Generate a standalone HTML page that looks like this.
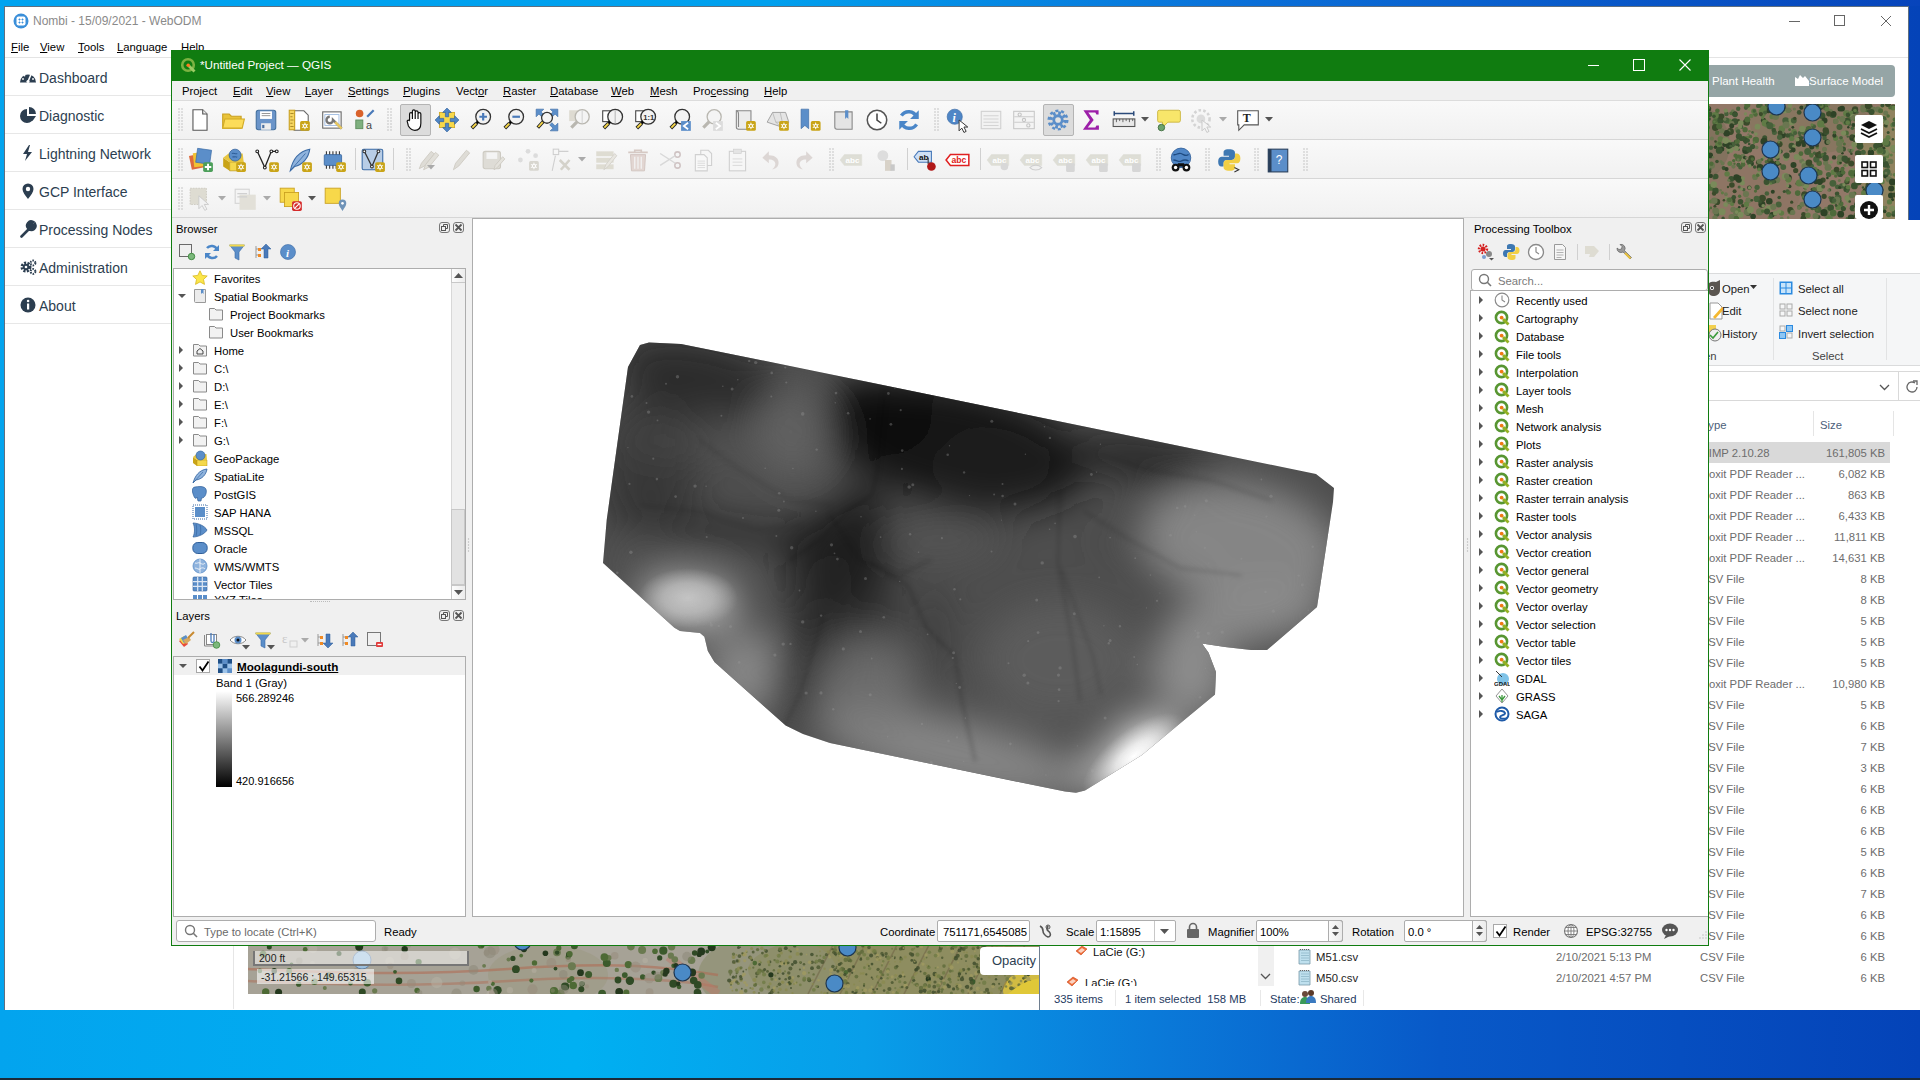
<!DOCTYPE html><html><head><meta charset="utf-8"><title>QGIS</title><style>
*{box-sizing:border-box;margin:0;padding:0}
body{width:1920px;height:1080px;overflow:hidden;position:relative;font-family:"Liberation Sans",sans-serif;font-size:11.3px;color:#000;
background:linear-gradient(90deg,#03a4ee 0%,#00b0f2 30%,#089ee9 45%,#0a7ad9 60%,#0859c8 75%,#0443b8 100%)}
.a{position:absolute}
.t{position:absolute;white-space:nowrap;line-height:14px}
.ico{position:absolute}
</style></head><body>
<div class="a" style="left:0;top:1078px;width:1920px;height:2px;background:#1b2a38"></div>
<div class="a" style="left:0;top:0;width:1920px;height:6px;background:linear-gradient(90deg,#00a3f0 0%,#00a0ee 40%,#0a6fd8 65%,#0744bb 100%)"></div>
<div class="a" style="left:4px;top:6px;width:1905px;height:1004px;background:#fff;border:1px solid #5f6f80;border-bottom:none"></div>
<svg class="a" style="left:13px;top:13px" width="16" height="16"><circle cx="8" cy="8" r="7.5" fill="#3b8fd9"/><rect x="3.5" y="3.5" width="9" height="9" rx="2" fill="#fff"/><path d="M5.5 6.5h2M6.5 5.5v2M8.5 6.5h2M9.5 5.5v2M5.5 9.5h2M6.5 8.5v2M8.5 9.5h2M9.5 8.5v2" stroke="#3b8fd9" stroke-width=".9"/></svg>
<div class="t" style="left:33px;top:14px;font-size:12px;color:#8a8a8a">Nombi - 15/09/2021 - WebODM</div>
<div class="a" style="left:5px;top:57px;width:1903px;height:1px;background:#e4e4e4"></div>
<div class="t" style="left:11px;top:40px"><u>F</u>ile</div>
<div class="t" style="left:40px;top:40px"><u>V</u>iew</div>
<div class="t" style="left:78px;top:40px"><u>T</u>ools</div>
<div class="t" style="left:117px;top:40px"><u>L</u>anguage</div>
<div class="t" style="left:181px;top:40px"><u>H</u>elp</div>
<div class="a" style="left:1789px;top:21px;width:11px;height:1px;background:#666"></div>
<div class="a" style="left:1834px;top:15px;width:11px;height:11px;border:1px solid #666"></div>
<svg class="a" style="left:1880px;top:15px" width="12" height="12"><path d="M1 1L11 11M11 1L1 11" stroke="#666" stroke-width="1"/></svg>
<div class="a" style="left:5px;top:95px;width:170px;height:1px;background:#e7e7e7"></div>
<div class="t" style="left:39px;top:70px;font-size:14px;line-height:16px;color:#2c3e50">Dashboard</div>
<svg class="a" style="left:19px;top:68px" width="18" height="18" viewBox="0 0 18 18"><path d="M1 14.5a8 8 0 0 1 16 0z" fill="#2c3e50"/><path d="M9 13.5l3-7" stroke="#fff" stroke-width="1.6"/><circle cx="9" cy="13.5" r="1.6" fill="#fff"/><circle cx="4" cy="11" r=".9" fill="#fff"/><circle cx="5.5" cy="7.5" r=".9" fill="#fff"/><circle cx="14" cy="11" r=".9" fill="#fff"/></svg>
<div class="a" style="left:5px;top:133px;width:170px;height:1px;background:#e7e7e7"></div>
<div class="t" style="left:39px;top:108px;font-size:14px;line-height:16px;color:#2c3e50">Diagnostic</div>
<svg class="a" style="left:19px;top:106px" width="18" height="18" viewBox="0 0 18 18"><path d="M8 3a7 7 0 1 0 7 7H8z" fill="#2c3e50"/><path d="M10 1v7h7a7 7 0 0 0-7-7z" fill="#2c3e50"/><path d="M10 10h7l-3.5 5z" fill="#2c3e50"/></svg>
<div class="a" style="left:5px;top:171px;width:170px;height:1px;background:#e7e7e7"></div>
<div class="t" style="left:39px;top:146px;font-size:14px;line-height:16px;color:#2c3e50">Lightning Network</div>
<svg class="a" style="left:19px;top:144px" width="18" height="18" viewBox="0 0 18 18"><path d="M10 1L4 10h4l-2 7 7-9H9l2-7z" fill="#2c3e50"/></svg>
<div class="a" style="left:5px;top:209px;width:170px;height:1px;background:#e7e7e7"></div>
<div class="t" style="left:39px;top:184px;font-size:14px;line-height:16px;color:#2c3e50">GCP Interface</div>
<svg class="a" style="left:19px;top:182px" width="18" height="18" viewBox="0 0 18 18"><path d="M9 17c-3-4-5.5-7-5.5-10a5.5 5.5 0 0 1 11 0c0 3-2.5 6-5.5 10z" fill="#2c3e50"/><circle cx="9" cy="7" r="2.2" fill="#fff"/></svg>
<div class="a" style="left:5px;top:247px;width:170px;height:1px;background:#e7e7e7"></div>
<div class="t" style="left:39px;top:222px;font-size:14px;line-height:16px;color:#2c3e50">Processing Nodes</div>
<svg class="a" style="left:19px;top:220px" width="18" height="18" viewBox="0 0 18 18"><path d="M2.5 16.5l7.5-7.5M10 9a4 4 0 0 0 6-5l-2.5 2.5-2-2L14 2a4 4 0 0 0-5 6" stroke="#2c3e50" stroke-width="2.6" fill="#2c3e50" stroke-linecap="round"/></svg>
<div class="a" style="left:5px;top:285px;width:170px;height:1px;background:#e7e7e7"></div>
<div class="t" style="left:39px;top:260px;font-size:14px;line-height:16px;color:#2c3e50">Administration</div>
<svg class="a" style="left:19px;top:258px" width="18" height="18" viewBox="0 0 18 18"><circle cx="7" cy="9" r="4" fill="none" stroke="#2c3e50" stroke-width="3" stroke-dasharray="2 1.3"/><circle cx="7" cy="9" r="3.2" fill="#2c3e50"/><circle cx="7" cy="9" r="1.3" fill="#fff"/><circle cx="14" cy="5" r="2.4" fill="none" stroke="#2c3e50" stroke-width="2" stroke-dasharray="1.4 1"/><circle cx="14" cy="13.5" r="2.4" fill="none" stroke="#2c3e50" stroke-width="2" stroke-dasharray="1.4 1"/></svg>
<div class="a" style="left:5px;top:323px;width:170px;height:1px;background:#e7e7e7"></div>
<div class="t" style="left:39px;top:298px;font-size:14px;line-height:16px;color:#2c3e50">About</div>
<svg class="a" style="left:19px;top:296px" width="18" height="18" viewBox="0 0 18 18"><circle cx="9" cy="9" r="7.5" fill="#2c3e50"/><rect x="8" y="7.5" width="2.2" height="6" fill="#fff"/><circle cx="9.1" cy="5" r="1.3" fill="#fff"/></svg>
<div class="a" style="left:233px;top:945px;width:1px;height:64px;background:#e6e6e6"></div>
<div class="a" style="left:1650px;top:65px;width:245px;height:32px;border-radius:4px;background:#95a5a6"></div>
<div class="t" style="left:1712px;top:73px;font-size:11.5px;line-height:16px;color:#fff">Plant Health</div>
<svg class="a" style="left:1795px;top:74px" width="14" height="12"><path d="M0 12V3l3 2 2-4 3 3 2-2 4 5v5z" fill="#fff"/></svg>
<div class="t" style="left:1809px;top:73px;font-size:11.5px;line-height:16px;color:#fff">Surface Model</div>
<svg class="a" style="left:1650px;top:104px" width="245" height="115"><rect width="245" height="115" fill="#927868"/><ellipse cx="160" cy="20" rx="60" ry="30" fill="#7d7458" opacity="0.5"/><ellipse cx="235" cy="60" rx="25" ry="60" fill="#8f8a5a" opacity="0.6"/><ellipse cx="100" cy="90" rx="50" ry="30" fill="#8a7260" opacity="0.5"/><ellipse cx="40" cy="40" rx="40" ry="40" fill="#6f6a50" opacity="0.4"/><circle cx="79.3" cy="17.3" r="2.8" fill="#5f7a45"/><circle cx="201.2" cy="10.8" r="2.6" fill="#7a8a5a"/><circle cx="9.2" cy="49.9" r="1.4" fill="#5f7a45"/><circle cx="135.0" cy="6.8" r="2.6" fill="#7a8a5a"/><circle cx="154.5" cy="67.0" r="1.3" fill="#2e4226"/><circle cx="12.1" cy="25.4" r="2.5" fill="#3a5230"/><circle cx="71.0" cy="16.6" r="1.5" fill="#46603a"/><circle cx="137.3" cy="78.4" r="1.4" fill="#7a8a5a"/><circle cx="91.2" cy="63.0" r="1.4" fill="#4e6a3a"/><circle cx="151.7" cy="57.1" r="2.5" fill="#6a7650"/><circle cx="114.1" cy="106.2" r="2.1" fill="#7a8a5a"/><circle cx="194.6" cy="80.4" r="1.8" fill="#46603a"/><circle cx="128.7" cy="100.6" r="3.0" fill="#46603a"/><circle cx="149.2" cy="8.4" r="2.4" fill="#3a5230"/><circle cx="185.5" cy="17.5" r="2.4" fill="#4e6a3a"/><circle cx="235.7" cy="8.9" r="2.5" fill="#6a7650"/><circle cx="83.3" cy="40.3" r="2.4" fill="#3a4a2a"/><circle cx="16.8" cy="10.8" r="1.8" fill="#5f7a45"/><circle cx="14.9" cy="80.7" r="2.8" fill="#3a4a2a"/><circle cx="69.7" cy="44.4" r="2.8" fill="#4e6a3a"/><circle cx="230.5" cy="40.9" r="2.7" fill="#3a4a2a"/><circle cx="14.4" cy="88.3" r="1.5" fill="#7a8a5a"/><circle cx="97.5" cy="105.4" r="2.4" fill="#3a5230"/><circle cx="110.1" cy="63.2" r="3.3" fill="#2e4226"/><circle cx="211.7" cy="32.0" r="2.2" fill="#6a7650"/><circle cx="167.3" cy="43.8" r="1.8" fill="#5f7a45"/><circle cx="43.2" cy="26.7" r="1.8" fill="#3a4a2a"/><circle cx="203.6" cy="21.0" r="1.9" fill="#3a5230"/><circle cx="102.6" cy="42.5" r="2.6" fill="#3a5230"/><circle cx="169.2" cy="59.3" r="2.7" fill="#4e6a3a"/><circle cx="111.9" cy="100.2" r="3.5" fill="#2e4226"/><circle cx="97.5" cy="45.3" r="2.4" fill="#2e4226"/><circle cx="15.3" cy="7.7" r="1.7" fill="#3a5230"/><circle cx="26.9" cy="69.1" r="1.4" fill="#3a5230"/><circle cx="131.5" cy="109.1" r="2.7" fill="#5f7a45"/><circle cx="214.2" cy="70.6" r="1.6" fill="#46603a"/><circle cx="234.1" cy="69.3" r="2.3" fill="#5f7a45"/><circle cx="208.0" cy="114.2" r="2.3" fill="#3a4a2a"/><circle cx="76.4" cy="16.6" r="3.0" fill="#46603a"/><circle cx="117.3" cy="79.6" r="2.4" fill="#7a8a5a"/><circle cx="233.0" cy="60.7" r="1.6" fill="#4e6a3a"/><circle cx="185.7" cy="34.3" r="2.7" fill="#5f7a45"/><circle cx="170.6" cy="30.0" r="2.1" fill="#3a5230"/><circle cx="87.1" cy="25.6" r="2.5" fill="#6a7650"/><circle cx="155.9" cy="70.5" r="3.1" fill="#7a8a5a"/><circle cx="197.5" cy="94.1" r="3.0" fill="#7a8a5a"/><circle cx="49.0" cy="56.7" r="3.0" fill="#4e6a3a"/><circle cx="193.6" cy="54.3" r="1.7" fill="#6a7650"/><circle cx="109.6" cy="107.8" r="3.6" fill="#6a7650"/><circle cx="19.7" cy="11.7" r="2.3" fill="#6a7650"/><circle cx="50.1" cy="71.8" r="3.4" fill="#4e6a3a"/><circle cx="117.5" cy="75.1" r="3.1" fill="#5f7a45"/><circle cx="204.5" cy="13.8" r="2.1" fill="#7a8a5a"/><circle cx="117.1" cy="20.5" r="3.1" fill="#6a7650"/><circle cx="21.3" cy="108.8" r="2.9" fill="#3a4a2a"/><circle cx="98.3" cy="108.9" r="2.9" fill="#3a5230"/><circle cx="243.3" cy="3.2" r="2.6" fill="#3a4a2a"/><circle cx="197.6" cy="16.8" r="3.2" fill="#3a4a2a"/><circle cx="161.0" cy="40.3" r="2.5" fill="#3a5230"/><circle cx="5.2" cy="91.9" r="2.9" fill="#5f7a45"/><circle cx="129.0" cy="107.4" r="2.2" fill="#7a8a5a"/><circle cx="202.4" cy="24.3" r="1.8" fill="#46603a"/><circle cx="122.8" cy="87.8" r="2.0" fill="#2e4226"/><circle cx="204.4" cy="7.0" r="3.0" fill="#3a4a2a"/><circle cx="162.3" cy="93.7" r="2.4" fill="#3a5230"/><circle cx="130.3" cy="60.2" r="1.2" fill="#3a4a2a"/><circle cx="190.2" cy="70.0" r="3.1" fill="#3a5230"/><circle cx="42.2" cy="54.5" r="2.9" fill="#4e6a3a"/><circle cx="79.9" cy="59.6" r="2.5" fill="#5f7a45"/><circle cx="216.4" cy="6.5" r="1.7" fill="#4e6a3a"/><circle cx="189.2" cy="58.4" r="2.5" fill="#5f7a45"/><circle cx="108.6" cy="70.4" r="2.4" fill="#7a8a5a"/><circle cx="169.7" cy="52.0" r="2.5" fill="#3a4a2a"/><circle cx="124.4" cy="28.5" r="2.5" fill="#46603a"/><circle cx="226.1" cy="102.7" r="1.7" fill="#3a4a2a"/><circle cx="33.6" cy="14.0" r="2.3" fill="#5f7a45"/><circle cx="164.4" cy="49.3" r="1.7" fill="#46603a"/><circle cx="192.1" cy="103.2" r="1.6" fill="#6a7650"/><circle cx="35.0" cy="101.5" r="3.5" fill="#7a8a5a"/><circle cx="182.9" cy="10.8" r="3.3" fill="#3a5230"/><circle cx="242.5" cy="95.7" r="1.6" fill="#2e4226"/><circle cx="243.5" cy="46.4" r="2.2" fill="#6a7650"/><circle cx="78.0" cy="83.0" r="1.2" fill="#3a4a2a"/><circle cx="107.9" cy="2.1" r="2.0" fill="#46603a"/><circle cx="125.5" cy="7.4" r="3.6" fill="#7a8a5a"/><circle cx="238.1" cy="12.0" r="1.8" fill="#4e6a3a"/><circle cx="221.9" cy="20.9" r="3.0" fill="#2e4226"/><circle cx="208.1" cy="77.7" r="3.5" fill="#2e4226"/><circle cx="36.6" cy="105.7" r="2.6" fill="#6a7650"/><circle cx="21.9" cy="6.6" r="2.9" fill="#2e4226"/><circle cx="219.3" cy="30.9" r="1.2" fill="#5f7a45"/><circle cx="196.4" cy="9.6" r="3.3" fill="#5f7a45"/><circle cx="64.8" cy="14.0" r="1.2" fill="#2e4226"/><circle cx="227.0" cy="30.8" r="1.5" fill="#7a8a5a"/><circle cx="229.8" cy="111.5" r="1.8" fill="#3a5230"/><circle cx="49.4" cy="35.9" r="1.9" fill="#7a8a5a"/><circle cx="71.0" cy="57.5" r="1.6" fill="#6a7650"/><circle cx="196.9" cy="114.4" r="1.3" fill="#4e6a3a"/><circle cx="179.6" cy="63.4" r="1.7" fill="#3a4a2a"/><circle cx="60.2" cy="51.4" r="2.8" fill="#2e4226"/><circle cx="160.8" cy="62.8" r="3.3" fill="#46603a"/><circle cx="168.5" cy="113.0" r="2.0" fill="#3a5230"/><circle cx="99.2" cy="40.0" r="1.3" fill="#3a5230"/><circle cx="3.5" cy="71.9" r="3.3" fill="#2e4226"/><circle cx="40.0" cy="9.7" r="3.2" fill="#46603a"/><circle cx="146.7" cy="79.7" r="1.3" fill="#3a5230"/><circle cx="38.6" cy="51.3" r="1.8" fill="#6a7650"/><circle cx="238.3" cy="62.9" r="1.8" fill="#46603a"/><circle cx="53.4" cy="21.0" r="2.0" fill="#5f7a45"/><circle cx="116.3" cy="57.8" r="1.7" fill="#4e6a3a"/><circle cx="22.3" cy="94.0" r="1.5" fill="#4e6a3a"/><circle cx="96.5" cy="34.5" r="2.7" fill="#5f7a45"/><circle cx="143.5" cy="60.9" r="3.0" fill="#2e4226"/><circle cx="187.3" cy="82.9" r="2.4" fill="#46603a"/><circle cx="177.4" cy="74.0" r="1.3" fill="#2e4226"/><circle cx="179.8" cy="93.4" r="1.5" fill="#4e6a3a"/><circle cx="202.5" cy="67.2" r="3.3" fill="#7a8a5a"/><circle cx="20.8" cy="4.8" r="2.7" fill="#5f7a45"/><circle cx="92.3" cy="51.9" r="1.3" fill="#4e6a3a"/><circle cx="153.4" cy="78.3" r="2.4" fill="#4e6a3a"/><circle cx="112.0" cy="8.1" r="3.4" fill="#5f7a45"/><circle cx="161.5" cy="7.6" r="3.0" fill="#46603a"/><circle cx="198.3" cy="97.3" r="1.8" fill="#7a8a5a"/><circle cx="56.5" cy="74.7" r="2.3" fill="#2e4226"/><circle cx="18.8" cy="104.7" r="1.9" fill="#4e6a3a"/><circle cx="151.2" cy="73.9" r="1.4" fill="#3a5230"/><circle cx="81.3" cy="74.9" r="2.9" fill="#3a5230"/><circle cx="3.1" cy="7.0" r="1.8" fill="#5f7a45"/><circle cx="169.6" cy="77.7" r="1.9" fill="#46603a"/><circle cx="113.8" cy="53.6" r="1.5" fill="#7a8a5a"/><circle cx="76.4" cy="9.9" r="2.3" fill="#46603a"/><circle cx="112.4" cy="94.3" r="3.5" fill="#3a4a2a"/><circle cx="243.5" cy="44.5" r="3.4" fill="#7a8a5a"/><circle cx="18.3" cy="10.4" r="3.0" fill="#46603a"/><circle cx="233.4" cy="15.2" r="3.2" fill="#46603a"/><circle cx="217.3" cy="80.9" r="1.8" fill="#3a4a2a"/><circle cx="96.5" cy="18.3" r="3.5" fill="#3a4a2a"/><circle cx="99.3" cy="83.6" r="2.2" fill="#2e4226"/><circle cx="77.4" cy="96.6" r="1.2" fill="#6a7650"/><circle cx="205.6" cy="13.8" r="3.4" fill="#4e6a3a"/><circle cx="220.9" cy="33.3" r="2.1" fill="#2e4226"/><circle cx="95.6" cy="100.0" r="1.4" fill="#2e4226"/><circle cx="185.1" cy="98.2" r="1.9" fill="#4e6a3a"/><circle cx="204.5" cy="32.8" r="3.4" fill="#7a8a5a"/><circle cx="237.9" cy="50.2" r="2.0" fill="#6a7650"/><circle cx="192.4" cy="49.2" r="1.3" fill="#2e4226"/><circle cx="223.8" cy="108.2" r="2.5" fill="#5f7a45"/><circle cx="12.1" cy="84.2" r="2.3" fill="#3a5230"/><circle cx="157.9" cy="32.9" r="1.3" fill="#3a5230"/><circle cx="41.8" cy="47.7" r="1.9" fill="#46603a"/><circle cx="181.1" cy="112.3" r="1.8" fill="#7a8a5a"/><circle cx="73.7" cy="64.1" r="2.1" fill="#3a5230"/><circle cx="157.6" cy="8.6" r="2.4" fill="#3a4a2a"/><circle cx="134.8" cy="52.1" r="2.0" fill="#3a4a2a"/><circle cx="104.7" cy="63.0" r="1.8" fill="#3a5230"/><circle cx="83.8" cy="10.5" r="1.8" fill="#46603a"/><circle cx="198.3" cy="23.2" r="1.2" fill="#2e4226"/><circle cx="93.8" cy="85.8" r="1.7" fill="#46603a"/><circle cx="82.9" cy="7.1" r="1.9" fill="#6a7650"/><circle cx="30.8" cy="57.9" r="2.7" fill="#7a8a5a"/><circle cx="22.7" cy="103.1" r="2.1" fill="#3a4a2a"/><circle cx="105.8" cy="35.9" r="3.2" fill="#4e6a3a"/><circle cx="31.2" cy="48.9" r="3.0" fill="#3a4a2a"/><circle cx="237.2" cy="56.3" r="1.4" fill="#3a4a2a"/><circle cx="238.2" cy="28.6" r="1.5" fill="#3a5230"/><circle cx="37.3" cy="111.8" r="1.5" fill="#3a4a2a"/><circle cx="20.8" cy="89.3" r="1.2" fill="#3a5230"/><circle cx="57.0" cy="105.8" r="2.7" fill="#46603a"/><circle cx="235.8" cy="72.0" r="2.5" fill="#2e4226"/><circle cx="171.2" cy="12.9" r="1.4" fill="#7a8a5a"/><circle cx="95.1" cy="25.7" r="2.6" fill="#4e6a3a"/><circle cx="131.7" cy="114.6" r="1.9" fill="#6a7650"/><circle cx="157.9" cy="101.6" r="2.3" fill="#7a8a5a"/><circle cx="134.0" cy="3.4" r="2.2" fill="#46603a"/><circle cx="13.6" cy="22.3" r="3.3" fill="#2e4226"/><circle cx="19.9" cy="26.2" r="2.2" fill="#6a7650"/><circle cx="55.6" cy="3.9" r="2.0" fill="#2e4226"/><circle cx="88.8" cy="45.6" r="1.2" fill="#46603a"/><circle cx="181.1" cy="58.1" r="1.7" fill="#7a8a5a"/><circle cx="76.4" cy="94.3" r="1.8" fill="#7a8a5a"/><circle cx="64.9" cy="102.3" r="1.5" fill="#3a4a2a"/><circle cx="149.5" cy="103.1" r="2.4" fill="#4e6a3a"/><circle cx="232.4" cy="16.8" r="2.1" fill="#7a8a5a"/><circle cx="5.8" cy="68.6" r="2.2" fill="#4e6a3a"/><circle cx="45.1" cy="51.7" r="2.9" fill="#6a7650"/><circle cx="179.5" cy="114.7" r="3.4" fill="#6a7650"/><circle cx="46.7" cy="75.0" r="2.5" fill="#3a4a2a"/><circle cx="7.8" cy="76.4" r="2.1" fill="#6a7650"/><circle cx="241.3" cy="50.9" r="1.5" fill="#5f7a45"/><circle cx="68.6" cy="40.4" r="3.5" fill="#5f7a45"/><circle cx="137.5" cy="87.3" r="2.1" fill="#46603a"/><circle cx="201.4" cy="49.7" r="1.3" fill="#3a4a2a"/><circle cx="48.0" cy="62.3" r="2.3" fill="#6a7650"/><circle cx="89.2" cy="103.2" r="1.3" fill="#2e4226"/><circle cx="60.8" cy="71.9" r="2.2" fill="#2e4226"/><circle cx="8.5" cy="7.2" r="3.4" fill="#46603a"/><circle cx="47.8" cy="7.2" r="2.7" fill="#6a7650"/><circle cx="66.7" cy="110.1" r="2.7" fill="#46603a"/><circle cx="182.9" cy="79.3" r="3.4" fill="#46603a"/><circle cx="0.9" cy="86.9" r="3.4" fill="#5f7a45"/><circle cx="5.9" cy="26.9" r="2.3" fill="#3a4a2a"/><circle cx="233.7" cy="44.4" r="1.8" fill="#2e4226"/><circle cx="199.6" cy="15.3" r="2.4" fill="#4e6a3a"/><circle cx="196.6" cy="84.9" r="3.2" fill="#3a5230"/><circle cx="148.8" cy="37.7" r="2.0" fill="#6a7650"/><circle cx="192.0" cy="68.5" r="2.4" fill="#2e4226"/><circle cx="184.5" cy="28.4" r="1.4" fill="#4e6a3a"/><circle cx="118.0" cy="62.6" r="1.6" fill="#2e4226"/><circle cx="216.5" cy="113.6" r="1.8" fill="#5f7a45"/><circle cx="51.0" cy="48.4" r="3.6" fill="#3a4a2a"/><circle cx="42.4" cy="15.3" r="2.3" fill="#7a8a5a"/><circle cx="183.3" cy="97.4" r="2.8" fill="#5f7a45"/><circle cx="191.0" cy="33.8" r="1.9" fill="#46603a"/><circle cx="91.4" cy="84.9" r="1.7" fill="#7a8a5a"/><circle cx="45.5" cy="27.1" r="1.9" fill="#7a8a5a"/><circle cx="80.0" cy="45.5" r="3.6" fill="#7a8a5a"/><circle cx="159.2" cy="11.6" r="2.3" fill="#4e6a3a"/><circle cx="25.1" cy="54.6" r="3.2" fill="#3a4a2a"/><circle cx="224.0" cy="4.6" r="1.9" fill="#5f7a45"/><circle cx="12.3" cy="69.1" r="3.2" fill="#7a8a5a"/><circle cx="227.9" cy="42.8" r="3.3" fill="#3a4a2a"/><circle cx="147.7" cy="89.1" r="2.8" fill="#4e6a3a"/><circle cx="25.9" cy="68.6" r="2.7" fill="#7a8a5a"/><circle cx="9.2" cy="39.1" r="1.3" fill="#46603a"/><circle cx="9.4" cy="84.2" r="3.4" fill="#4e6a3a"/><circle cx="200.6" cy="47.0" r="2.1" fill="#46603a"/><circle cx="19.1" cy="3.6" r="2.4" fill="#3a4a2a"/><circle cx="15.5" cy="11.7" r="2.1" fill="#3a5230"/><circle cx="156.6" cy="10.5" r="1.6" fill="#46603a"/><circle cx="100.4" cy="32.6" r="1.9" fill="#4e6a3a"/><circle cx="76.5" cy="65.1" r="2.1" fill="#2e4226"/><circle cx="4.5" cy="88.2" r="3.1" fill="#7a8a5a"/><circle cx="95.7" cy="46.6" r="3.5" fill="#2e4226"/><circle cx="220.9" cy="48.7" r="3.2" fill="#2e4226"/><circle cx="141.6" cy="41.9" r="3.1" fill="#3a5230"/><circle cx="3.6" cy="63.4" r="2.7" fill="#2e4226"/><circle cx="21.8" cy="71.6" r="2.1" fill="#3a5230"/><circle cx="35.7" cy="32.6" r="2.5" fill="#5f7a45"/><circle cx="26.7" cy="56.4" r="3.1" fill="#7a8a5a"/><circle cx="73.9" cy="96.3" r="1.3" fill="#3a4a2a"/><circle cx="77.1" cy="69.9" r="2.7" fill="#5f7a45"/><circle cx="221.5" cy="71.3" r="3.2" fill="#3a5230"/><circle cx="156.9" cy="98.5" r="2.7" fill="#7a8a5a"/><circle cx="203.2" cy="21.0" r="1.7" fill="#2e4226"/><circle cx="229.9" cy="18.0" r="2.1" fill="#3a5230"/><circle cx="60.5" cy="83.4" r="3.4" fill="#4e6a3a"/><circle cx="216.5" cy="96.9" r="2.8" fill="#6a7650"/><circle cx="28.8" cy="68.9" r="2.5" fill="#46603a"/><circle cx="159.0" cy="35.4" r="1.8" fill="#2e4226"/><circle cx="161.4" cy="51.4" r="2.3" fill="#4e6a3a"/><circle cx="0.9" cy="113.4" r="2.3" fill="#3a4a2a"/><circle cx="187.1" cy="89.7" r="2.3" fill="#3a5230"/><circle cx="198.6" cy="46.0" r="1.4" fill="#6a7650"/><circle cx="105.5" cy="10.5" r="2.3" fill="#4e6a3a"/><circle cx="10.0" cy="15.0" r="3.4" fill="#6a7650"/><circle cx="190.5" cy="58.8" r="1.3" fill="#2e4226"/><circle cx="159.9" cy="90.2" r="1.3" fill="#5f7a45"/><circle cx="244.1" cy="84.2" r="3.2" fill="#7a8a5a"/><circle cx="32.2" cy="101.9" r="1.9" fill="#3a5230"/><circle cx="168.1" cy="82.9" r="1.7" fill="#6a7650"/><circle cx="149.6" cy="29.0" r="2.0" fill="#46603a"/><circle cx="221.7" cy="52.5" r="1.8" fill="#3a4a2a"/><circle cx="51.0" cy="30.2" r="2.4" fill="#6a7650"/><circle cx="91.2" cy="22.9" r="2.2" fill="#46603a"/><circle cx="166.5" cy="103.0" r="1.6" fill="#46603a"/><circle cx="28.2" cy="61.0" r="2.7" fill="#6a7650"/><circle cx="236.7" cy="52.1" r="2.5" fill="#5f7a45"/><circle cx="61.7" cy="61.6" r="3.3" fill="#6a7650"/><circle cx="64.9" cy="113.9" r="2.6" fill="#6a7650"/><circle cx="81.1" cy="9.4" r="1.8" fill="#4e6a3a"/><circle cx="72.6" cy="59.4" r="1.9" fill="#6a7650"/><circle cx="179.6" cy="85.9" r="1.7" fill="#46603a"/><circle cx="150.9" cy="49.7" r="2.4" fill="#4e6a3a"/><circle cx="32.3" cy="26.1" r="2.8" fill="#4e6a3a"/><circle cx="13.3" cy="65.2" r="1.9" fill="#6a7650"/><circle cx="130.9" cy="47.5" r="1.9" fill="#3a5230"/><circle cx="50.0" cy="71.8" r="2.3" fill="#3a5230"/><circle cx="3.5" cy="92.2" r="2.9" fill="#3a4a2a"/><circle cx="23.5" cy="73.4" r="3.3" fill="#46603a"/><circle cx="98.5" cy="30.4" r="1.2" fill="#6a7650"/><circle cx="145.7" cy="66.5" r="2.6" fill="#3a4a2a"/><circle cx="60.9" cy="103.9" r="1.3" fill="#4e6a3a"/><circle cx="99.5" cy="27.3" r="1.3" fill="#5f7a45"/><circle cx="3.0" cy="63.4" r="3.5" fill="#3a5230"/><circle cx="101.2" cy="59.6" r="2.7" fill="#2e4226"/><circle cx="199.3" cy="20.1" r="1.9" fill="#46603a"/><circle cx="153.4" cy="114.3" r="2.9" fill="#3a4a2a"/><circle cx="175.3" cy="0.7" r="3.2" fill="#3a4a2a"/><circle cx="19.7" cy="75.4" r="1.6" fill="#5f7a45"/><circle cx="64.0" cy="74.1" r="1.5" fill="#46603a"/><circle cx="174.4" cy="30.6" r="2.5" fill="#2e4226"/><circle cx="168.0" cy="105.5" r="3.5" fill="#46603a"/><circle cx="157.3" cy="111.0" r="1.7" fill="#4e6a3a"/><circle cx="41.6" cy="104.0" r="3.2" fill="#7a8a5a"/><circle cx="231.5" cy="85.8" r="2.0" fill="#2e4226"/><circle cx="80.5" cy="27.5" r="3.4" fill="#3a4a2a"/><circle cx="115.7" cy="61.0" r="1.2" fill="#4e6a3a"/><circle cx="107.1" cy="83.3" r="2.6" fill="#46603a"/><circle cx="193.4" cy="45.0" r="2.6" fill="#3a5230"/><circle cx="35.4" cy="3.1" r="1.5" fill="#3a5230"/><circle cx="84.5" cy="16.3" r="1.3" fill="#4e6a3a"/><circle cx="33.9" cy="74.0" r="1.3" fill="#5f7a45"/><circle cx="180.5" cy="7.6" r="2.6" fill="#6a7650"/><circle cx="48.8" cy="109.8" r="2.5" fill="#5f7a45"/><circle cx="215.5" cy="86.9" r="2.9" fill="#2e4226"/><circle cx="26.2" cy="23.7" r="1.5" fill="#4e6a3a"/><circle cx="232.6" cy="104.8" r="3.0" fill="#5f7a45"/><circle cx="202.1" cy="72.6" r="1.9" fill="#5f7a45"/><circle cx="32.5" cy="91.1" r="2.8" fill="#46603a"/><circle cx="78.2" cy="48.7" r="1.3" fill="#46603a"/><circle cx="227.9" cy="5.6" r="3.0" fill="#6a7650"/><circle cx="188.5" cy="69.2" r="2.3" fill="#46603a"/><circle cx="151.5" cy="3.6" r="2.2" fill="#2e4226"/><circle cx="127.1" cy="11.3" r="2.3" fill="#4e6a3a"/><circle cx="131.8" cy="24.9" r="3.3" fill="#5f7a45"/><circle cx="140.8" cy="33.0" r="2.2" fill="#7a8a5a"/><circle cx="70.6" cy="86.3" r="1.3" fill="#6a7650"/><circle cx="120.3" cy="56.5" r="3.1" fill="#3a5230"/><circle cx="237.0" cy="68.1" r="3.5" fill="#46603a"/><circle cx="141.6" cy="18.3" r="3.2" fill="#7a8a5a"/><circle cx="122.1" cy="12.6" r="2.7" fill="#5f7a45"/><circle cx="120.1" cy="114.0" r="2.5" fill="#5f7a45"/><circle cx="153.8" cy="40.9" r="2.2" fill="#2e4226"/><circle cx="218.5" cy="85.7" r="2.2" fill="#4e6a3a"/><circle cx="91.1" cy="34.9" r="2.2" fill="#3a5230"/><circle cx="92.9" cy="101.7" r="1.8" fill="#3a4a2a"/><circle cx="31.1" cy="68.3" r="2.9" fill="#4e6a3a"/><circle cx="85.4" cy="37.6" r="1.6" fill="#3a4a2a"/><circle cx="162.2" cy="85.3" r="1.6" fill="#3a4a2a"/><circle cx="168.8" cy="29.6" r="1.8" fill="#6a7650"/><circle cx="113.2" cy="101.8" r="1.8" fill="#7a8a5a"/><circle cx="65.5" cy="86.8" r="3.2" fill="#3a5230"/><circle cx="177.2" cy="112.1" r="2.9" fill="#6a7650"/><circle cx="39.4" cy="37.7" r="1.7" fill="#5f7a45"/><circle cx="40.3" cy="75.7" r="1.7" fill="#3a5230"/><circle cx="241.0" cy="91.4" r="3.0" fill="#2e4226"/><circle cx="67.1" cy="12.6" r="3.4" fill="#46603a"/><circle cx="50.6" cy="44.7" r="1.3" fill="#2e4226"/><circle cx="209.3" cy="50.2" r="1.7" fill="#46603a"/><circle cx="113.5" cy="16.3" r="2.6" fill="#2e4226"/><circle cx="1.4" cy="27.9" r="3.2" fill="#2e4226"/><circle cx="207.3" cy="76.8" r="2.8" fill="#7a8a5a"/><circle cx="166.5" cy="73.8" r="2.3" fill="#6a7650"/><circle cx="63.7" cy="80.6" r="3.3" fill="#7a8a5a"/><circle cx="191.7" cy="82.0" r="2.7" fill="#46603a"/><circle cx="208.1" cy="55.5" r="1.2" fill="#2e4226"/><circle cx="127.0" cy="76.0" r="3.3" fill="#6a7650"/><circle cx="190.7" cy="44.7" r="2.4" fill="#5f7a45"/><circle cx="9.3" cy="62.5" r="1.6" fill="#7a8a5a"/><circle cx="127.2" cy="11.6" r="2.6" fill="#7a8a5a"/><circle cx="175.7" cy="58.9" r="2.7" fill="#6a7650"/><circle cx="127.8" cy="47.2" r="3.5" fill="#7a8a5a"/><circle cx="242.6" cy="21.1" r="2.4" fill="#5f7a45"/><circle cx="178.6" cy="70.6" r="2.7" fill="#46603a"/><circle cx="67.2" cy="46.0" r="1.2" fill="#2e4226"/><circle cx="224.3" cy="72.3" r="2.8" fill="#46603a"/><circle cx="26.8" cy="34.9" r="2.2" fill="#7a8a5a"/><circle cx="243.6" cy="110.5" r="2.3" fill="#3a5230"/><circle cx="31.7" cy="89.3" r="3.1" fill="#7a8a5a"/><circle cx="114.9" cy="64.6" r="1.7" fill="#3a5230"/><circle cx="86.5" cy="73.5" r="3.2" fill="#2e4226"/><circle cx="114.7" cy="33.8" r="2.5" fill="#3a5230"/><circle cx="191.1" cy="54.0" r="3.1" fill="#7a8a5a"/><circle cx="65.5" cy="43.3" r="1.8" fill="#2e4226"/><circle cx="166.3" cy="55.4" r="3.1" fill="#46603a"/><circle cx="87.7" cy="75.3" r="2.0" fill="#3a4a2a"/><circle cx="105.0" cy="73.3" r="2.8" fill="#6a7650"/><circle cx="37.4" cy="34.9" r="2.1" fill="#5f7a45"/><circle cx="202.8" cy="104.2" r="3.1" fill="#3a5230"/><circle cx="130.0" cy="39.7" r="2.6" fill="#4e6a3a"/><circle cx="51.4" cy="8.3" r="1.9" fill="#5f7a45"/><circle cx="141.7" cy="98.2" r="1.6" fill="#3a4a2a"/><circle cx="84.9" cy="17.6" r="3.4" fill="#3a5230"/><circle cx="149.3" cy="79.1" r="3.5" fill="#5f7a45"/><circle cx="163.8" cy="102.8" r="3.1" fill="#46603a"/><circle cx="48.4" cy="79.7" r="2.5" fill="#3a4a2a"/><circle cx="164.5" cy="13.5" r="1.5" fill="#2e4226"/><circle cx="57.4" cy="16.0" r="2.4" fill="#4e6a3a"/><circle cx="118.7" cy="104.1" r="2.9" fill="#7a8a5a"/><circle cx="122.1" cy="62.0" r="3.3" fill="#4e6a3a"/><circle cx="39.3" cy="36.9" r="2.9" fill="#3a4a2a"/><circle cx="163.0" cy="96.7" r="2.1" fill="#2e4226"/><circle cx="245.0" cy="77.7" r="1.6" fill="#6a7650"/><circle cx="155.9" cy="3.3" r="2.7" fill="#6a7650"/><circle cx="198.1" cy="10.8" r="2.4" fill="#3a5230"/><circle cx="8.3" cy="82.6" r="2.7" fill="#6a7650"/><circle cx="23.1" cy="75.8" r="2.0" fill="#7a8a5a"/><circle cx="69.6" cy="39.3" r="1.8" fill="#4e6a3a"/><circle cx="202.5" cy="33.7" r="3.2" fill="#2e4226"/><circle cx="81.8" cy="113.2" r="3.3" fill="#6a7650"/><circle cx="238.9" cy="75.3" r="3.1" fill="#6a7650"/><circle cx="47.1" cy="82.0" r="1.5" fill="#5f7a45"/><circle cx="192.1" cy="4.6" r="2.9" fill="#2e4226"/><circle cx="133.6" cy="5.7" r="1.9" fill="#4e6a3a"/><circle cx="11.4" cy="94.5" r="2.3" fill="#4e6a3a"/><circle cx="193.3" cy="104.6" r="2.7" fill="#3a5230"/><circle cx="153.6" cy="80.1" r="2.6" fill="#5f7a45"/><circle cx="52.1" cy="76.7" r="2.3" fill="#3a5230"/><circle cx="24.8" cy="20.8" r="1.3" fill="#5f7a45"/><circle cx="224.0" cy="75.4" r="2.1" fill="#3a5230"/><circle cx="192.7" cy="64.6" r="1.8" fill="#46603a"/><circle cx="45.3" cy="3.9" r="1.2" fill="#4e6a3a"/><circle cx="122.0" cy="60.0" r="3.2" fill="#2e4226"/><circle cx="141.0" cy="105.6" r="2.3" fill="#4e6a3a"/><circle cx="166.6" cy="68.3" r="3.6" fill="#3a5230"/><circle cx="116.5" cy="47.4" r="1.4" fill="#3a4a2a"/><circle cx="52.0" cy="17.5" r="1.2" fill="#4e6a3a"/><circle cx="2.3" cy="77.0" r="3.6" fill="#5f7a45"/><circle cx="53.5" cy="14.0" r="2.3" fill="#46603a"/><circle cx="176.2" cy="27.9" r="3.0" fill="#3a5230"/><circle cx="226.1" cy="42.1" r="3.0" fill="#3a5230"/><circle cx="178.8" cy="9.7" r="2.7" fill="#3a4a2a"/><circle cx="112.8" cy="107.2" r="1.8" fill="#4e6a3a"/><circle cx="175.7" cy="1.3" r="1.2" fill="#5f7a45"/><circle cx="95.3" cy="35.9" r="2.6" fill="#3a4a2a"/><circle cx="149.2" cy="36.4" r="3.5" fill="#3a4a2a"/><circle cx="115.1" cy="19.1" r="3.5" fill="#5f7a45"/><circle cx="89.0" cy="74.2" r="2.7" fill="#2e4226"/><circle cx="116.9" cy="89.5" r="2.3" fill="#46603a"/><circle cx="192.2" cy="65.2" r="1.9" fill="#4e6a3a"/><circle cx="152.4" cy="74.9" r="3.1" fill="#6a7650"/><circle cx="213.0" cy="83.5" r="1.2" fill="#3a5230"/><circle cx="147.3" cy="35.5" r="2.2" fill="#7a8a5a"/><circle cx="92.3" cy="78.8" r="2.6" fill="#7a8a5a"/><circle cx="197.8" cy="32.6" r="1.2" fill="#46603a"/><circle cx="65.7" cy="18.1" r="3.4" fill="#4e6a3a"/><circle cx="70.7" cy="16.2" r="3.3" fill="#3a5230"/><circle cx="67.1" cy="97.9" r="3.1" fill="#3a4a2a"/><circle cx="85.0" cy="9.8" r="2.5" fill="#2e4226"/><circle cx="49.1" cy="86.3" r="3.4" fill="#7a8a5a"/><circle cx="75.8" cy="6.6" r="2.1" fill="#7a8a5a"/><circle cx="226.9" cy="67.4" r="1.2" fill="#2e4226"/><circle cx="112.6" cy="10.1" r="3.1" fill="#5f7a45"/><circle cx="57.1" cy="66.7" r="3.4" fill="#6a7650"/><circle cx="116.8" cy="67.8" r="1.7" fill="#7a8a5a"/><circle cx="22.6" cy="92.7" r="1.9" fill="#6a7650"/><circle cx="98.6" cy="59.5" r="1.6" fill="#4e6a3a"/><circle cx="226.0" cy="56.7" r="3.3" fill="#6a7650"/><circle cx="155.0" cy="90.5" r="1.6" fill="#4e6a3a"/><circle cx="84.5" cy="59.7" r="1.2" fill="#4e6a3a"/><circle cx="50.1" cy="100.1" r="2.6" fill="#7a8a5a"/><circle cx="64.1" cy="89.6" r="2.2" fill="#3a4a2a"/><circle cx="188.0" cy="94.2" r="3.5" fill="#46603a"/><circle cx="206.7" cy="39.0" r="3.6" fill="#2e4226"/><circle cx="20.5" cy="5.9" r="2.5" fill="#3a4a2a"/><circle cx="119.3" cy="97.2" r="3.3" fill="#2e4226"/><circle cx="225.9" cy="81.2" r="1.4" fill="#6a7650"/><circle cx="138.3" cy="73.7" r="3.5" fill="#2e4226"/><circle cx="44.8" cy="97.7" r="2.1" fill="#7a8a5a"/><circle cx="243.0" cy="25.5" r="1.3" fill="#46603a"/><circle cx="230.6" cy="6.8" r="2.5" fill="#4e6a3a"/><circle cx="205.1" cy="5.4" r="3.1" fill="#3a4a2a"/><circle cx="13.7" cy="16.7" r="3.0" fill="#7a8a5a"/><circle cx="165.8" cy="34.4" r="2.6" fill="#5f7a45"/><circle cx="115.3" cy="42.7" r="2.1" fill="#6a7650"/><circle cx="117.9" cy="19.4" r="1.8" fill="#3a5230"/><circle cx="224.0" cy="102.6" r="2.3" fill="#7a8a5a"/><circle cx="195.7" cy="18.0" r="3.2" fill="#5f7a45"/><circle cx="228.8" cy="99.7" r="3.3" fill="#3a5230"/><circle cx="190.7" cy="110.2" r="3.4" fill="#2e4226"/><circle cx="206.4" cy="72.3" r="2.3" fill="#6a7650"/><circle cx="79.0" cy="26.9" r="1.5" fill="#6a7650"/><circle cx="35.0" cy="25.5" r="1.3" fill="#3a4a2a"/><circle cx="135.6" cy="16.6" r="3.3" fill="#46603a"/><circle cx="102.5" cy="28.4" r="1.3" fill="#46603a"/><circle cx="82.0" cy="19.3" r="2.4" fill="#6a7650"/><circle cx="111.8" cy="55.5" r="1.6" fill="#4e6a3a"/><circle cx="154.6" cy="90.6" r="3.4" fill="#3a4a2a"/><circle cx="204.6" cy="13.7" r="3.0" fill="#6a7650"/><circle cx="105.9" cy="30.1" r="1.8" fill="#7a8a5a"/><circle cx="23.9" cy="33.3" r="3.4" fill="#4e6a3a"/><circle cx="203.9" cy="112.5" r="1.5" fill="#4e6a3a"/><circle cx="108.3" cy="58.4" r="2.4" fill="#3a4a2a"/><circle cx="0.5" cy="95.7" r="2.5" fill="#3a5230"/><circle cx="88.2" cy="4.7" r="2.2" fill="#46603a"/><circle cx="140.0" cy="15.9" r="1.6" fill="#7a8a5a"/><circle cx="174.3" cy="22.6" r="1.4" fill="#5f7a45"/><circle cx="217.9" cy="84.0" r="3.0" fill="#3a5230"/><circle cx="50.5" cy="70.4" r="2.9" fill="#7a8a5a"/><circle cx="142.8" cy="23.3" r="1.4" fill="#2e4226"/><circle cx="206.1" cy="105.4" r="2.4" fill="#6a7650"/><circle cx="82.1" cy="96.8" r="3.3" fill="#3a4a2a"/><circle cx="22.1" cy="47.1" r="3.0" fill="#3a5230"/><circle cx="213.6" cy="30.6" r="1.6" fill="#6a7650"/><circle cx="9.0" cy="80.8" r="2.6" fill="#4e6a3a"/><circle cx="87.3" cy="107.2" r="3.5" fill="#5f7a45"/><circle cx="29.6" cy="82.2" r="3.2" fill="#6a7650"/><circle cx="190.9" cy="99.8" r="2.6" fill="#4e6a3a"/><circle cx="71.4" cy="12.4" r="3.0" fill="#3a4a2a"/><circle cx="125.8" cy="61.0" r="2.5" fill="#4e6a3a"/><circle cx="59.7" cy="10.2" r="2.7" fill="#3a5230"/><circle cx="25.2" cy="28.8" r="3.2" fill="#4e6a3a"/><circle cx="4.8" cy="106.5" r="3.0" fill="#46603a"/><circle cx="4.3" cy="68.9" r="2.6" fill="#7a8a5a"/><circle cx="172.1" cy="11.8" r="3.3" fill="#3a5230"/><circle cx="11.1" cy="14.2" r="2.4" fill="#46603a"/><circle cx="27.0" cy="14.0" r="3.3" fill="#7a8a5a"/><circle cx="211.0" cy="16.9" r="2.6" fill="#2e4226"/><circle cx="40.3" cy="95.0" r="3.5" fill="#2e4226"/><circle cx="170.0" cy="68.7" r="2.6" fill="#4e6a3a"/><circle cx="96.9" cy="108.2" r="3.1" fill="#6a7650"/><circle cx="98.2" cy="96.4" r="2.9" fill="#6a7650"/><circle cx="199.7" cy="97.5" r="1.3" fill="#3a5230"/><circle cx="234.7" cy="107.4" r="1.8" fill="#2e4226"/><circle cx="162.5" cy="1.3" r="1.5" fill="#3a5230"/><circle cx="17.0" cy="49.8" r="2.4" fill="#4e6a3a"/><circle cx="55.2" cy="48.4" r="2.2" fill="#3a4a2a"/><circle cx="155.1" cy="93.1" r="3.3" fill="#4e6a3a"/><circle cx="8.4" cy="73.8" r="1.8" fill="#46603a"/><circle cx="153.9" cy="92.7" r="1.3" fill="#5f7a45"/><circle cx="61.4" cy="59.8" r="2.2" fill="#4e6a3a"/><circle cx="70.4" cy="35.1" r="2.8" fill="#5f7a45"/><circle cx="14.8" cy="110.3" r="3.4" fill="#46603a"/><circle cx="20.7" cy="67.9" r="3.4" fill="#3a4a2a"/><circle cx="30.4" cy="15.1" r="1.9" fill="#2e4226"/><circle cx="141.4" cy="31.5" r="3.0" fill="#46603a"/><circle cx="205.7" cy="70.1" r="2.6" fill="#2e4226"/><circle cx="49.3" cy="81.7" r="2.3" fill="#46603a"/><circle cx="150.1" cy="53.9" r="1.9" fill="#7a8a5a"/><circle cx="81.7" cy="21.7" r="2.5" fill="#2e4226"/><circle cx="2.9" cy="40.6" r="3.3" fill="#7a8a5a"/><circle cx="79.4" cy="37.4" r="1.8" fill="#7a8a5a"/><circle cx="72.4" cy="88.8" r="1.6" fill="#5f7a45"/><circle cx="148.5" cy="40.0" r="2.8" fill="#2e4226"/><circle cx="204.4" cy="40.7" r="3.0" fill="#7a8a5a"/><circle cx="242.4" cy="77.9" r="3.4" fill="#2e4226"/><circle cx="82.6" cy="40.5" r="2.8" fill="#46603a"/><circle cx="201.2" cy="59.5" r="3.0" fill="#3a4a2a"/><circle cx="65.8" cy="72.5" r="2.7" fill="#3a5230"/><circle cx="101.2" cy="11.9" r="2.2" fill="#5f7a45"/><circle cx="122.0" cy="110.7" r="2.6" fill="#2e4226"/><circle cx="208.2" cy="32.1" r="2.7" fill="#5f7a45"/><circle cx="93.0" cy="52.0" r="2.3" fill="#6a7650"/><circle cx="71.8" cy="44.9" r="2.5" fill="#2e4226"/><circle cx="158.8" cy="0.8" r="3.0" fill="#3a4a2a"/><circle cx="93.3" cy="34.5" r="2.5" fill="#3a5230"/><circle cx="106.7" cy="43.4" r="1.8" fill="#6a7650"/><circle cx="79.3" cy="97.0" r="3.2" fill="#6a7650"/><circle cx="50.1" cy="49.0" r="3.4" fill="#4e6a3a"/><circle cx="6.3" cy="29.5" r="3.4" fill="#46603a"/><circle cx="225.5" cy="89.0" r="2.5" fill="#2e4226"/><circle cx="126.8" cy="59.5" r="2.8" fill="#2e4226"/><circle cx="113.7" cy="4.7" r="2.8" fill="#3a4a2a"/><circle cx="232.2" cy="77.8" r="2.5" fill="#5f7a45"/><circle cx="100.3" cy="57.6" r="2.8" fill="#3a5230"/><circle cx="215.6" cy="110.9" r="2.4" fill="#3a4a2a"/><circle cx="188.0" cy="103.4" r="2.6" fill="#5f7a45"/><circle cx="41.8" cy="36.6" r="3.5" fill="#46603a"/><circle cx="125.6" cy="12.7" r="3.3" fill="#6a7650"/><circle cx="201.0" cy="113.9" r="3.3" fill="#2e4226"/><circle cx="154.6" cy="60.3" r="3.2" fill="#7a8a5a"/><circle cx="123.7" cy="21.6" r="1.6" fill="#5f7a45"/><circle cx="86.5" cy="114.3" r="2.7" fill="#4e6a3a"/><circle cx="169.5" cy="1.2" r="1.2" fill="#4e6a3a"/><circle cx="224.7" cy="45.7" r="1.4" fill="#4e6a3a"/><circle cx="163.7" cy="22.6" r="2.4" fill="#46603a"/><circle cx="213.4" cy="103.0" r="2.4" fill="#3a5230"/><circle cx="140.7" cy="47.3" r="1.5" fill="#3a5230"/><circle cx="127.0" cy="58.6" r="1.3" fill="#5f7a45"/><circle cx="41.8" cy="60.1" r="3.2" fill="#2e4226"/><circle cx="197.6" cy="7.1" r="1.2" fill="#6a7650"/><circle cx="35.3" cy="27.4" r="1.9" fill="#4e6a3a"/><circle cx="65.3" cy="11.4" r="3.4" fill="#5f7a45"/><circle cx="85.5" cy="51.7" r="2.1" fill="#4e6a3a"/><circle cx="53.9" cy="45.5" r="3.0" fill="#4e6a3a"/><circle cx="107.7" cy="71.3" r="1.8" fill="#4e6a3a"/><circle cx="39.1" cy="67.5" r="1.6" fill="#4e6a3a"/><circle cx="220.2" cy="93.8" r="1.9" fill="#46603a"/><circle cx="235.2" cy="57.0" r="3.5" fill="#7a8a5a"/><circle cx="165.9" cy="77.6" r="2.6" fill="#2e4226"/><circle cx="75.7" cy="100.7" r="2.4" fill="#7a8a5a"/><circle cx="21.4" cy="19.5" r="2.1" fill="#4e6a3a"/><circle cx="238.0" cy="33.4" r="2.5" fill="#5f7a45"/><circle cx="82.1" cy="100.2" r="2.0" fill="#5f7a45"/><circle cx="235.5" cy="48.6" r="3.4" fill="#7a8a5a"/><circle cx="94.9" cy="53.7" r="2.0" fill="#2e4226"/><circle cx="8.6" cy="76.4" r="2.0" fill="#3a5230"/><circle cx="59.2" cy="14.9" r="1.7" fill="#3a5230"/><circle cx="136.0" cy="53.7" r="3.1" fill="#7a8a5a"/><circle cx="39.0" cy="40.6" r="2.9" fill="#2e4226"/><circle cx="154.2" cy="66.8" r="1.9" fill="#3a4a2a"/><circle cx="123.7" cy="26.1" r="2.3" fill="#3a5230"/><circle cx="230.8" cy="114.8" r="2.6" fill="#3a4a2a"/><circle cx="144.0" cy="42.3" r="1.8" fill="#7a8a5a"/><circle cx="30.8" cy="86.3" r="2.8" fill="#5f7a45"/><circle cx="132.9" cy="31.1" r="3.1" fill="#2e4226"/><circle cx="7.0" cy="82.6" r="1.5" fill="#4e6a3a"/><circle cx="95.5" cy="9.9" r="1.6" fill="#7a8a5a"/><circle cx="78.7" cy="76.2" r="1.5" fill="#6a7650"/><circle cx="197.3" cy="87.2" r="1.7" fill="#46603a"/><circle cx="21.5" cy="33.2" r="3.2" fill="#2e4226"/><circle cx="69.2" cy="46.4" r="3.4" fill="#3a5230"/><circle cx="229.5" cy="20.3" r="2.1" fill="#6a7650"/><circle cx="219.8" cy="2.9" r="2.9" fill="#3a4a2a"/><circle cx="60.9" cy="97.4" r="2.0" fill="#5f7a45"/><circle cx="44.5" cy="13.3" r="3.4" fill="#7a8a5a"/><circle cx="174.6" cy="4.7" r="1.3" fill="#3a5230"/><circle cx="105.5" cy="87.1" r="1.6" fill="#4e6a3a"/><circle cx="135.3" cy="72.4" r="3.5" fill="#7a8a5a"/><circle cx="139.7" cy="82.4" r="1.8" fill="#2e4226"/><circle cx="164.2" cy="66.2" r="3.4" fill="#5f7a45"/><circle cx="204.4" cy="89.3" r="1.9" fill="#4e6a3a"/><circle cx="214.4" cy="67.3" r="2.9" fill="#7a8a5a"/><circle cx="166.9" cy="4.3" r="2.0" fill="#6a7650"/><circle cx="183.6" cy="9.9" r="2.9" fill="#2e4226"/><circle cx="244.5" cy="70.8" r="1.7" fill="#5f7a45"/><circle cx="85.5" cy="109.2" r="2.3" fill="#6a7650"/><circle cx="169.4" cy="84.9" r="3.2" fill="#3a4a2a"/><circle cx="124.6" cy="77.8" r="1.7" fill="#3a5230"/><circle cx="119.9" cy="21.8" r="3.5" fill="#46603a"/><circle cx="42.8" cy="18.8" r="3.1" fill="#7a8a5a"/><circle cx="133.3" cy="28.7" r="1.3" fill="#6a7650"/><circle cx="85.1" cy="10.6" r="2.7" fill="#3a5230"/><circle cx="33.5" cy="81.3" r="2.8" fill="#7a8a5a"/><circle cx="172.9" cy="0.7" r="2.9" fill="#3a5230"/><circle cx="229.3" cy="40.4" r="1.9" fill="#3a5230"/><circle cx="144.0" cy="27.7" r="2.7" fill="#5f7a45"/><circle cx="134.3" cy="87.5" r="1.6" fill="#3a5230"/><circle cx="146.7" cy="53.0" r="3.0" fill="#7a8a5a"/><circle cx="28.0" cy="33.3" r="2.1" fill="#7a8a5a"/><circle cx="10.6" cy="103.0" r="1.9" fill="#5f7a45"/><circle cx="171.9" cy="51.5" r="1.5" fill="#6a7650"/><circle cx="109.0" cy="65.5" r="1.9" fill="#5f7a45"/><circle cx="11.2" cy="53.9" r="3.6" fill="#3a4a2a"/><circle cx="20.6" cy="82.5" r="3.6" fill="#46603a"/><circle cx="26.7" cy="56.2" r="2.2" fill="#7a8a5a"/><circle cx="192.0" cy="37.0" r="2.1" fill="#5f7a45"/><circle cx="157.9" cy="72.2" r="3.4" fill="#46603a"/><circle cx="160.0" cy="9.0" r="3.0" fill="#4e6a3a"/><circle cx="189.7" cy="96.6" r="1.9" fill="#3a5230"/><circle cx="235.7" cy="60.4" r="3.3" fill="#3a5230"/><circle cx="25.0" cy="82.7" r="1.9" fill="#6a7650"/><circle cx="92.9" cy="74.4" r="2.1" fill="#7a8a5a"/><circle cx="90.3" cy="63.4" r="2.1" fill="#46603a"/><circle cx="58.6" cy="4.7" r="2.6" fill="#2e4226"/><circle cx="221.8" cy="108.7" r="2.4" fill="#3a4a2a"/><circle cx="179.0" cy="114.5" r="2.6" fill="#5f7a45"/><circle cx="34.8" cy="26.2" r="1.5" fill="#2e4226"/><circle cx="22.0" cy="4.6" r="2.3" fill="#7a8a5a"/><circle cx="53.5" cy="42.8" r="1.3" fill="#2e4226"/><circle cx="35.1" cy="8.3" r="1.3" fill="#2e4226"/><circle cx="218.2" cy="7.2" r="1.2" fill="#3a5230"/><circle cx="221.5" cy="18.9" r="1.9" fill="#3a4a2a"/><circle cx="197.0" cy="77.7" r="2.6" fill="#3a4a2a"/><circle cx="20.8" cy="37.2" r="2.3" fill="#3a5230"/><circle cx="238.7" cy="110.6" r="2.7" fill="#4e6a3a"/><circle cx="177.1" cy="38.1" r="2.8" fill="#2e4226"/><circle cx="233.4" cy="55.3" r="2.8" fill="#46603a"/><circle cx="212.0" cy="61.0" r="2.7" fill="#7a8a5a"/><circle cx="54.5" cy="85.1" r="2.9" fill="#3a5230"/><circle cx="161.8" cy="42.8" r="2.6" fill="#2e4226"/><circle cx="88.2" cy="27.6" r="2.3" fill="#46603a"/><circle cx="28.0" cy="20.8" r="3.3" fill="#5f7a45"/><circle cx="54.2" cy="96.3" r="2.8" fill="#7a8a5a"/><circle cx="130.0" cy="28.9" r="2.4" fill="#3a4a2a"/><circle cx="55.5" cy="65.9" r="1.5" fill="#5f7a45"/><circle cx="208.6" cy="78.1" r="3.1" fill="#3a5230"/><circle cx="211.6" cy="63.3" r="2.9" fill="#5f7a45"/><circle cx="153.5" cy="110.4" r="2.4" fill="#3a4a2a"/><circle cx="203.4" cy="45.1" r="1.6" fill="#7a8a5a"/><circle cx="137.9" cy="89.1" r="1.5" fill="#4e6a3a"/><circle cx="99.1" cy="5.4" r="1.3" fill="#7a8a5a"/><circle cx="112.6" cy="13.9" r="1.5" fill="#5f7a45"/><circle cx="152.2" cy="100.3" r="2.6" fill="#6a7650"/><circle cx="41.2" cy="85.7" r="2.0" fill="#4e6a3a"/><circle cx="202.3" cy="14.1" r="2.1" fill="#6a7650"/><circle cx="176.8" cy="5.0" r="2.6" fill="#5f7a45"/><circle cx="87.2" cy="37.6" r="2.6" fill="#4e6a3a"/><circle cx="226.7" cy="77.7" r="1.8" fill="#7a8a5a"/><circle cx="170.0" cy="2.4" r="3.6" fill="#3a4a2a"/><circle cx="27.8" cy="2.4" r="1.5" fill="#46603a"/><circle cx="45.4" cy="63.7" r="1.9" fill="#2e4226"/><circle cx="204.9" cy="67.7" r="1.8" fill="#46603a"/><circle cx="232.4" cy="1.6" r="2.0" fill="#3a5230"/><circle cx="119.4" cy="55.7" r="1.3" fill="#4e6a3a"/><circle cx="18.3" cy="71.3" r="2.7" fill="#2e4226"/><circle cx="206.5" cy="111.3" r="2.9" fill="#3a4a2a"/><circle cx="96.4" cy="100.4" r="2.7" fill="#5f7a45"/><circle cx="88.4" cy="60.7" r="1.9" fill="#3a5230"/><circle cx="144.4" cy="5.0" r="1.6" fill="#6a7650"/><circle cx="178.2" cy="38.1" r="2.3" fill="#6a7650"/><circle cx="77.0" cy="38.6" r="2.4" fill="#7a8a5a"/><circle cx="5.0" cy="52.8" r="3.6" fill="#4e6a3a"/><circle cx="154.6" cy="83.6" r="1.5" fill="#2e4226"/><circle cx="67.0" cy="57.5" r="1.8" fill="#3a5230"/><circle cx="243.1" cy="3.9" r="2.5" fill="#5f7a45"/><circle cx="213.7" cy="89.0" r="2.7" fill="#5f7a45"/><circle cx="88.9" cy="32.4" r="3.1" fill="#3a5230"/><circle cx="166.9" cy="35.0" r="3.0" fill="#6a7650"/><circle cx="124.7" cy="73.0" r="2.0" fill="#2e4226"/><circle cx="81.9" cy="81.0" r="2.8" fill="#3a4a2a"/><circle cx="123.4" cy="102.8" r="3.1" fill="#6a7650"/><circle cx="36.9" cy="23.6" r="3.3" fill="#3a4a2a"/><circle cx="99.2" cy="45.5" r="3.1" fill="#3a5230"/><circle cx="143.8" cy="16.5" r="2.9" fill="#46603a"/><circle cx="178.0" cy="63.4" r="3.4" fill="#6a7650"/><circle cx="18.0" cy="21.9" r="3.4" fill="#3a5230"/><circle cx="74.5" cy="40.7" r="2.3" fill="#2e4226"/><circle cx="176.7" cy="106.0" r="3.2" fill="#6a7650"/><circle cx="220.3" cy="31.7" r="1.8" fill="#4e6a3a"/><circle cx="185.8" cy="72.0" r="1.8" fill="#4e6a3a"/><circle cx="53.5" cy="46.0" r="1.7" fill="#46603a"/><circle cx="211.7" cy="74.5" r="1.7" fill="#4e6a3a"/><circle cx="236.0" cy="69.1" r="1.4" fill="#6a7650"/><circle cx="176.2" cy="0.6" r="1.8" fill="#4e6a3a"/><circle cx="156.8" cy="106.1" r="1.7" fill="#6a7650"/><circle cx="212.6" cy="3.1" r="2.4" fill="#6a7650"/><circle cx="42.8" cy="99.3" r="3.1" fill="#5f7a45"/><circle cx="153.4" cy="38.5" r="2.4" fill="#2e4226"/><circle cx="63.0" cy="53.3" r="1.2" fill="#6a7650"/><circle cx="138.2" cy="113.6" r="1.3" fill="#6a7650"/><circle cx="38.4" cy="2.1" r="1.7" fill="#5f7a45"/><circle cx="87.7" cy="41.6" r="2.0" fill="#3a5230"/><circle cx="161.1" cy="69.2" r="2.0" fill="#46603a"/><circle cx="199.3" cy="54.9" r="1.3" fill="#46603a"/><circle cx="159.7" cy="63.2" r="2.9" fill="#46603a"/><circle cx="88.5" cy="60.9" r="1.9" fill="#46603a"/><circle cx="2.2" cy="54.7" r="2.8" fill="#6a7650"/><circle cx="36.9" cy="72.3" r="2.2" fill="#5f7a45"/><circle cx="229.6" cy="71.8" r="1.5" fill="#7a8a5a"/><circle cx="136.0" cy="20.9" r="3.5" fill="#6a7650"/><circle cx="180.7" cy="103.8" r="3.3" fill="#3a5230"/><circle cx="129.5" cy="40.3" r="2.9" fill="#3a4a2a"/><circle cx="240.7" cy="57.4" r="2.7" fill="#6a7650"/><circle cx="220.8" cy="44.7" r="1.7" fill="#4e6a3a"/><circle cx="26.4" cy="84.3" r="1.4" fill="#2e4226"/><circle cx="165.2" cy="40.3" r="1.7" fill="#2e4226"/><circle cx="100.4" cy="105.7" r="3.5" fill="#7a8a5a"/><circle cx="7.5" cy="2.4" r="2.9" fill="#7a8a5a"/><circle cx="56.7" cy="23.4" r="3.0" fill="#46603a"/><circle cx="73.1" cy="114.3" r="1.7" fill="#3a5230"/><circle cx="117.0" cy="107.4" r="3.0" fill="#3a5230"/><circle cx="201.6" cy="32.5" r="2.0" fill="#3a4a2a"/><circle cx="213.7" cy="28.7" r="2.0" fill="#3a4a2a"/><circle cx="52.0" cy="6.0" r="3.1" fill="#6a7650"/><circle cx="11.3" cy="89.0" r="2.3" fill="#2e4226"/><circle cx="211.7" cy="114.4" r="1.9" fill="#4e6a3a"/><circle cx="197.2" cy="17.5" r="3.4" fill="#3a5230"/><circle cx="223.3" cy="17.3" r="3.0" fill="#5f7a45"/><circle cx="184.1" cy="53.4" r="2.2" fill="#2e4226"/><circle cx="83.2" cy="105.6" r="2.9" fill="#6a7650"/><circle cx="240.0" cy="3.8" r="1.8" fill="#4e6a3a"/><circle cx="9.3" cy="58.0" r="1.8" fill="#2e4226"/><circle cx="171.1" cy="83.8" r="1.3" fill="#6a7650"/><circle cx="15.8" cy="12.7" r="3.5" fill="#3a5230"/><circle cx="128.7" cy="0.3" r="1.7" fill="#3a5230"/><circle cx="155.1" cy="62.7" r="3.6" fill="#6a7650"/><circle cx="205.7" cy="110.1" r="1.4" fill="#7a8a5a"/><circle cx="209.0" cy="111.8" r="1.7" fill="#5f7a45"/><circle cx="66.9" cy="20.4" r="1.8" fill="#5f7a45"/><circle cx="236.7" cy="22.6" r="1.3" fill="#6a7650"/><circle cx="65.5" cy="37.5" r="1.3" fill="#3a4a2a"/><circle cx="133.3" cy="63.1" r="2.9" fill="#46603a"/><circle cx="97.8" cy="36.6" r="2.2" fill="#3a5230"/><circle cx="94.8" cy="44.3" r="2.2" fill="#3a5230"/><circle cx="220.0" cy="73.0" r="1.8" fill="#46603a"/><circle cx="169.9" cy="83.9" r="3.6" fill="#7a8a5a"/><circle cx="162.5" cy="10.0" r="2.7" fill="#4e6a3a"/><circle cx="222.6" cy="5.7" r="2.9" fill="#6a7650"/><circle cx="167.8" cy="50.9" r="2.8" fill="#3a4a2a"/><circle cx="238.0" cy="0.1" r="3.0" fill="#3a4a2a"/><circle cx="125.0" cy="68.1" r="3.6" fill="#7a8a5a"/><circle cx="202.1" cy="91.0" r="3.3" fill="#6a7650"/><circle cx="174.5" cy="45.3" r="2.5" fill="#6a7650"/><circle cx="17.6" cy="91.7" r="2.8" fill="#46603a"/><circle cx="64.3" cy="96.7" r="3.3" fill="#6a7650"/><circle cx="127.9" cy="54.8" r="1.7" fill="#3a5230"/><circle cx="16.1" cy="87.1" r="2.1" fill="#7a8a5a"/><circle cx="129.2" cy="93.5" r="1.8" fill="#3a5230"/><circle cx="37.4" cy="76.1" r="1.6" fill="#4e6a3a"/><circle cx="78.9" cy="41.6" r="3.3" fill="#2e4226"/><circle cx="30.1" cy="17.7" r="1.8" fill="#5f7a45"/><circle cx="89.4" cy="76.2" r="2.5" fill="#46603a"/><circle cx="110.9" cy="10.1" r="2.1" fill="#3a4a2a"/><circle cx="170.3" cy="51.7" r="2.3" fill="#3a5230"/><circle cx="185.9" cy="17.2" r="2.8" fill="#6a7650"/><circle cx="119.8" cy="75.9" r="2.7" fill="#6a7650"/><circle cx="196.4" cy="29.1" r="2.5" fill="#4e6a3a"/><circle cx="139.8" cy="6.6" r="1.6" fill="#46603a"/><circle cx="224.6" cy="29.4" r="1.8" fill="#3a4a2a"/><circle cx="22.4" cy="73.2" r="3.3" fill="#7a8a5a"/><circle cx="31.4" cy="110.2" r="1.9" fill="#6a7650"/><circle cx="225.5" cy="82.5" r="2.1" fill="#4e6a3a"/><circle cx="174.6" cy="34.0" r="2.2" fill="#46603a"/><circle cx="86.3" cy="44.3" r="2.6" fill="#7a8a5a"/><circle cx="239.5" cy="97.9" r="2.6" fill="#5f7a45"/><circle cx="163.1" cy="37.9" r="1.4" fill="#3a4a2a"/><circle cx="93.0" cy="60.5" r="2.4" fill="#4e6a3a"/><circle cx="26.4" cy="64.8" r="3.4" fill="#2e4226"/><circle cx="101.6" cy="54.5" r="3.3" fill="#3a4a2a"/><circle cx="97.4" cy="15.6" r="3.0" fill="#4e6a3a"/><circle cx="164.2" cy="85.2" r="2.2" fill="#4e6a3a"/><circle cx="226.8" cy="33.8" r="2.0" fill="#2e4226"/><circle cx="188.6" cy="13.6" r="1.7" fill="#5f7a45"/><circle cx="139.9" cy="1.8" r="2.4" fill="#7a8a5a"/><circle cx="138.3" cy="6.3" r="2.8" fill="#6a7650"/><circle cx="118.3" cy="6.3" r="2.9" fill="#2e4226"/><circle cx="206.7" cy="16.1" r="2.2" fill="#4e6a3a"/><circle cx="213.6" cy="16.7" r="2.0" fill="#4e6a3a"/><circle cx="45.6" cy="62.0" r="2.4" fill="#5f7a45"/><circle cx="76.7" cy="29.3" r="3.3" fill="#2e4226"/><circle cx="125.2" cy="48.3" r="1.3" fill="#46603a"/><circle cx="60.9" cy="43.7" r="2.2" fill="#46603a"/><circle cx="74.7" cy="15.2" r="1.7" fill="#6a7650"/><circle cx="228.5" cy="75.5" r="2.9" fill="#3a5230"/><circle cx="89.6" cy="92.2" r="1.7" fill="#4e6a3a"/><circle cx="178.7" cy="1.0" r="1.4" fill="#6a7650"/><circle cx="8.7" cy="25.3" r="2.3" fill="#7a8a5a"/><circle cx="174.1" cy="92.3" r="2.6" fill="#3a4a2a"/><circle cx="99.5" cy="83.7" r="1.7" fill="#7a8a5a"/><circle cx="14.1" cy="49.9" r="2.7" fill="#4e6a3a"/><circle cx="33.6" cy="101.2" r="3.2" fill="#3a4a2a"/><circle cx="44.1" cy="106.1" r="2.5" fill="#3a5230"/><circle cx="122.1" cy="77.5" r="2.8" fill="#46603a"/><circle cx="196.5" cy="61.5" r="1.6" fill="#7a8a5a"/><circle cx="126.5" cy="53.6" r="1.7" fill="#5f7a45"/><circle cx="233.0" cy="47.7" r="2.8" fill="#46603a"/><circle cx="173.0" cy="50.9" r="2.2" fill="#4e6a3a"/><circle cx="226.3" cy="15.3" r="1.6" fill="#3a4a2a"/><circle cx="71.9" cy="26.8" r="2.6" fill="#6a7650"/><circle cx="173.2" cy="82.7" r="1.9" fill="#46603a"/><circle cx="79.5" cy="96.8" r="1.6" fill="#7a8a5a"/><circle cx="95.9" cy="3.8" r="2.1" fill="#46603a"/><circle cx="54.7" cy="62.8" r="1.4" fill="#3a4a2a"/><circle cx="36.5" cy="21.2" r="2.0" fill="#2e4226"/><circle cx="28.0" cy="95.3" r="1.5" fill="#7a8a5a"/><circle cx="244.1" cy="108.0" r="2.5" fill="#46603a"/><circle cx="120.0" cy="2.0" r="3.1" fill="#5f7a45"/><circle cx="49.1" cy="32.2" r="1.9" fill="#5f7a45"/><circle cx="49.3" cy="54.1" r="3.0" fill="#7a8a5a"/><circle cx="141.8" cy="34.5" r="2.6" fill="#5f7a45"/><circle cx="237.0" cy="39.6" r="3.5" fill="#46603a"/><circle cx="12.3" cy="38.3" r="2.3" fill="#7a8a5a"/><circle cx="80.7" cy="41.9" r="1.5" fill="#46603a"/><circle cx="198.2" cy="83.2" r="2.3" fill="#5f7a45"/><circle cx="193.1" cy="68.5" r="2.3" fill="#4e6a3a"/><circle cx="9.7" cy="66.6" r="2.2" fill="#3a5230"/><circle cx="101.8" cy="96.3" r="1.4" fill="#3a5230"/><circle cx="88.1" cy="76.2" r="1.4" fill="#4e6a3a"/><circle cx="206.4" cy="100.4" r="2.4" fill="#3a5230"/><circle cx="64.0" cy="12.3" r="1.8" fill="#3a5230"/><circle cx="121.6" cy="61.6" r="1.5" fill="#3a4a2a"/><circle cx="60.3" cy="65.4" r="1.3" fill="#46603a"/><circle cx="89.9" cy="22.7" r="2.2" fill="#7a8a5a"/><circle cx="242.1" cy="104.5" r="2.9" fill="#7a8a5a"/><circle cx="218.2" cy="1.7" r="3.5" fill="#3a4a2a"/><circle cx="194.0" cy="80.7" r="1.7" fill="#7a8a5a"/><circle cx="21.3" cy="19.7" r="3.2" fill="#4e6a3a"/><circle cx="103.9" cy="71.8" r="1.5" fill="#5f7a45"/><circle cx="20.7" cy="66.5" r="1.8" fill="#4e6a3a"/><circle cx="201.2" cy="8.4" r="2.0" fill="#5f7a45"/><circle cx="10.1" cy="71.1" r="2.9" fill="#46603a"/><circle cx="83.8" cy="93.2" r="2.3" fill="#3a5230"/><circle cx="2.6" cy="108.1" r="2.2" fill="#2e4226"/><circle cx="7.9" cy="90.7" r="1.6" fill="#3a5230"/><circle cx="37.1" cy="39.6" r="1.5" fill="#7a8a5a"/><circle cx="226.6" cy="78.9" r="2.9" fill="#5f7a45"/><circle cx="244.3" cy="91.0" r="2.4" fill="#3a4a2a"/><circle cx="128.8" cy="38.0" r="1.4" fill="#5f7a45"/><circle cx="48.8" cy="71.9" r="3.2" fill="#2e4226"/><circle cx="22.6" cy="82.5" r="2.0" fill="#3a5230"/><circle cx="196.8" cy="56.6" r="3.1" fill="#3a4a2a"/><circle cx="33.1" cy="95.3" r="3.4" fill="#4e6a3a"/><circle cx="182.5" cy="95.7" r="3.1" fill="#3a5230"/><circle cx="106.7" cy="94.9" r="3.1" fill="#46603a"/><circle cx="183.3" cy="68.3" r="2.8" fill="#5f7a45"/><circle cx="16.7" cy="90.1" r="3.1" fill="#7a8a5a"/><circle cx="58.8" cy="67.6" r="2.5" fill="#3a4a2a"/><circle cx="140.9" cy="107.3" r="3.3" fill="#4e6a3a"/><circle cx="96.0" cy="90.1" r="3.1" fill="#6a7650"/><circle cx="202.3" cy="46.7" r="1.4" fill="#6a7650"/><circle cx="162.5" cy="104.0" r="2.2" fill="#46603a"/><circle cx="1.1" cy="56.2" r="1.2" fill="#5f7a45"/><circle cx="215.2" cy="54.7" r="2.2" fill="#46603a"/><circle cx="112.1" cy="38.6" r="1.7" fill="#6a7650"/><circle cx="96.5" cy="53.6" r="1.3" fill="#6a7650"/><circle cx="21.6" cy="31.2" r="2.9" fill="#3a4a2a"/><circle cx="99.8" cy="61.9" r="1.8" fill="#7a8a5a"/><circle cx="167.3" cy="4.8" r="3.2" fill="#3a5230"/><circle cx="95.5" cy="38.3" r="1.6" fill="#3a5230"/><circle cx="54.9" cy="102.3" r="2.7" fill="#2e4226"/><circle cx="75.6" cy="36.6" r="3.3" fill="#7a8a5a"/><circle cx="209.9" cy="111.3" r="2.1" fill="#4e6a3a"/><circle cx="0.1" cy="20.2" r="3.5" fill="#3a4a2a"/><circle cx="138.5" cy="75.6" r="3.0" fill="#5f7a45"/><circle cx="241.2" cy="84.5" r="3.0" fill="#2e4226"/><circle cx="33.1" cy="86.6" r="1.8" fill="#2e4226"/><circle cx="18.6" cy="71.8" r="2.3" fill="#46603a"/><circle cx="88.6" cy="76.0" r="2.7" fill="#2e4226"/><circle cx="229.8" cy="93.0" r="1.3" fill="#3a4a2a"/><circle cx="120.9" cy="79.5" r="1.2" fill="#5f7a45"/><circle cx="136.6" cy="51.5" r="3.0" fill="#3a5230"/><circle cx="178.6" cy="86.2" r="1.3" fill="#6a7650"/><circle cx="118.2" cy="0.8" r="3.4" fill="#46603a"/><circle cx="35.4" cy="67.6" r="2.6" fill="#4e6a3a"/><circle cx="244.4" cy="20.0" r="2.6" fill="#46603a"/><circle cx="153.7" cy="27.8" r="3.1" fill="#4e6a3a"/><circle cx="103.1" cy="112.5" r="2.8" fill="#2e4226"/><circle cx="120.8" cy="112.1" r="2.1" fill="#46603a"/><circle cx="79.4" cy="95.9" r="2.4" fill="#4e6a3a"/><circle cx="194.4" cy="39.9" r="1.5" fill="#4e6a3a"/><circle cx="39.7" cy="84.9" r="1.6" fill="#46603a"/><circle cx="222.4" cy="67.5" r="3.5" fill="#6a7650"/><circle cx="235.7" cy="21.5" r="1.9" fill="#3a4a2a"/><circle cx="48.4" cy="36.9" r="2.3" fill="#5f7a45"/><circle cx="167.0" cy="41.6" r="2.0" fill="#3a4a2a"/><circle cx="65.4" cy="23.5" r="3.4" fill="#3a4a2a"/><circle cx="122.8" cy="46.9" r="1.6" fill="#6a7650"/><circle cx="10.8" cy="32.1" r="2.5" fill="#2e4226"/><circle cx="184.4" cy="31.7" r="2.1" fill="#2e4226"/><circle cx="129.7" cy="33.2" r="2.7" fill="#46603a"/><circle cx="110.2" cy="1.4" r="2.5" fill="#46603a"/><circle cx="86.6" cy="108.1" r="1.8" fill="#7a8a5a"/><circle cx="217.0" cy="100.7" r="1.4" fill="#2e4226"/><circle cx="204.4" cy="81.9" r="3.4" fill="#3a5230"/><circle cx="158.0" cy="111.2" r="2.7" fill="#5f7a45"/><circle cx="189.8" cy="45.4" r="3.5" fill="#6a7650"/><circle cx="98.0" cy="57.5" r="2.0" fill="#3a5230"/><circle cx="174.5" cy="16.5" r="3.0" fill="#2e4226"/><circle cx="164.0" cy="103.7" r="1.5" fill="#6a7650"/><circle cx="167.1" cy="106.3" r="1.4" fill="#4e6a3a"/><circle cx="208.7" cy="76.8" r="2.6" fill="#2e4226"/><circle cx="52.4" cy="83.8" r="3.1" fill="#3a5230"/><circle cx="37.0" cy="77.2" r="3.0" fill="#5f7a45"/><circle cx="220.1" cy="103.4" r="3.0" fill="#2e4226"/><circle cx="215.3" cy="15.1" r="2.9" fill="#2e4226"/><circle cx="150.0" cy="31.6" r="1.4" fill="#46603a"/><circle cx="148.9" cy="103.9" r="1.9" fill="#6a7650"/><circle cx="165.6" cy="112.1" r="3.1" fill="#6a7650"/><circle cx="5.7" cy="59.5" r="1.5" fill="#6a7650"/><circle cx="53.5" cy="52.6" r="3.0" fill="#3a4a2a"/><circle cx="67.4" cy="6.8" r="2.3" fill="#4e6a3a"/><circle cx="9.7" cy="95.2" r="1.5" fill="#7a8a5a"/><circle cx="72.1" cy="107.7" r="3.5" fill="#7a8a5a"/><circle cx="53.4" cy="91.2" r="1.7" fill="#4e6a3a"/><circle cx="54.6" cy="19.9" r="3.1" fill="#46603a"/><circle cx="103.9" cy="7.3" r="2.7" fill="#5f7a45"/><circle cx="143.3" cy="46.0" r="2.4" fill="#2e4226"/><circle cx="55.4" cy="99.8" r="3.6" fill="#6a7650"/><circle cx="235.5" cy="37.9" r="3.6" fill="#5f7a45"/><circle cx="157.2" cy="66.2" r="2.2" fill="#3a4a2a"/><circle cx="46.7" cy="70.8" r="1.5" fill="#3a5230"/><circle cx="69.2" cy="22.3" r="3.0" fill="#4e6a3a"/><circle cx="107.5" cy="22.7" r="2.9" fill="#7a8a5a"/><circle cx="189.5" cy="23.1" r="3.0" fill="#46603a"/><circle cx="183.2" cy="109.1" r="3.4" fill="#4e6a3a"/><circle cx="15.4" cy="23.6" r="1.2" fill="#46603a"/><circle cx="136.6" cy="72.2" r="2.6" fill="#6a7650"/><circle cx="242.9" cy="35.2" r="1.3" fill="#3a5230"/><circle cx="169.4" cy="48.4" r="1.3" fill="#3a4a2a"/><circle cx="189.3" cy="39.4" r="3.3" fill="#6a7650"/><circle cx="190.5" cy="54.2" r="3.6" fill="#6a7650"/><circle cx="194.7" cy="54.8" r="3.2" fill="#3a5230"/><circle cx="208.2" cy="60.8" r="1.8" fill="#2e4226"/><circle cx="51.3" cy="29.0" r="1.3" fill="#7a8a5a"/><circle cx="174.0" cy="108.7" r="3.6" fill="#2e4226"/><circle cx="189.7" cy="83.5" r="1.6" fill="#2e4226"/><circle cx="32.8" cy="1.5" r="1.7" fill="#2e4226"/><circle cx="6.8" cy="93.5" r="3.5" fill="#5f7a45"/><circle cx="113.6" cy="5.0" r="3.3" fill="#5f7a45"/><circle cx="210.3" cy="38.9" r="2.5" fill="#3a4a2a"/><circle cx="118.7" cy="73.5" r="1.7" fill="#7a8a5a"/><circle cx="50.1" cy="40.8" r="3.3" fill="#5f7a45"/><circle cx="144.8" cy="14.5" r="1.7" fill="#3a4a2a"/><circle cx="140.2" cy="105.9" r="2.8" fill="#3a4a2a"/><circle cx="186.6" cy="65.6" r="2.9" fill="#3a4a2a"/><circle cx="41.4" cy="75.0" r="3.3" fill="#7a8a5a"/><circle cx="175.6" cy="54.0" r="3.3" fill="#3a5230"/><circle cx="29.0" cy="57.3" r="2.1" fill="#7a8a5a"/><circle cx="196.0" cy="102.3" r="1.2" fill="#7a8a5a"/><circle cx="155.3" cy="85.3" r="1.3" fill="#5f7a45"/><circle cx="222.5" cy="23.0" r="1.2" fill="#3a4a2a"/><circle cx="11.9" cy="27.7" r="3.4" fill="#7a8a5a"/><circle cx="190.0" cy="5.1" r="2.5" fill="#2e4226"/><circle cx="64.4" cy="17.6" r="1.2" fill="#5f7a45"/><circle cx="186.1" cy="101.5" r="1.4" fill="#3a5230"/><circle cx="197.7" cy="18.7" r="2.4" fill="#5f7a45"/><circle cx="124.9" cy="110.0" r="2.1" fill="#4e6a3a"/><circle cx="17.7" cy="3.4" r="2.8" fill="#5f7a45"/><circle cx="123.1" cy="71.3" r="2.6" fill="#5f7a45"/><circle cx="173.0" cy="76.1" r="2.7" fill="#3a4a2a"/><circle cx="97.3" cy="0.9" r="3.0" fill="#4e6a3a"/><circle cx="45.9" cy="58.3" r="3.2" fill="#7a8a5a"/><circle cx="29.9" cy="74.8" r="1.7" fill="#2e4226"/><circle cx="240.9" cy="70.5" r="1.4" fill="#6a7650"/><circle cx="166.0" cy="10.1" r="1.8" fill="#5f7a45"/><circle cx="22.0" cy="31.5" r="1.9" fill="#46603a"/><circle cx="36.2" cy="69.7" r="3.5" fill="#7a8a5a"/><circle cx="1.7" cy="8.6" r="1.5" fill="#7a8a5a"/><circle cx="127.4" cy="52.4" r="2.2" fill="#7a8a5a"/><circle cx="224.5" cy="84.3" r="3.1" fill="#4e6a3a"/><circle cx="205.1" cy="82.4" r="1.3" fill="#3a5230"/><circle cx="208.2" cy="49.5" r="3.3" fill="#3a5230"/><circle cx="151.6" cy="33.7" r="1.8" fill="#3a5230"/><circle cx="61.9" cy="34.6" r="2.0" fill="#6a7650"/><circle cx="93.7" cy="18.6" r="1.6" fill="#3a4a2a"/><circle cx="186.8" cy="96.2" r="3.6" fill="#6a7650"/><circle cx="67.2" cy="28.7" r="2.2" fill="#4e6a3a"/><circle cx="83.5" cy="62.6" r="2.1" fill="#6a7650"/><circle cx="0.4" cy="88.7" r="1.8" fill="#6a7650"/><circle cx="194.7" cy="61.2" r="1.5" fill="#6a7650"/><circle cx="104.1" cy="38.7" r="1.4" fill="#5f7a45"/><circle cx="236.6" cy="18.5" r="2.5" fill="#7a8a5a"/><circle cx="229.8" cy="46.9" r="3.4" fill="#5f7a45"/><circle cx="158.7" cy="25.1" r="3.0" fill="#4e6a3a"/><circle cx="175.0" cy="49.6" r="1.5" fill="#3a5230"/><circle cx="149.6" cy="70.6" r="1.6" fill="#46603a"/><circle cx="184.5" cy="28.6" r="1.8" fill="#4e6a3a"/><circle cx="22.5" cy="99.6" r="2.7" fill="#3a5230"/><circle cx="160.7" cy="68.8" r="2.9" fill="#46603a"/><circle cx="19.1" cy="83.9" r="2.5" fill="#5f7a45"/><circle cx="88.6" cy="16.4" r="1.5" fill="#3a4a2a"/><circle cx="158.9" cy="58.7" r="3.3" fill="#3a4a2a"/><circle cx="43.6" cy="11.5" r="1.9" fill="#2e4226"/><circle cx="170.7" cy="19.9" r="3.6" fill="#5f7a45"/><circle cx="211.0" cy="53.0" r="2.0" fill="#7a8a5a"/><circle cx="7.5" cy="95.3" r="1.7" fill="#7a8a5a"/><circle cx="196.7" cy="77.1" r="1.9" fill="#4e6a3a"/><circle cx="207.2" cy="8.4" r="1.4" fill="#46603a"/><circle cx="162.0" cy="20.8" r="1.5" fill="#5f7a45"/><circle cx="205.0" cy="6.6" r="1.8" fill="#5f7a45"/><circle cx="139.6" cy="25.7" r="1.4" fill="#4e6a3a"/><circle cx="65.7" cy="107.0" r="3.4" fill="#6a7650"/><circle cx="89.1" cy="83.1" r="1.5" fill="#46603a"/><circle cx="90.8" cy="19.1" r="2.8" fill="#7a8a5a"/><circle cx="222.8" cy="19.1" r="3.0" fill="#4e6a3a"/><circle cx="54.9" cy="22.3" r="1.7" fill="#2e4226"/><circle cx="209.0" cy="27.7" r="3.3" fill="#46603a"/><circle cx="213.1" cy="5.8" r="2.8" fill="#6a7650"/><circle cx="57.5" cy="3.4" r="2.3" fill="#5f7a45"/><circle cx="26.9" cy="63.9" r="2.4" fill="#2e4226"/><circle cx="28.9" cy="55.1" r="1.6" fill="#7a8a5a"/><circle cx="104.3" cy="7.0" r="1.7" fill="#46603a"/><circle cx="88.5" cy="54.0" r="3.4" fill="#4e6a3a"/><circle cx="17.5" cy="25.6" r="3.0" fill="#2e4226"/><circle cx="27.0" cy="108.5" r="2.5" fill="#7a8a5a"/><circle cx="127.8" cy="58.7" r="2.0" fill="#5f7a45"/><circle cx="20.4" cy="30.5" r="3.4" fill="#3a4a2a"/><circle cx="192.3" cy="15.1" r="3.1" fill="#6a7650"/><circle cx="24.0" cy="32.3" r="3.1" fill="#5f7a45"/><circle cx="29.3" cy="113.2" r="2.4" fill="#3a5230"/><circle cx="124.8" cy="72.2" r="3.1" fill="#4e6a3a"/><circle cx="157.7" cy="79.0" r="1.3" fill="#7a8a5a"/><circle cx="189.3" cy="76.4" r="1.5" fill="#6a7650"/><circle cx="35.5" cy="92.4" r="3.5" fill="#4e6a3a"/><circle cx="210.0" cy="42.3" r="3.4" fill="#3a5230"/><circle cx="171.4" cy="1.8" r="2.3" fill="#5f7a45"/><circle cx="110.1" cy="97.8" r="1.9" fill="#3a5230"/><circle cx="205.6" cy="35.0" r="2.0" fill="#7a8a5a"/><circle cx="230.2" cy="46.2" r="2.8" fill="#4e6a3a"/><circle cx="88.2" cy="55.7" r="1.4" fill="#6a7650"/><circle cx="125.4" cy="109.1" r="2.4" fill="#7a8a5a"/><circle cx="152.2" cy="24.9" r="3.2" fill="#7a8a5a"/><circle cx="75.9" cy="90.2" r="1.9" fill="#6a7650"/><circle cx="7.8" cy="20.4" r="2.2" fill="#4e6a3a"/><circle cx="139.3" cy="88.6" r="1.8" fill="#4e6a3a"/><circle cx="37.9" cy="93.3" r="2.7" fill="#3a4a2a"/><circle cx="137.7" cy="81.8" r="1.5" fill="#7a8a5a"/><circle cx="137.7" cy="31.5" r="2.2" fill="#3a5230"/><circle cx="244.6" cy="15.6" r="2.0" fill="#4e6a3a"/><circle cx="41.1" cy="48.6" r="1.4" fill="#3a4a2a"/><circle cx="193.6" cy="29.1" r="2.6" fill="#7a8a5a"/><circle cx="210.8" cy="110.0" r="1.8" fill="#2e4226"/><circle cx="23.2" cy="50.1" r="3.2" fill="#4e6a3a"/><circle cx="221.5" cy="8.1" r="3.0" fill="#3a5230"/><circle cx="213.3" cy="48.3" r="2.5" fill="#46603a"/><circle cx="197.7" cy="75.1" r="2.4" fill="#5f7a45"/><circle cx="109.3" cy="57.5" r="2.5" fill="#6a7650"/><circle cx="220.2" cy="110.7" r="1.7" fill="#5f7a45"/><circle cx="145.1" cy="29.1" r="2.1" fill="#46603a"/><circle cx="157.7" cy="47.4" r="3.5" fill="#46603a"/><circle cx="166.0" cy="8.4" r="3.0" fill="#3a4a2a"/><circle cx="52.0" cy="37.7" r="3.4" fill="#3a4a2a"/><circle cx="116.5" cy="78.0" r="2.9" fill="#3a5230"/><circle cx="114.0" cy="37.3" r="3.5" fill="#2e4226"/><circle cx="21.8" cy="111.7" r="2.5" fill="#2e4226"/><circle cx="235.6" cy="103.5" r="1.8" fill="#6a7650"/><circle cx="93.1" cy="56.8" r="2.1" fill="#7a8a5a"/><circle cx="156.8" cy="101.1" r="1.5" fill="#3a5230"/><circle cx="216.7" cy="70.8" r="2.8" fill="#3a4a2a"/><circle cx="142.7" cy="108.4" r="2.6" fill="#6a7650"/><circle cx="84.6" cy="87.2" r="2.0" fill="#3a4a2a"/><circle cx="169.8" cy="77.8" r="3.1" fill="#2e4226"/><circle cx="90.6" cy="110.7" r="3.0" fill="#7a8a5a"/><circle cx="155.5" cy="81.1" r="3.5" fill="#7a8a5a"/><circle cx="90.5" cy="97.8" r="2.8" fill="#3a5230"/><circle cx="201.3" cy="69.1" r="3.2" fill="#4e6a3a"/><circle cx="48.6" cy="1.7" r="2.5" fill="#46603a"/><circle cx="7.1" cy="91.8" r="3.2" fill="#5f7a45"/><circle cx="170.5" cy="0.5" r="1.8" fill="#46603a"/><circle cx="220.7" cy="90.3" r="1.8" fill="#4e6a3a"/><circle cx="28.0" cy="107.5" r="3.5" fill="#3a5230"/><circle cx="115.1" cy="8.4" r="2.0" fill="#46603a"/><circle cx="102.3" cy="55.1" r="1.8" fill="#4e6a3a"/><circle cx="227.2" cy="30.4" r="1.8" fill="#5f7a45"/><circle cx="152.9" cy="80.1" r="1.8" fill="#6a7650"/><circle cx="83.7" cy="56.6" r="1.7" fill="#4e6a3a"/><circle cx="184.1" cy="96.5" r="2.2" fill="#46603a"/><circle cx="175.7" cy="26.4" r="3.1" fill="#3a4a2a"/><circle cx="23.1" cy="67.4" r="1.7" fill="#3a4a2a"/></svg><div class="a" style="left:1650px;top:104px;width:245px;height:115px;overflow:hidden"><svg class="a" style="left:116.5px;top:-7.5px" width="19.0" height="19.0"><circle cx="9.5" cy="9.5" r="8.5" fill="#4a8ac6" stroke="#1c3550" stroke-width="1.2"/></svg><svg class="a" style="left:152.5px;top:-1.5px" width="19.0" height="19.0"><circle cx="9.5" cy="9.5" r="8.5" fill="#4a8ac6" stroke="#1c3550" stroke-width="1.2"/></svg><svg class="a" style="left:152.5px;top:23.5px" width="19.0" height="19.0"><circle cx="9.5" cy="9.5" r="8.5" fill="#4a8ac6" stroke="#1c3550" stroke-width="1.2"/></svg><svg class="a" style="left:110.5px;top:35.5px" width="19.0" height="19.0"><circle cx="9.5" cy="9.5" r="8.5" fill="#4a8ac6" stroke="#1c3550" stroke-width="1.2"/></svg><svg class="a" style="left:110.5px;top:57.5px" width="19.0" height="19.0"><circle cx="9.5" cy="9.5" r="8.5" fill="#4a8ac6" stroke="#1c3550" stroke-width="1.2"/></svg><svg class="a" style="left:148.5px;top:61.5px" width="19.0" height="19.0"><circle cx="9.5" cy="9.5" r="8.5" fill="#4a8ac6" stroke="#1c3550" stroke-width="1.2"/></svg><svg class="a" style="left:152.5px;top:85.5px" width="19.0" height="19.0"><circle cx="9.5" cy="9.5" r="8.5" fill="#4a8ac6" stroke="#1c3550" stroke-width="1.2"/></svg><svg class="a" style="left:214.5px;top:76.5px" width="19.0" height="19.0"><circle cx="9.5" cy="9.5" r="8.5" fill="#4a8ac6" stroke="#1c3550" stroke-width="1.2"/></svg></div><div class="a" style="left:1855px;top:115px;width:28px;height:28px;background:#fff;border-radius:2px"></div><div class="a" style="left:1855px;top:155px;width:28px;height:28px;background:#fff;border-radius:2px"></div><div class="a" style="left:1855px;top:195px;width:28px;height:24px;background:#fff;border-radius:2px"></div><svg class="a" style="left:1859px;top:119px" width="20" height="20"><path d="M10 2l8 4-8 4-8-4z" fill="#111"/><path d="M2 10l8 4 8-4M2 14l8 4 8-4" stroke="#111" stroke-width="1.8" fill="none"/></svg><svg class="a" style="left:1861px;top:161px" width="16" height="16"><rect x="1" y="1" width="5.5" height="5.5" fill="none" stroke="#111" stroke-width="1.6"/><rect x="9.5" y="1" width="5.5" height="5.5" fill="none" stroke="#111" stroke-width="1.6"/><rect x="1" y="9.5" width="5.5" height="5.5" fill="none" stroke="#111" stroke-width="1.6"/><rect x="9.5" y="9.5" width="5.5" height="5.5" fill="none" stroke="#111" stroke-width="1.6"/></svg><svg class="a" style="left:1859px;top:200px" width="20" height="20"><circle cx="10" cy="10" r="9" fill="#111"/><path d="M10 5v10M5 10h10" stroke="#fff" stroke-width="2.4"/></svg><svg class="a" style="left:248px;top:945px" width="792" height="49"><rect width="792" height="49" fill="#a6a296"/><ellipse cx="680" cy="25" rx="180" ry="45" fill="#8e8d60" opacity="1"/><ellipse cx="520" cy="30" rx="70" ry="40" fill="#8f9070" opacity="0.7"/><ellipse cx="780" cy="45" rx="25" ry="18" fill="#d8c040" opacity="0.9"/><ellipse cx="300" cy="30" rx="60" ry="30" fill="#9c9a84" opacity="0.6"/><path d="M0 24C60 26 150 32 260 24S420 22 470 30" stroke="#b06850" stroke-width="2.5" fill="none" opacity=".55"/><path d="M0 36C80 40 170 42 260 36S430 34 470 42" stroke="#b06850" stroke-width="2.5" fill="none" opacity=".45"/><path d="M420 12L470 49" stroke="#c07868" stroke-width="8" opacity=".45"/><path d="M560 49L585 0" stroke="#6a5a40" stroke-width="1.6" opacity=".45"/><path d="M592 49L617 0" stroke="#6a5a40" stroke-width="1.6" opacity=".45"/><path d="M624 49L649 0" stroke="#6a5a40" stroke-width="1.6" opacity=".45"/><path d="M656 49L681 0" stroke="#6a5a40" stroke-width="1.6" opacity=".45"/><path d="M688 49L713 0" stroke="#6a5a40" stroke-width="1.6" opacity=".45"/><path d="M720 49L745 0" stroke="#6a5a40" stroke-width="1.6" opacity=".45"/><path d="M752 49L777 0" stroke="#6a5a40" stroke-width="1.6" opacity=".45"/><path d="M784 49L809 0" stroke="#6a5a40" stroke-width="1.6" opacity=".45"/><path d="M816 49L841 0" stroke="#6a5a40" stroke-width="1.6" opacity=".45"/><path d="M848 49L873 0" stroke="#6a5a40" stroke-width="1.6" opacity=".45"/><path d="M880 49L905 0" stroke="#6a5a40" stroke-width="1.6" opacity=".45"/><path d="M912 49L937 0" stroke="#6a5a40" stroke-width="1.6" opacity=".45"/><circle cx="368.8" cy="24.9" r="2.2" fill="#6a7a50"/><circle cx="376.8" cy="30.1" r="2.9" fill="#3b5a2c"/><circle cx="11.9" cy="25.9" r="2.3" fill="#3b5a2c"/><circle cx="233.0" cy="0.2" r="3.4" fill="#4d6a35"/><circle cx="317.1" cy="41.5" r="4.1" fill="#2f4a25"/><circle cx="169.1" cy="45.4" r="2.7" fill="#4d6a35"/><circle cx="332.5" cy="27.7" r="3.4" fill="#24381d"/><circle cx="151.0" cy="35.9" r="3.3" fill="#2f4a25"/><circle cx="312.7" cy="48.5" r="3.9" fill="#6a7a50"/><circle cx="240.9" cy="43.4" r="2.7" fill="#6a7a50"/><circle cx="260.5" cy="14.5" r="2.0" fill="#6a7a50"/><circle cx="307.5" cy="23.6" r="1.9" fill="#2f4a25"/><circle cx="30.6" cy="47.2" r="3.5" fill="#24381d"/><circle cx="333.3" cy="44.3" r="3.0" fill="#2f4a25"/><circle cx="724.6" cy="36.7" r="2.8" fill="#3b5a2c"/><circle cx="453.2" cy="6.4" r="3.9" fill="#24381d"/><circle cx="111.2" cy="1.7" r="4.0" fill="#24381d"/><circle cx="381.9" cy="35.8" r="4.2" fill="#2f4a25"/><circle cx="358.8" cy="18.0" r="4.0" fill="#3b5a2c"/><circle cx="453.7" cy="30.6" r="3.2" fill="#6a7a50"/><circle cx="57.2" cy="4.4" r="2.4" fill="#4d6a35"/><circle cx="66.4" cy="36.8" r="3.2" fill="#4d6a35"/><circle cx="17.7" cy="46.9" r="3.7" fill="#4d6a35"/><circle cx="777.8" cy="22.2" r="1.9" fill="#6a7a50"/><circle cx="244.8" cy="38.8" r="2.1" fill="#4d6a35"/><circle cx="506.8" cy="18.1" r="2.3" fill="#4d6a35"/><circle cx="423.6" cy="1.8" r="3.7" fill="#6a7a50"/><circle cx="425.3" cy="38.7" r="4.0" fill="#2f4a25"/><circle cx="276.0" cy="4.1" r="3.1" fill="#24381d"/><circle cx="50.7" cy="39.2" r="2.6" fill="#3b5a2c"/><circle cx="410.4" cy="33.2" r="3.9" fill="#6a7a50"/><circle cx="443.5" cy="15.3" r="3.8" fill="#6a7a50"/><circle cx="415.2" cy="28.1" r="3.1" fill="#6a7a50"/><circle cx="783.6" cy="6.0" r="2.2" fill="#6a7a50"/><circle cx="320.1" cy="12.1" r="2.6" fill="#4d6a35"/><circle cx="415.8" cy="5.3" r="1.9" fill="#24381d"/><circle cx="102.5" cy="38.2" r="2.3" fill="#3b5a2c"/><circle cx="422.9" cy="10.7" r="3.1" fill="#6a7a50"/><circle cx="249.5" cy="45.2" r="4.2" fill="#2f4a25"/><circle cx="333.9" cy="38.7" r="2.8" fill="#2f4a25"/><circle cx="91.0" cy="8.5" r="2.5" fill="#2f4a25"/><circle cx="459.2" cy="6.6" r="2.0" fill="#2f4a25"/><circle cx="340.6" cy="29.4" r="3.5" fill="#3b5a2c"/><circle cx="321.0" cy="9.6" r="3.0" fill="#2f4a25"/><circle cx="451.2" cy="9.4" r="2.6" fill="#24381d"/><circle cx="126.7" cy="45.8" r="2.6" fill="#6a7a50"/><circle cx="321.4" cy="35.4" r="2.6" fill="#4d6a35"/><circle cx="321.7" cy="8.9" r="3.0" fill="#4d6a35"/><circle cx="449.8" cy="48.8" r="3.7" fill="#2f4a25"/><circle cx="306.0" cy="46.0" r="4.1" fill="#4d6a35"/><circle cx="429.2" cy="29.2" r="3.0" fill="#24381d"/><circle cx="417.2" cy="29.3" r="2.5" fill="#24381d"/><circle cx="234.5" cy="0.7" r="1.9" fill="#3b5a2c"/><circle cx="323.8" cy="33.5" r="2.6" fill="#4d6a35"/><circle cx="378.3" cy="47.7" r="3.1" fill="#4d6a35"/><circle cx="114.3" cy="47.0" r="3.5" fill="#2f4a25"/><circle cx="41.2" cy="25.9" r="2.9" fill="#4d6a35"/><circle cx="360.8" cy="12.8" r="2.8" fill="#6a7a50"/><circle cx="21.3" cy="1.9" r="2.5" fill="#2f4a25"/><circle cx="267.9" cy="24.2" r="3.9" fill="#2f4a25"/><circle cx="309.0" cy="7.4" r="3.8" fill="#6a7a50"/><circle cx="76.8" cy="42.9" r="2.0" fill="#6a7a50"/><circle cx="449.8" cy="39.9" r="3.8" fill="#2f4a25"/><circle cx="283.4" cy="35.6" r="2.1" fill="#4d6a35"/><circle cx="286.5" cy="17.9" r="2.7" fill="#4d6a35"/><circle cx="309.1" cy="7.6" r="2.2" fill="#2f4a25"/><circle cx="449.4" cy="47.4" r="3.7" fill="#2f4a25"/><circle cx="264.9" cy="13.4" r="2.6" fill="#2f4a25"/><circle cx="325.2" cy="40.5" r="3.8" fill="#4d6a35"/><circle cx="297.4" cy="8.2" r="2.8" fill="#24381d"/><circle cx="356.4" cy="12.1" r="3.9" fill="#4d6a35"/><circle cx="119.3" cy="37.7" r="3.8" fill="#3b5a2c"/><circle cx="371.2" cy="46.8" r="3.9" fill="#24381d"/><circle cx="15.1" cy="9.2" r="3.4" fill="#4d6a35"/><circle cx="370.0" cy="35.0" r="3.4" fill="#2f4a25"/><circle cx="597.9" cy="27.2" r="2.3" fill="#4d6a35"/><circle cx="445.7" cy="35.5" r="3.8" fill="#2f4a25"/><circle cx="80.7" cy="30.5" r="3.3" fill="#3b5a2c"/><circle cx="326.4" cy="0.8" r="3.5" fill="#3b5a2c"/><circle cx="522.9" cy="29.8" r="2.6" fill="#24381d"/><circle cx="426.8" cy="14.6" r="3.3" fill="#6a7a50"/><circle cx="156.7" cy="4.1" r="3.2" fill="#24381d"/><circle cx="444.1" cy="27.5" r="4.0" fill="#24381d"/><circle cx="228.6" cy="44.0" r="3.2" fill="#3b5a2c"/><circle cx="147.0" cy="26.8" r="1.9" fill="#3b5a2c"/><circle cx="26.2" cy="25.9" r="2.8" fill="#24381d"/><circle cx="411.7" cy="12.9" r="2.6" fill="#2f4a25"/><circle cx="394.1" cy="5.0" r="4.0" fill="#6a7a50"/><circle cx="323.9" cy="21.3" r="4.0" fill="#6a7a50"/><circle cx="446.7" cy="8.0" r="2.8" fill="#2f4a25"/><circle cx="463.7" cy="2.2" r="4.0" fill="#24381d"/><circle cx="680.3" cy="33.9" r="2.6" fill="#24381d"/><circle cx="415.3" cy="5.7" r="4.1" fill="#3b5a2c"/><circle cx="418.4" cy="26.0" r="3.2" fill="#24381d"/><circle cx="425.5" cy="20.7" r="2.2" fill="#3b5a2c"/><circle cx="304.7" cy="45.5" r="2.2" fill="#6a7a50"/><circle cx="382.9" cy="1.6" r="3.8" fill="#6a7a50"/><circle cx="431.0" cy="41.8" r="2.4" fill="#3b5a2c"/><circle cx="430.2" cy="38.8" r="2.2" fill="#24381d"/><circle cx="394.7" cy="31.9" r="2.7" fill="#3b5a2c"/><circle cx="236.1" cy="20.8" r="1.9" fill="#6a7a50"/><circle cx="170.6" cy="17.0" r="3.1" fill="#3b5a2c"/><circle cx="380.3" cy="19.6" r="3.6" fill="#4d6a35"/><circle cx="354.1" cy="48.7" r="3.9" fill="#3b5a2c"/><circle cx="427.9" cy="20.5" r="2.5" fill="#24381d"/><circle cx="405.6" cy="27.8" r="2.3" fill="#2f4a25"/><circle cx="43.5" cy="19.3" r="1.9" fill="#3b5a2c"/><circle cx="407.0" cy="6.3" r="2.8" fill="#4d6a35"/><circle cx="273.2" cy="10.6" r="1.9" fill="#4d6a35"/><circle cx="310.8" cy="2.9" r="2.6" fill="#4d6a35"/></svg><svg class="a" style="left:248px;top:945px" width="792" height="49"><circle cx="531.5" cy="33.8" r="1.2" fill="#3c4a2a" opacity=".8"/><circle cx="743.1" cy="48.5" r="1.9" fill="#8a8a50" opacity=".8"/><circle cx="639.9" cy="24.7" r="1.9" fill="#6f7a45" opacity=".8"/><circle cx="484.4" cy="45.7" r="0.9" fill="#8a8a50" opacity=".8"/><circle cx="727.7" cy="11.4" r="1.8" fill="#6f7a45" opacity=".8"/><circle cx="616.3" cy="48.8" r="1.7" fill="#8a8a50" opacity=".8"/><circle cx="490.6" cy="16.1" r="1.8" fill="#8a8a50" opacity=".8"/><circle cx="682.4" cy="46.0" r="1.0" fill="#5e6a3a" opacity=".8"/><circle cx="735.1" cy="6.1" r="1.4" fill="#5e6a3a" opacity=".8"/><circle cx="652.2" cy="16.8" r="1.0" fill="#8a8a50" opacity=".8"/><circle cx="687.5" cy="23.0" r="0.9" fill="#6f7a45" opacity=".8"/><circle cx="541.6" cy="33.0" r="1.9" fill="#3c4a2a" opacity=".8"/><circle cx="718.0" cy="28.5" r="0.9" fill="#3c4a2a" opacity=".8"/><circle cx="654.8" cy="27.4" r="1.1" fill="#8a8a50" opacity=".8"/><circle cx="768.0" cy="43.5" r="1.2" fill="#8a8a50" opacity=".8"/><circle cx="777.8" cy="24.6" r="2.2" fill="#4a5530" opacity=".8"/><circle cx="600.6" cy="1.3" r="1.0" fill="#5e6a3a" opacity=".8"/><circle cx="703.4" cy="48.1" r="1.5" fill="#5e6a3a" opacity=".8"/><circle cx="651.7" cy="36.7" r="1.6" fill="#6f7a45" opacity=".8"/><circle cx="579.4" cy="48.0" r="1.1" fill="#5e6a3a" opacity=".8"/><circle cx="533.1" cy="17.1" r="1.3" fill="#4a5530" opacity=".8"/><circle cx="666.3" cy="15.0" r="1.0" fill="#5e6a3a" opacity=".8"/><circle cx="768.0" cy="8.5" r="1.3" fill="#8a8a50" opacity=".8"/><circle cx="693.2" cy="33.1" r="2.1" fill="#3c4a2a" opacity=".8"/><circle cx="607.0" cy="48.5" r="1.6" fill="#3c4a2a" opacity=".8"/><circle cx="755.5" cy="24.1" r="1.7" fill="#8a8a50" opacity=".8"/><circle cx="772.1" cy="12.0" r="0.9" fill="#a09a60" opacity=".8"/><circle cx="731.2" cy="37.9" r="0.9" fill="#8a8a50" opacity=".8"/><circle cx="569.9" cy="41.8" r="1.2" fill="#3c4a2a" opacity=".8"/><circle cx="610.9" cy="8.4" r="2.0" fill="#5e6a3a" opacity=".8"/><circle cx="681.4" cy="7.2" r="1.8" fill="#6f7a45" opacity=".8"/><circle cx="629.4" cy="12.4" r="1.5" fill="#3c4a2a" opacity=".8"/><circle cx="707.3" cy="1.4" r="2.1" fill="#6f7a45" opacity=".8"/><circle cx="594.1" cy="7.5" r="1.6" fill="#4a5530" opacity=".8"/><circle cx="612.9" cy="28.5" r="1.2" fill="#8a8a50" opacity=".8"/><circle cx="646.7" cy="13.5" r="0.8" fill="#3c4a2a" opacity=".8"/><circle cx="693.8" cy="46.7" r="1.2" fill="#5e6a3a" opacity=".8"/><circle cx="581.8" cy="12.2" r="1.4" fill="#a09a60" opacity=".8"/><circle cx="693.1" cy="36.8" r="1.0" fill="#6f7a45" opacity=".8"/><circle cx="509.6" cy="4.6" r="1.7" fill="#5e6a3a" opacity=".8"/><circle cx="725.3" cy="3.5" r="1.7" fill="#5e6a3a" opacity=".8"/><circle cx="519.5" cy="26.4" r="1.4" fill="#4a5530" opacity=".8"/><circle cx="757.0" cy="30.4" r="1.1" fill="#6f7a45" opacity=".8"/><circle cx="597.9" cy="34.8" r="1.9" fill="#a09a60" opacity=".8"/><circle cx="668.4" cy="24.7" r="1.9" fill="#3c4a2a" opacity=".8"/><circle cx="726.7" cy="0.4" r="2.0" fill="#8a8a50" opacity=".8"/><circle cx="604.2" cy="27.8" r="1.1" fill="#3c4a2a" opacity=".8"/><circle cx="780.8" cy="29.7" r="0.9" fill="#3c4a2a" opacity=".8"/><circle cx="601.3" cy="15.2" r="1.9" fill="#4a5530" opacity=".8"/><circle cx="730.6" cy="24.0" r="0.9" fill="#a09a60" opacity=".8"/><circle cx="667.6" cy="24.9" r="1.3" fill="#3c4a2a" opacity=".8"/><circle cx="641.3" cy="14.3" r="1.5" fill="#a09a60" opacity=".8"/><circle cx="654.9" cy="3.1" r="2.2" fill="#4a5530" opacity=".8"/><circle cx="590.8" cy="15.6" r="1.0" fill="#8a8a50" opacity=".8"/><circle cx="503.7" cy="3.6" r="1.5" fill="#8a8a50" opacity=".8"/><circle cx="775.5" cy="33.3" r="1.4" fill="#3c4a2a" opacity=".8"/><circle cx="641.4" cy="19.1" r="0.9" fill="#8a8a50" opacity=".8"/><circle cx="487.8" cy="32.4" r="1.1" fill="#5e6a3a" opacity=".8"/><circle cx="699.7" cy="40.0" r="1.4" fill="#3c4a2a" opacity=".8"/><circle cx="728.9" cy="19.5" r="1.5" fill="#4a5530" opacity=".8"/><circle cx="677.1" cy="47.2" r="0.9" fill="#5e6a3a" opacity=".8"/><circle cx="533.9" cy="18.3" r="2.0" fill="#a09a60" opacity=".8"/><circle cx="723.2" cy="30.7" r="1.7" fill="#a09a60" opacity=".8"/><circle cx="748.0" cy="34.3" r="1.2" fill="#3c4a2a" opacity=".8"/><circle cx="630.1" cy="24.4" r="1.7" fill="#4a5530" opacity=".8"/><circle cx="737.3" cy="47.2" r="1.0" fill="#5e6a3a" opacity=".8"/><circle cx="543.0" cy="42.9" r="1.0" fill="#3c4a2a" opacity=".8"/><circle cx="652.6" cy="3.9" r="1.7" fill="#4a5530" opacity=".8"/><circle cx="597.1" cy="36.4" r="2.2" fill="#5e6a3a" opacity=".8"/><circle cx="531.9" cy="21.2" r="1.3" fill="#3c4a2a" opacity=".8"/><circle cx="680.2" cy="33.4" r="0.9" fill="#4a5530" opacity=".8"/><circle cx="488.9" cy="25.2" r="2.1" fill="#6f7a45" opacity=".8"/><circle cx="638.2" cy="11.7" r="1.2" fill="#3c4a2a" opacity=".8"/><circle cx="598.2" cy="46.1" r="1.4" fill="#8a8a50" opacity=".8"/><circle cx="623.7" cy="32.6" r="1.0" fill="#3c4a2a" opacity=".8"/><circle cx="600.0" cy="13.3" r="2.2" fill="#6f7a45" opacity=".8"/><circle cx="547.1" cy="17.2" r="2.1" fill="#3c4a2a" opacity=".8"/><circle cx="699.8" cy="0.9" r="1.6" fill="#a09a60" opacity=".8"/><circle cx="604.2" cy="21.6" r="1.1" fill="#8a8a50" opacity=".8"/><circle cx="482.4" cy="26.7" r="2.2" fill="#5e6a3a" opacity=".8"/><circle cx="539.4" cy="18.2" r="1.3" fill="#5e6a3a" opacity=".8"/><circle cx="522.1" cy="38.8" r="1.5" fill="#8a8a50" opacity=".8"/><circle cx="495.3" cy="9.2" r="2.0" fill="#8a8a50" opacity=".8"/><circle cx="556.2" cy="28.2" r="2.1" fill="#a09a60" opacity=".8"/><circle cx="755.7" cy="0.9" r="0.9" fill="#a09a60" opacity=".8"/><circle cx="616.0" cy="40.8" r="1.1" fill="#3c4a2a" opacity=".8"/><circle cx="498.6" cy="39.9" r="1.5" fill="#a09a60" opacity=".8"/><circle cx="633.3" cy="33.3" r="1.3" fill="#3c4a2a" opacity=".8"/><circle cx="564.2" cy="17.3" r="1.7" fill="#4a5530" opacity=".8"/><circle cx="482.9" cy="39.5" r="0.9" fill="#3c4a2a" opacity=".8"/><circle cx="639.7" cy="33.2" r="1.3" fill="#6f7a45" opacity=".8"/><circle cx="589.9" cy="7.9" r="1.5" fill="#a09a60" opacity=".8"/><circle cx="692.4" cy="32.0" r="0.8" fill="#6f7a45" opacity=".8"/><circle cx="552.6" cy="17.6" r="1.4" fill="#4a5530" opacity=".8"/><circle cx="695.5" cy="35.7" r="1.4" fill="#a09a60" opacity=".8"/><circle cx="581.3" cy="10.7" r="0.9" fill="#a09a60" opacity=".8"/><circle cx="589.9" cy="26.1" r="1.7" fill="#3c4a2a" opacity=".8"/><circle cx="486.6" cy="18.1" r="1.0" fill="#8a8a50" opacity=".8"/><circle cx="745.5" cy="39.5" r="1.8" fill="#4a5530" opacity=".8"/><circle cx="547.8" cy="38.1" r="1.5" fill="#a09a60" opacity=".8"/><circle cx="763.4" cy="47.5" r="1.1" fill="#8a8a50" opacity=".8"/><circle cx="624.8" cy="34.1" r="0.8" fill="#4a5530" opacity=".8"/><circle cx="589.8" cy="30.1" r="0.8" fill="#a09a60" opacity=".8"/><circle cx="597.4" cy="36.7" r="2.1" fill="#6f7a45" opacity=".8"/><circle cx="647.3" cy="43.2" r="1.1" fill="#6f7a45" opacity=".8"/><circle cx="640.6" cy="14.0" r="1.8" fill="#8a8a50" opacity=".8"/><circle cx="755.4" cy="17.8" r="1.1" fill="#5e6a3a" opacity=".8"/><circle cx="667.0" cy="17.2" r="1.9" fill="#3c4a2a" opacity=".8"/><circle cx="593.0" cy="6.4" r="2.1" fill="#5e6a3a" opacity=".8"/><circle cx="777.8" cy="37.0" r="1.8" fill="#3c4a2a" opacity=".8"/><circle cx="711.4" cy="10.4" r="1.5" fill="#a09a60" opacity=".8"/><circle cx="759.3" cy="25.2" r="1.0" fill="#5e6a3a" opacity=".8"/><circle cx="686.6" cy="30.1" r="1.9" fill="#8a8a50" opacity=".8"/><circle cx="714.4" cy="31.9" r="1.1" fill="#4a5530" opacity=".8"/><circle cx="738.1" cy="10.9" r="1.2" fill="#8a8a50" opacity=".8"/><circle cx="647.8" cy="22.5" r="1.9" fill="#5e6a3a" opacity=".8"/><circle cx="584.9" cy="21.6" r="1.8" fill="#4a5530" opacity=".8"/><circle cx="708.0" cy="48.7" r="1.0" fill="#8a8a50" opacity=".8"/><circle cx="490.2" cy="38.1" r="1.2" fill="#a09a60" opacity=".8"/><circle cx="739.7" cy="22.4" r="1.1" fill="#8a8a50" opacity=".8"/><circle cx="709.1" cy="39.8" r="1.7" fill="#8a8a50" opacity=".8"/><circle cx="488.5" cy="44.9" r="1.5" fill="#6f7a45" opacity=".8"/><circle cx="624.0" cy="19.1" r="1.4" fill="#3c4a2a" opacity=".8"/><circle cx="704.2" cy="3.5" r="1.9" fill="#4a5530" opacity=".8"/><circle cx="597.0" cy="12.3" r="1.9" fill="#8a8a50" opacity=".8"/><circle cx="769.6" cy="9.7" r="2.0" fill="#4a5530" opacity=".8"/><circle cx="504.1" cy="15.1" r="1.0" fill="#3c4a2a" opacity=".8"/><circle cx="714.5" cy="45.8" r="1.8" fill="#5e6a3a" opacity=".8"/><circle cx="572.3" cy="10.7" r="1.0" fill="#6f7a45" opacity=".8"/><circle cx="720.6" cy="24.3" r="1.8" fill="#5e6a3a" opacity=".8"/><circle cx="584.6" cy="31.8" r="0.8" fill="#4a5530" opacity=".8"/><circle cx="742.9" cy="13.9" r="1.8" fill="#4a5530" opacity=".8"/><circle cx="609.1" cy="6.0" r="1.7" fill="#a09a60" opacity=".8"/><circle cx="486.6" cy="35.5" r="1.8" fill="#a09a60" opacity=".8"/><circle cx="632.2" cy="26.3" r="1.3" fill="#a09a60" opacity=".8"/><circle cx="678.5" cy="31.2" r="1.0" fill="#4a5530" opacity=".8"/><circle cx="605.4" cy="21.7" r="1.4" fill="#3c4a2a" opacity=".8"/><circle cx="640.3" cy="11.0" r="0.8" fill="#6f7a45" opacity=".8"/><circle cx="680.7" cy="22.3" r="1.9" fill="#6f7a45" opacity=".8"/><circle cx="761.5" cy="36.7" r="1.5" fill="#4a5530" opacity=".8"/><circle cx="531.5" cy="39.2" r="1.8" fill="#4a5530" opacity=".8"/><circle cx="573.4" cy="47.3" r="1.1" fill="#8a8a50" opacity=".8"/><circle cx="527.3" cy="30.6" r="1.1" fill="#6f7a45" opacity=".8"/><circle cx="514.9" cy="26.2" r="1.7" fill="#5e6a3a" opacity=".8"/><circle cx="518.2" cy="6.1" r="1.8" fill="#3c4a2a" opacity=".8"/><circle cx="648.1" cy="4.2" r="1.1" fill="#6f7a45" opacity=".8"/><circle cx="657.2" cy="12.0" r="1.6" fill="#8a8a50" opacity=".8"/><circle cx="735.2" cy="25.5" r="1.9" fill="#3c4a2a" opacity=".8"/><circle cx="604.7" cy="47.0" r="1.3" fill="#3c4a2a" opacity=".8"/><circle cx="724.9" cy="1.7" r="0.9" fill="#8a8a50" opacity=".8"/><circle cx="606.1" cy="39.5" r="1.1" fill="#8a8a50" opacity=".8"/><circle cx="769.0" cy="3.9" r="1.9" fill="#4a5530" opacity=".8"/><circle cx="704.5" cy="26.0" r="1.2" fill="#6f7a45" opacity=".8"/><circle cx="595.8" cy="24.1" r="1.3" fill="#4a5530" opacity=".8"/><circle cx="730.0" cy="2.6" r="1.6" fill="#4a5530" opacity=".8"/><circle cx="631.9" cy="40.2" r="1.9" fill="#6f7a45" opacity=".8"/><circle cx="526.6" cy="15.1" r="1.2" fill="#5e6a3a" opacity=".8"/><circle cx="691.3" cy="44.4" r="1.3" fill="#5e6a3a" opacity=".8"/><circle cx="749.9" cy="20.8" r="0.9" fill="#3c4a2a" opacity=".8"/><circle cx="783.3" cy="10.7" r="1.8" fill="#4a5530" opacity=".8"/><circle cx="494.6" cy="30.7" r="1.3" fill="#a09a60" opacity=".8"/><circle cx="538.2" cy="44.8" r="1.5" fill="#8a8a50" opacity=".8"/><circle cx="530.8" cy="10.7" r="2.0" fill="#6f7a45" opacity=".8"/><circle cx="585.1" cy="32.7" r="2.0" fill="#6f7a45" opacity=".8"/><circle cx="780.8" cy="12.2" r="1.5" fill="#4a5530" opacity=".8"/><circle cx="597.1" cy="13.7" r="2.1" fill="#a09a60" opacity=".8"/><circle cx="536.7" cy="18.1" r="1.3" fill="#6f7a45" opacity=".8"/><circle cx="758.1" cy="41.5" r="1.2" fill="#6f7a45" opacity=".8"/><circle cx="714.0" cy="34.1" r="2.2" fill="#3c4a2a" opacity=".8"/><circle cx="754.2" cy="12.1" r="1.3" fill="#4a5530" opacity=".8"/><circle cx="598.5" cy="47.8" r="1.8" fill="#6f7a45" opacity=".8"/><circle cx="488.7" cy="28.3" r="1.1" fill="#4a5530" opacity=".8"/><circle cx="787.1" cy="37.6" r="1.9" fill="#6f7a45" opacity=".8"/><circle cx="752.1" cy="43.8" r="2.2" fill="#8a8a50" opacity=".8"/><circle cx="635.8" cy="34.4" r="1.1" fill="#a09a60" opacity=".8"/><circle cx="532.0" cy="44.2" r="1.7" fill="#8a8a50" opacity=".8"/><circle cx="572.0" cy="6.3" r="0.9" fill="#8a8a50" opacity=".8"/><circle cx="702.5" cy="37.0" r="1.4" fill="#6f7a45" opacity=".8"/><circle cx="718.2" cy="2.4" r="1.3" fill="#3c4a2a" opacity=".8"/><circle cx="535.1" cy="28.6" r="1.4" fill="#3c4a2a" opacity=".8"/><circle cx="702.1" cy="20.3" r="2.1" fill="#8a8a50" opacity=".8"/><circle cx="652.9" cy="13.7" r="1.8" fill="#5e6a3a" opacity=".8"/><circle cx="740.5" cy="48.0" r="1.4" fill="#4a5530" opacity=".8"/><circle cx="763.1" cy="43.2" r="2.0" fill="#4a5530" opacity=".8"/><circle cx="522.1" cy="16.9" r="1.3" fill="#3c4a2a" opacity=".8"/><circle cx="677.2" cy="40.1" r="1.9" fill="#4a5530" opacity=".8"/><circle cx="530.4" cy="47.4" r="1.0" fill="#5e6a3a" opacity=".8"/><circle cx="587.9" cy="10.4" r="0.9" fill="#5e6a3a" opacity=".8"/><circle cx="489.1" cy="15.9" r="1.6" fill="#3c4a2a" opacity=".8"/><circle cx="745.0" cy="41.5" r="1.8" fill="#a09a60" opacity=".8"/><circle cx="669.5" cy="9.7" r="2.1" fill="#6f7a45" opacity=".8"/><circle cx="576.2" cy="12.4" r="1.8" fill="#6f7a45" opacity=".8"/><circle cx="599.8" cy="38.9" r="1.8" fill="#4a5530" opacity=".8"/><circle cx="707.5" cy="12.0" r="1.1" fill="#4a5530" opacity=".8"/><circle cx="736.2" cy="37.7" r="2.2" fill="#6f7a45" opacity=".8"/><circle cx="506.1" cy="47.3" r="1.4" fill="#8a8a50" opacity=".8"/><circle cx="696.2" cy="38.4" r="1.8" fill="#6f7a45" opacity=".8"/><circle cx="616.7" cy="2.5" r="2.1" fill="#8a8a50" opacity=".8"/><circle cx="506.4" cy="35.0" r="2.1" fill="#8a8a50" opacity=".8"/><circle cx="771.0" cy="40.0" r="1.7" fill="#5e6a3a" opacity=".8"/><circle cx="482.8" cy="37.6" r="1.5" fill="#4a5530" opacity=".8"/><circle cx="705.2" cy="0.1" r="2.0" fill="#5e6a3a" opacity=".8"/><circle cx="787.7" cy="47.0" r="1.6" fill="#5e6a3a" opacity=".8"/><circle cx="593.4" cy="29.7" r="1.9" fill="#8a8a50" opacity=".8"/><circle cx="632.4" cy="13.0" r="1.2" fill="#a09a60" opacity=".8"/><circle cx="718.3" cy="11.0" r="2.1" fill="#5e6a3a" opacity=".8"/><circle cx="524.4" cy="45.0" r="1.2" fill="#3c4a2a" opacity=".8"/><circle cx="561.6" cy="17.3" r="1.8" fill="#a09a60" opacity=".8"/><circle cx="594.9" cy="25.0" r="1.7" fill="#5e6a3a" opacity=".8"/><circle cx="757.2" cy="22.5" r="1.2" fill="#8a8a50" opacity=".8"/><circle cx="741.1" cy="32.2" r="1.2" fill="#8a8a50" opacity=".8"/><circle cx="540.8" cy="28.0" r="1.7" fill="#4a5530" opacity=".8"/><circle cx="712.6" cy="26.2" r="1.7" fill="#6f7a45" opacity=".8"/><circle cx="769.5" cy="12.9" r="1.1" fill="#3c4a2a" opacity=".8"/><circle cx="648.7" cy="47.0" r="0.9" fill="#6f7a45" opacity=".8"/><circle cx="705.7" cy="13.0" r="1.4" fill="#8a8a50" opacity=".8"/><circle cx="646.9" cy="12.2" r="0.9" fill="#4a5530" opacity=".8"/><circle cx="668.8" cy="39.7" r="2.0" fill="#5e6a3a" opacity=".8"/><circle cx="655.7" cy="3.1" r="1.0" fill="#a09a60" opacity=".8"/><circle cx="483.5" cy="37.7" r="2.2" fill="#a09a60" opacity=".8"/><circle cx="723.8" cy="11.6" r="1.8" fill="#8a8a50" opacity=".8"/><circle cx="790.9" cy="41.5" r="1.2" fill="#8a8a50" opacity=".8"/><circle cx="696.0" cy="21.1" r="1.8" fill="#5e6a3a" opacity=".8"/><circle cx="782.2" cy="20.5" r="1.7" fill="#3c4a2a" opacity=".8"/><circle cx="561.3" cy="35.3" r="2.0" fill="#3c4a2a" opacity=".8"/><circle cx="633.4" cy="28.7" r="0.9" fill="#6f7a45" opacity=".8"/><circle cx="593.0" cy="18.3" r="1.5" fill="#4a5530" opacity=".8"/><circle cx="640.2" cy="12.9" r="2.1" fill="#6f7a45" opacity=".8"/><circle cx="553.1" cy="9.1" r="1.7" fill="#4a5530" opacity=".8"/><circle cx="762.9" cy="8.4" r="1.0" fill="#a09a60" opacity=".8"/><circle cx="665.7" cy="35.3" r="1.6" fill="#3c4a2a" opacity=".8"/><circle cx="490.5" cy="2.5" r="1.5" fill="#3c4a2a" opacity=".8"/><circle cx="748.1" cy="29.4" r="2.1" fill="#6f7a45" opacity=".8"/><circle cx="597.6" cy="14.8" r="2.2" fill="#5e6a3a" opacity=".8"/><circle cx="525.6" cy="45.9" r="1.7" fill="#8a8a50" opacity=".8"/><circle cx="619.7" cy="19.8" r="1.3" fill="#8a8a50" opacity=".8"/><circle cx="689.7" cy="10.0" r="2.0" fill="#a09a60" opacity=".8"/><circle cx="511.0" cy="48.0" r="1.0" fill="#5e6a3a" opacity=".8"/><circle cx="598.9" cy="32.0" r="1.4" fill="#a09a60" opacity=".8"/><circle cx="707.9" cy="13.4" r="2.1" fill="#3c4a2a" opacity=".8"/><circle cx="496.8" cy="37.5" r="1.6" fill="#a09a60" opacity=".8"/><circle cx="525.9" cy="25.3" r="1.2" fill="#5e6a3a" opacity=".8"/><circle cx="511.6" cy="19.5" r="1.4" fill="#3c4a2a" opacity=".8"/><circle cx="629.5" cy="13.9" r="1.9" fill="#a09a60" opacity=".8"/><circle cx="608.4" cy="31.6" r="1.9" fill="#5e6a3a" opacity=".8"/><circle cx="711.1" cy="28.1" r="1.5" fill="#6f7a45" opacity=".8"/><circle cx="564.8" cy="39.0" r="1.1" fill="#8a8a50" opacity=".8"/><circle cx="773.0" cy="36.1" r="1.3" fill="#8a8a50" opacity=".8"/><circle cx="586.8" cy="46.3" r="1.2" fill="#6f7a45" opacity=".8"/><circle cx="742.4" cy="13.9" r="1.8" fill="#4a5530" opacity=".8"/><circle cx="488.2" cy="30.9" r="0.9" fill="#4a5530" opacity=".8"/><circle cx="516.6" cy="24.4" r="1.5" fill="#3c4a2a" opacity=".8"/><circle cx="726.6" cy="47.6" r="1.3" fill="#4a5530" opacity=".8"/><circle cx="644.1" cy="3.7" r="1.0" fill="#6f7a45" opacity=".8"/><circle cx="714.0" cy="3.8" r="1.7" fill="#4a5530" opacity=".8"/><circle cx="645.3" cy="47.3" r="1.4" fill="#a09a60" opacity=".8"/><circle cx="513.2" cy="25.3" r="0.9" fill="#6f7a45" opacity=".8"/><circle cx="672.8" cy="46.4" r="2.1" fill="#3c4a2a" opacity=".8"/><circle cx="633.9" cy="20.4" r="1.1" fill="#6f7a45" opacity=".8"/><circle cx="735.1" cy="0.9" r="1.8" fill="#3c4a2a" opacity=".8"/><circle cx="496.0" cy="29.3" r="1.8" fill="#a09a60" opacity=".8"/><circle cx="541.7" cy="5.4" r="1.2" fill="#8a8a50" opacity=".8"/><circle cx="509.1" cy="28.5" r="2.0" fill="#4a5530" opacity=".8"/><circle cx="717.9" cy="1.8" r="2.1" fill="#6f7a45" opacity=".8"/><circle cx="728.7" cy="20.7" r="1.3" fill="#5e6a3a" opacity=".8"/><circle cx="629.1" cy="32.0" r="0.8" fill="#5e6a3a" opacity=".8"/><circle cx="759.1" cy="1.6" r="1.6" fill="#8a8a50" opacity=".8"/><circle cx="663.8" cy="15.4" r="1.4" fill="#3c4a2a" opacity=".8"/><circle cx="715.8" cy="4.0" r="1.9" fill="#4a5530" opacity=".8"/><circle cx="694.2" cy="12.8" r="1.2" fill="#4a5530" opacity=".8"/><circle cx="704.4" cy="6.5" r="2.1" fill="#a09a60" opacity=".8"/><circle cx="657.6" cy="40.6" r="2.0" fill="#a09a60" opacity=".8"/><circle cx="601.3" cy="25.6" r="2.2" fill="#5e6a3a" opacity=".8"/><circle cx="560.8" cy="34.0" r="1.9" fill="#5e6a3a" opacity=".8"/><circle cx="588.2" cy="23.2" r="0.9" fill="#4a5530" opacity=".8"/><circle cx="782.4" cy="36.2" r="1.1" fill="#4a5530" opacity=".8"/><circle cx="687.6" cy="10.6" r="1.9" fill="#6f7a45" opacity=".8"/><circle cx="700.8" cy="31.1" r="2.1" fill="#8a8a50" opacity=".8"/><circle cx="531.3" cy="26.0" r="2.2" fill="#8a8a50" opacity=".8"/><circle cx="773.2" cy="3.5" r="1.2" fill="#6f7a45" opacity=".8"/><circle cx="492.6" cy="31.5" r="1.6" fill="#3c4a2a" opacity=".8"/><circle cx="629.2" cy="31.3" r="1.1" fill="#6f7a45" opacity=".8"/><circle cx="594.2" cy="23.7" r="2.0" fill="#5e6a3a" opacity=".8"/><circle cx="520.6" cy="17.0" r="1.7" fill="#8a8a50" opacity=".8"/><circle cx="567.3" cy="17.6" r="1.1" fill="#4a5530" opacity=".8"/><circle cx="735.7" cy="9.0" r="2.0" fill="#4a5530" opacity=".8"/><circle cx="490.3" cy="38.4" r="1.5" fill="#6f7a45" opacity=".8"/><circle cx="678.4" cy="28.3" r="1.1" fill="#8a8a50" opacity=".8"/><circle cx="666.7" cy="16.6" r="0.8" fill="#a09a60" opacity=".8"/><circle cx="669.0" cy="28.1" r="1.0" fill="#8a8a50" opacity=".8"/><circle cx="689.9" cy="22.2" r="1.0" fill="#a09a60" opacity=".8"/><circle cx="781.1" cy="21.4" r="1.7" fill="#3c4a2a" opacity=".8"/><circle cx="526.1" cy="42.8" r="1.6" fill="#a09a60" opacity=".8"/><circle cx="586.5" cy="5.8" r="2.2" fill="#a09a60" opacity=".8"/><circle cx="613.0" cy="13.0" r="1.2" fill="#5e6a3a" opacity=".8"/><circle cx="485.6" cy="12.1" r="2.0" fill="#8a8a50" opacity=".8"/><circle cx="538.1" cy="16.1" r="1.8" fill="#8a8a50" opacity=".8"/><circle cx="587.5" cy="8.6" r="2.0" fill="#3c4a2a" opacity=".8"/><circle cx="591.6" cy="40.2" r="1.9" fill="#6f7a45" opacity=".8"/><circle cx="639.8" cy="47.8" r="1.8" fill="#6f7a45" opacity=".8"/><circle cx="633.0" cy="29.9" r="1.0" fill="#8a8a50" opacity=".8"/><circle cx="590.3" cy="7.4" r="1.9" fill="#8a8a50" opacity=".8"/><circle cx="748.1" cy="27.0" r="1.3" fill="#8a8a50" opacity=".8"/><circle cx="578.4" cy="9.7" r="1.6" fill="#4a5530" opacity=".8"/><circle cx="735.3" cy="25.5" r="1.3" fill="#4a5530" opacity=".8"/><circle cx="691.2" cy="39.0" r="1.7" fill="#a09a60" opacity=".8"/><circle cx="534.1" cy="37.1" r="1.2" fill="#8a8a50" opacity=".8"/><circle cx="515.8" cy="37.4" r="1.8" fill="#6f7a45" opacity=".8"/><circle cx="705.8" cy="1.5" r="1.8" fill="#6f7a45" opacity=".8"/><circle cx="768.5" cy="3.5" r="1.8" fill="#a09a60" opacity=".8"/><circle cx="529.5" cy="10.0" r="0.8" fill="#8a8a50" opacity=".8"/><circle cx="504.6" cy="43.7" r="1.4" fill="#8a8a50" opacity=".8"/><circle cx="490.9" cy="23.7" r="2.1" fill="#8a8a50" opacity=".8"/><circle cx="541.7" cy="38.2" r="2.2" fill="#5e6a3a" opacity=".8"/><circle cx="656.5" cy="31.6" r="1.0" fill="#4a5530" opacity=".8"/><circle cx="541.5" cy="38.1" r="1.9" fill="#3c4a2a" opacity=".8"/><circle cx="749.4" cy="25.2" r="1.0" fill="#4a5530" opacity=".8"/><circle cx="591.4" cy="19.4" r="1.6" fill="#3c4a2a" opacity=".8"/><circle cx="719.2" cy="26.4" r="1.2" fill="#8a8a50" opacity=".8"/><circle cx="680.4" cy="21.3" r="1.0" fill="#5e6a3a" opacity=".8"/><circle cx="760.4" cy="31.2" r="2.0" fill="#8a8a50" opacity=".8"/><circle cx="570.6" cy="35.2" r="1.3" fill="#a09a60" opacity=".8"/><circle cx="702.3" cy="26.1" r="1.6" fill="#5e6a3a" opacity=".8"/><circle cx="491.4" cy="11.1" r="1.9" fill="#4a5530" opacity=".8"/><circle cx="753.3" cy="41.8" r="0.8" fill="#4a5530" opacity=".8"/><circle cx="788.8" cy="16.6" r="0.8" fill="#8a8a50" opacity=".8"/><circle cx="759.2" cy="34.0" r="1.9" fill="#6f7a45" opacity=".8"/><circle cx="588.5" cy="21.8" r="1.0" fill="#5e6a3a" opacity=".8"/><circle cx="498.7" cy="7.0" r="1.0" fill="#6f7a45" opacity=".8"/><circle cx="765.5" cy="29.4" r="1.5" fill="#8a8a50" opacity=".8"/><circle cx="560.9" cy="27.7" r="1.0" fill="#6f7a45" opacity=".8"/><circle cx="784.7" cy="17.7" r="0.9" fill="#8a8a50" opacity=".8"/><circle cx="726.4" cy="31.6" r="1.1" fill="#5e6a3a" opacity=".8"/><circle cx="551.9" cy="24.5" r="1.1" fill="#4a5530" opacity=".8"/><circle cx="568.6" cy="41.4" r="1.4" fill="#6f7a45" opacity=".8"/><circle cx="719.2" cy="21.1" r="0.8" fill="#8a8a50" opacity=".8"/><circle cx="751.1" cy="38.8" r="1.1" fill="#4a5530" opacity=".8"/><circle cx="672.6" cy="26.4" r="1.0" fill="#3c4a2a" opacity=".8"/><circle cx="676.3" cy="42.1" r="0.9" fill="#6f7a45" opacity=".8"/><circle cx="729.1" cy="22.1" r="1.4" fill="#3c4a2a" opacity=".8"/><circle cx="767.4" cy="46.8" r="1.7" fill="#4a5530" opacity=".8"/><circle cx="563.9" cy="9.5" r="1.8" fill="#3c4a2a" opacity=".8"/><circle cx="500.5" cy="0.2" r="1.3" fill="#a09a60" opacity=".8"/><circle cx="493.0" cy="22.8" r="1.6" fill="#5e6a3a" opacity=".8"/><circle cx="583.1" cy="25.1" r="2.1" fill="#a09a60" opacity=".8"/><circle cx="518.9" cy="10.5" r="1.9" fill="#a09a60" opacity=".8"/><circle cx="481.2" cy="35.5" r="2.1" fill="#3c4a2a" opacity=".8"/><circle cx="776.0" cy="45.0" r="1.4" fill="#6f7a45" opacity=".8"/><circle cx="789.9" cy="45.3" r="1.5" fill="#a09a60" opacity=".8"/><circle cx="626.1" cy="47.7" r="1.9" fill="#8a8a50" opacity=".8"/><circle cx="565.8" cy="44.8" r="1.9" fill="#6f7a45" opacity=".8"/><circle cx="523.6" cy="47.2" r="1.9" fill="#4a5530" opacity=".8"/><circle cx="537.5" cy="19.1" r="1.5" fill="#a09a60" opacity=".8"/><circle cx="489.2" cy="27.3" r="1.4" fill="#6f7a45" opacity=".8"/><circle cx="737.8" cy="21.9" r="1.0" fill="#4a5530" opacity=".8"/><circle cx="622.3" cy="45.4" r="2.1" fill="#a09a60" opacity=".8"/><circle cx="664.3" cy="37.6" r="1.0" fill="#6f7a45" opacity=".8"/><circle cx="492.3" cy="2.2" r="0.8" fill="#3c4a2a" opacity=".8"/><circle cx="750.8" cy="6.3" r="1.9" fill="#3c4a2a" opacity=".8"/><circle cx="537.7" cy="34.3" r="1.3" fill="#4a5530" opacity=".8"/><circle cx="649.1" cy="48.0" r="1.8" fill="#6f7a45" opacity=".8"/><circle cx="731.1" cy="26.5" r="1.7" fill="#4a5530" opacity=".8"/><circle cx="705.1" cy="0.0" r="1.6" fill="#5e6a3a" opacity=".8"/><circle cx="694.6" cy="43.3" r="1.5" fill="#8a8a50" opacity=".8"/><circle cx="511.5" cy="25.8" r="2.2" fill="#5e6a3a" opacity=".8"/><circle cx="581.0" cy="44.7" r="1.5" fill="#8a8a50" opacity=".8"/><circle cx="568.8" cy="10.8" r="1.1" fill="#5e6a3a" opacity=".8"/><circle cx="483.2" cy="39.7" r="0.8" fill="#5e6a3a" opacity=".8"/><circle cx="703.5" cy="22.3" r="2.1" fill="#a09a60" opacity=".8"/><circle cx="766.0" cy="19.6" r="1.4" fill="#8a8a50" opacity=".8"/><circle cx="614.6" cy="45.0" r="1.0" fill="#6f7a45" opacity=".8"/><circle cx="775.7" cy="5.2" r="1.5" fill="#6f7a45" opacity=".8"/><circle cx="664.4" cy="4.4" r="1.5" fill="#6f7a45" opacity=".8"/><circle cx="556.1" cy="35.0" r="1.8" fill="#5e6a3a" opacity=".8"/><circle cx="611.5" cy="36.3" r="0.8" fill="#8a8a50" opacity=".8"/><circle cx="747.3" cy="15.9" r="1.4" fill="#3c4a2a" opacity=".8"/><circle cx="726.8" cy="6.4" r="0.9" fill="#a09a60" opacity=".8"/><circle cx="615.5" cy="48.4" r="1.6" fill="#5e6a3a" opacity=".8"/><circle cx="787.4" cy="5.0" r="2.2" fill="#8a8a50" opacity=".8"/><circle cx="619.8" cy="4.0" r="0.9" fill="#8a8a50" opacity=".8"/><circle cx="619.7" cy="13.4" r="1.9" fill="#6f7a45" opacity=".8"/><circle cx="516.1" cy="29.5" r="2.1" fill="#6f7a45" opacity=".8"/><circle cx="709.3" cy="41.6" r="1.7" fill="#4a5530" opacity=".8"/><circle cx="644.4" cy="11.2" r="0.8" fill="#5e6a3a" opacity=".8"/><circle cx="730.2" cy="13.8" r="1.7" fill="#3c4a2a" opacity=".8"/><circle cx="623.1" cy="10.6" r="2.0" fill="#3c4a2a" opacity=".8"/><circle cx="779.8" cy="28.9" r="2.0" fill="#3c4a2a" opacity=".8"/><circle cx="564.0" cy="23.2" r="1.9" fill="#3c4a2a" opacity=".8"/><circle cx="652.5" cy="42.5" r="1.1" fill="#6f7a45" opacity=".8"/><circle cx="584.6" cy="4.2" r="1.2" fill="#4a5530" opacity=".8"/><circle cx="606.2" cy="25.5" r="1.0" fill="#a09a60" opacity=".8"/><circle cx="766.3" cy="45.2" r="1.7" fill="#6f7a45" opacity=".8"/><circle cx="634.3" cy="18.3" r="0.8" fill="#a09a60" opacity=".8"/><circle cx="506.9" cy="40.3" r="1.8" fill="#5e6a3a" opacity=".8"/><circle cx="601.8" cy="4.1" r="1.5" fill="#3c4a2a" opacity=".8"/><circle cx="669.1" cy="40.4" r="1.0" fill="#8a8a50" opacity=".8"/><circle cx="498.2" cy="6.1" r="1.2" fill="#a09a60" opacity=".8"/><circle cx="751.7" cy="43.2" r="1.3" fill="#6f7a45" opacity=".8"/><circle cx="587.0" cy="5.1" r="2.0" fill="#5e6a3a" opacity=".8"/><circle cx="496.8" cy="9.4" r="2.2" fill="#a09a60" opacity=".8"/><circle cx="502.0" cy="12.4" r="1.8" fill="#4a5530" opacity=".8"/><circle cx="748.0" cy="3.7" r="1.8" fill="#8a8a50" opacity=".8"/><circle cx="760.9" cy="8.1" r="1.2" fill="#5e6a3a" opacity=".8"/><circle cx="536.2" cy="18.4" r="1.0" fill="#3c4a2a" opacity=".8"/><circle cx="681.4" cy="37.3" r="2.1" fill="#8a8a50" opacity=".8"/><circle cx="522.8" cy="48.4" r="0.9" fill="#4a5530" opacity=".8"/><circle cx="497.7" cy="45.9" r="1.8" fill="#5e6a3a" opacity=".8"/><circle cx="786.0" cy="7.7" r="1.7" fill="#8a8a50" opacity=".8"/><circle cx="687.0" cy="37.0" r="1.6" fill="#4a5530" opacity=".8"/><circle cx="790.4" cy="40.1" r="0.8" fill="#4a5530" opacity=".8"/><circle cx="498.2" cy="24.6" r="0.9" fill="#5e6a3a" opacity=".8"/><circle cx="616.4" cy="22.7" r="1.4" fill="#6f7a45" opacity=".8"/><circle cx="718.8" cy="7.6" r="1.1" fill="#8a8a50" opacity=".8"/><circle cx="644.2" cy="37.5" r="1.5" fill="#4a5530" opacity=".8"/><circle cx="625.2" cy="44.4" r="1.0" fill="#3c4a2a" opacity=".8"/><circle cx="690.6" cy="46.6" r="1.6" fill="#3c4a2a" opacity=".8"/><circle cx="691.9" cy="5.4" r="2.0" fill="#5e6a3a" opacity=".8"/><circle cx="549.4" cy="4.4" r="1.3" fill="#a09a60" opacity=".8"/><circle cx="710.9" cy="31.5" r="1.2" fill="#3c4a2a" opacity=".8"/><circle cx="736.2" cy="47.1" r="1.0" fill="#5e6a3a" opacity=".8"/><circle cx="747.6" cy="16.9" r="2.2" fill="#6f7a45" opacity=".8"/><circle cx="779.0" cy="15.8" r="0.9" fill="#a09a60" opacity=".8"/><circle cx="529.9" cy="28.3" r="0.9" fill="#4a5530" opacity=".8"/><circle cx="669.4" cy="0.8" r="1.9" fill="#3c4a2a" opacity=".8"/><circle cx="596.9" cy="29.6" r="1.7" fill="#3c4a2a" opacity=".8"/><circle cx="774.3" cy="20.8" r="1.8" fill="#a09a60" opacity=".8"/><circle cx="558.6" cy="9.6" r="0.8" fill="#a09a60" opacity=".8"/><circle cx="709.8" cy="10.7" r="2.0" fill="#3c4a2a" opacity=".8"/><circle cx="514.4" cy="8.1" r="1.4" fill="#4a5530" opacity=".8"/><circle cx="725.9" cy="21.8" r="1.3" fill="#6f7a45" opacity=".8"/><circle cx="556.0" cy="19.3" r="1.3" fill="#4a5530" opacity=".8"/><circle cx="521.2" cy="19.9" r="1.3" fill="#6f7a45" opacity=".8"/><circle cx="777.6" cy="17.5" r="2.1" fill="#8a8a50" opacity=".8"/><circle cx="733.4" cy="47.4" r="1.4" fill="#a09a60" opacity=".8"/><circle cx="620.8" cy="6.4" r="1.8" fill="#a09a60" opacity=".8"/><circle cx="666.3" cy="3.5" r="0.9" fill="#6f7a45" opacity=".8"/><circle cx="621.6" cy="23.6" r="1.7" fill="#6f7a45" opacity=".8"/><circle cx="766.4" cy="9.8" r="1.8" fill="#8a8a50" opacity=".8"/><circle cx="711.5" cy="29.0" r="1.7" fill="#3c4a2a" opacity=".8"/><circle cx="488.4" cy="10.0" r="1.0" fill="#8a8a50" opacity=".8"/><circle cx="679.0" cy="20.7" r="1.1" fill="#8a8a50" opacity=".8"/><circle cx="587.2" cy="1.8" r="1.6" fill="#6f7a45" opacity=".8"/><circle cx="511.7" cy="16.4" r="1.2" fill="#8a8a50" opacity=".8"/><circle cx="664.2" cy="9.8" r="2.0" fill="#3c4a2a" opacity=".8"/><circle cx="716.1" cy="7.3" r="1.0" fill="#8a8a50" opacity=".8"/><circle cx="728.4" cy="28.2" r="2.1" fill="#a09a60" opacity=".8"/><circle cx="534.7" cy="37.3" r="1.8" fill="#8a8a50" opacity=".8"/><circle cx="677.3" cy="42.2" r="1.6" fill="#a09a60" opacity=".8"/><circle cx="652.6" cy="12.3" r="1.0" fill="#3c4a2a" opacity=".8"/><circle cx="623.8" cy="41.7" r="1.2" fill="#a09a60" opacity=".8"/><circle cx="765.4" cy="25.8" r="1.1" fill="#4a5530" opacity=".8"/><circle cx="696.6" cy="42.3" r="1.8" fill="#a09a60" opacity=".8"/><circle cx="777.2" cy="32.3" r="1.7" fill="#6f7a45" opacity=".8"/><circle cx="739.0" cy="44.9" r="2.1" fill="#4a5530" opacity=".8"/><circle cx="730.6" cy="23.2" r="1.6" fill="#5e6a3a" opacity=".8"/><circle cx="766.7" cy="4.2" r="1.9" fill="#3c4a2a" opacity=".8"/><circle cx="762.8" cy="38.1" r="1.9" fill="#8a8a50" opacity=".8"/><circle cx="649.1" cy="21.3" r="1.4" fill="#4a5530" opacity=".8"/><circle cx="496.7" cy="15.6" r="1.6" fill="#a09a60" opacity=".8"/><circle cx="521.6" cy="48.6" r="1.4" fill="#3c4a2a" opacity=".8"/><circle cx="741.2" cy="21.9" r="1.9" fill="#3c4a2a" opacity=".8"/><circle cx="759.7" cy="19.5" r="1.5" fill="#a09a60" opacity=".8"/><circle cx="494.4" cy="8.3" r="1.1" fill="#4a5530" opacity=".8"/><circle cx="540.3" cy="17.8" r="1.3" fill="#4a5530" opacity=".8"/><circle cx="726.3" cy="18.4" r="1.8" fill="#3c4a2a" opacity=".8"/><circle cx="523.9" cy="34.1" r="1.6" fill="#5e6a3a" opacity=".8"/><circle cx="677.8" cy="42.2" r="1.5" fill="#8a8a50" opacity=".8"/><circle cx="748.2" cy="7.4" r="1.6" fill="#4a5530" opacity=".8"/><circle cx="539.6" cy="30.6" r="1.3" fill="#8a8a50" opacity=".8"/><circle cx="692.8" cy="3.0" r="2.1" fill="#4a5530" opacity=".8"/><circle cx="576.6" cy="23.8" r="1.2" fill="#8a8a50" opacity=".8"/><circle cx="564.9" cy="35.1" r="1.0" fill="#8a8a50" opacity=".8"/><circle cx="537.0" cy="26.4" r="1.1" fill="#6f7a45" opacity=".8"/><circle cx="537.8" cy="3.2" r="1.9" fill="#3c4a2a" opacity=".8"/><circle cx="673.1" cy="42.9" r="2.2" fill="#5e6a3a" opacity=".8"/><circle cx="715.0" cy="46.9" r="1.5" fill="#6f7a45" opacity=".8"/><circle cx="548.6" cy="37.5" r="0.9" fill="#6f7a45" opacity=".8"/><circle cx="638.1" cy="8.8" r="1.7" fill="#4a5530" opacity=".8"/><circle cx="608.0" cy="6.2" r="1.8" fill="#6f7a45" opacity=".8"/><circle cx="517.3" cy="10.9" r="1.8" fill="#6f7a45" opacity=".8"/><circle cx="658.8" cy="42.5" r="1.5" fill="#4a5530" opacity=".8"/><circle cx="592.4" cy="24.7" r="1.8" fill="#6f7a45" opacity=".8"/><circle cx="717.5" cy="41.7" r="0.8" fill="#4a5530" opacity=".8"/><circle cx="602.6" cy="15.7" r="1.8" fill="#5e6a3a" opacity=".8"/><circle cx="580.4" cy="6.9" r="1.6" fill="#8a8a50" opacity=".8"/><circle cx="550.4" cy="31.3" r="1.3" fill="#4a5530" opacity=".8"/><circle cx="585.3" cy="7.3" r="1.0" fill="#8a8a50" opacity=".8"/><circle cx="787.6" cy="4.1" r="1.8" fill="#3c4a2a" opacity=".8"/><circle cx="711.5" cy="5.4" r="1.9" fill="#3c4a2a" opacity=".8"/><circle cx="719.2" cy="41.9" r="2.1" fill="#3c4a2a" opacity=".8"/><circle cx="511.3" cy="0.4" r="1.6" fill="#a09a60" opacity=".8"/><circle cx="503.5" cy="14.6" r="1.3" fill="#4a5530" opacity=".8"/><circle cx="718.0" cy="16.1" r="0.8" fill="#3c4a2a" opacity=".8"/><circle cx="493.8" cy="43.7" r="0.9" fill="#4a5530" opacity=".8"/><circle cx="629.4" cy="10.0" r="1.6" fill="#a09a60" opacity=".8"/><circle cx="495.3" cy="26.5" r="0.9" fill="#3c4a2a" opacity=".8"/><circle cx="738.4" cy="29.1" r="1.3" fill="#6f7a45" opacity=".8"/><circle cx="713.4" cy="14.0" r="1.1" fill="#5e6a3a" opacity=".8"/><circle cx="629.1" cy="44.0" r="1.0" fill="#3c4a2a" opacity=".8"/><circle cx="764.7" cy="43.7" r="1.9" fill="#5e6a3a" opacity=".8"/><circle cx="593.9" cy="41.0" r="1.8" fill="#3c4a2a" opacity=".8"/><circle cx="532.0" cy="5.2" r="2.1" fill="#3c4a2a" opacity=".8"/><circle cx="608.5" cy="47.2" r="1.1" fill="#3c4a2a" opacity=".8"/><circle cx="502.9" cy="13.0" r="1.7" fill="#8a8a50" opacity=".8"/><circle cx="615.3" cy="28.5" r="1.4" fill="#8a8a50" opacity=".8"/><circle cx="580.6" cy="34.7" r="1.9" fill="#8a8a50" opacity=".8"/><circle cx="614.0" cy="6.8" r="2.1" fill="#5e6a3a" opacity=".8"/><circle cx="513.4" cy="44.5" r="2.2" fill="#6f7a45" opacity=".8"/><circle cx="776.2" cy="23.7" r="1.0" fill="#5e6a3a" opacity=".8"/><circle cx="680.9" cy="47.4" r="2.0" fill="#6f7a45" opacity=".8"/><circle cx="529.4" cy="16.5" r="2.1" fill="#6f7a45" opacity=".8"/><circle cx="565.6" cy="29.4" r="1.2" fill="#5e6a3a" opacity=".8"/><circle cx="655.3" cy="29.8" r="1.4" fill="#a09a60" opacity=".8"/><circle cx="516.8" cy="4.9" r="1.2" fill="#6f7a45" opacity=".8"/><circle cx="748.7" cy="1.3" r="1.1" fill="#8a8a50" opacity=".8"/><circle cx="493.2" cy="35.3" r="1.6" fill="#8a8a50" opacity=".8"/><circle cx="676.8" cy="28.5" r="1.7" fill="#5e6a3a" opacity=".8"/><circle cx="529.1" cy="41.4" r="0.9" fill="#5e6a3a" opacity=".8"/><circle cx="676.5" cy="45.6" r="2.1" fill="#3c4a2a" opacity=".8"/><circle cx="618.3" cy="29.4" r="1.1" fill="#4a5530" opacity=".8"/><circle cx="625.4" cy="5.5" r="2.0" fill="#8a8a50" opacity=".8"/><circle cx="731.0" cy="43.8" r="1.2" fill="#6f7a45" opacity=".8"/><circle cx="734.6" cy="3.7" r="2.1" fill="#5e6a3a" opacity=".8"/><circle cx="632.7" cy="26.7" r="1.8" fill="#5e6a3a" opacity=".8"/><circle cx="610.3" cy="44.3" r="1.1" fill="#8a8a50" opacity=".8"/><circle cx="595.1" cy="42.4" r="1.9" fill="#5e6a3a" opacity=".8"/><circle cx="667.1" cy="29.1" r="1.6" fill="#8a8a50" opacity=".8"/><circle cx="739.9" cy="19.3" r="1.4" fill="#8a8a50" opacity=".8"/><circle cx="786.7" cy="8.4" r="1.6" fill="#a09a60" opacity=".8"/><circle cx="510.8" cy="27.6" r="2.2" fill="#6f7a45" opacity=".8"/><circle cx="711.7" cy="41.2" r="2.1" fill="#a09a60" opacity=".8"/><circle cx="502.4" cy="43.0" r="1.0" fill="#6f7a45" opacity=".8"/><circle cx="505.3" cy="22.7" r="1.1" fill="#5e6a3a" opacity=".8"/><circle cx="730.5" cy="26.9" r="1.6" fill="#4a5530" opacity=".8"/><circle cx="544.9" cy="32.6" r="1.5" fill="#a09a60" opacity=".8"/><circle cx="743.5" cy="12.1" r="2.2" fill="#3c4a2a" opacity=".8"/><circle cx="493.1" cy="33.7" r="1.8" fill="#4a5530" opacity=".8"/><circle cx="639.8" cy="26.2" r="1.7" fill="#a09a60" opacity=".8"/><circle cx="520.6" cy="41.9" r="1.6" fill="#5e6a3a" opacity=".8"/><circle cx="774.9" cy="17.7" r="2.0" fill="#5e6a3a" opacity=".8"/><circle cx="552.2" cy="17.1" r="0.9" fill="#6f7a45" opacity=".8"/><circle cx="552.3" cy="39.9" r="1.4" fill="#6f7a45" opacity=".8"/><circle cx="723.5" cy="37.5" r="1.9" fill="#4a5530" opacity=".8"/><circle cx="755.1" cy="19.1" r="1.4" fill="#8a8a50" opacity=".8"/><circle cx="676.8" cy="40.6" r="2.0" fill="#6f7a45" opacity=".8"/><circle cx="720.8" cy="24.1" r="1.1" fill="#4a5530" opacity=".8"/><circle cx="634.0" cy="8.4" r="1.7" fill="#4a5530" opacity=".8"/><circle cx="542.2" cy="12.0" r="1.8" fill="#8a8a50" opacity=".8"/><circle cx="617.2" cy="45.2" r="1.9" fill="#a09a60" opacity=".8"/><circle cx="710.4" cy="35.0" r="1.1" fill="#5e6a3a" opacity=".8"/><circle cx="685.3" cy="47.2" r="1.7" fill="#3c4a2a" opacity=".8"/><circle cx="701.0" cy="41.4" r="1.9" fill="#3c4a2a" opacity=".8"/><circle cx="493.4" cy="47.3" r="2.2" fill="#a09a60" opacity=".8"/><circle cx="630.5" cy="32.2" r="1.6" fill="#8a8a50" opacity=".8"/><circle cx="681.2" cy="41.0" r="1.9" fill="#5e6a3a" opacity=".8"/><circle cx="773.3" cy="13.6" r="0.8" fill="#4a5530" opacity=".8"/><circle cx="576.7" cy="48.3" r="1.6" fill="#8a8a50" opacity=".8"/><circle cx="570.4" cy="22.3" r="2.0" fill="#4a5530" opacity=".8"/><circle cx="591.7" cy="10.8" r="1.2" fill="#5e6a3a" opacity=".8"/><circle cx="722.9" cy="33.9" r="2.2" fill="#3c4a2a" opacity=".8"/><circle cx="762.7" cy="16.4" r="2.1" fill="#4a5530" opacity=".8"/><circle cx="512.9" cy="17.6" r="1.0" fill="#6f7a45" opacity=".8"/><circle cx="720.6" cy="46.1" r="1.3" fill="#a09a60" opacity=".8"/><circle cx="631.1" cy="15.0" r="1.0" fill="#8a8a50" opacity=".8"/><circle cx="627.1" cy="8.1" r="1.5" fill="#3c4a2a" opacity=".8"/><circle cx="686.7" cy="29.0" r="2.2" fill="#3c4a2a" opacity=".8"/><circle cx="582.6" cy="28.9" r="1.4" fill="#a09a60" opacity=".8"/><circle cx="715.5" cy="24.7" r="1.8" fill="#4a5530" opacity=".8"/><circle cx="507.6" cy="39.3" r="1.5" fill="#5e6a3a" opacity=".8"/><circle cx="766.6" cy="42.4" r="0.9" fill="#a09a60" opacity=".8"/><circle cx="733.2" cy="10.5" r="2.0" fill="#4a5530" opacity=".8"/><circle cx="648.2" cy="29.9" r="0.9" fill="#a09a60" opacity=".8"/><circle cx="766.0" cy="32.7" r="1.8" fill="#8a8a50" opacity=".8"/><circle cx="694.3" cy="44.6" r="1.4" fill="#5e6a3a" opacity=".8"/><circle cx="751.7" cy="3.2" r="1.3" fill="#a09a60" opacity=".8"/><circle cx="729.9" cy="43.6" r="2.1" fill="#a09a60" opacity=".8"/><circle cx="539.4" cy="39.2" r="1.3" fill="#a09a60" opacity=".8"/><circle cx="621.0" cy="2.4" r="1.8" fill="#4a5530" opacity=".8"/><circle cx="527.8" cy="34.8" r="1.3" fill="#a09a60" opacity=".8"/><circle cx="686.3" cy="41.7" r="1.9" fill="#4a5530" opacity=".8"/><circle cx="745.0" cy="13.3" r="0.8" fill="#6f7a45" opacity=".8"/><circle cx="518.8" cy="10.3" r="1.6" fill="#6f7a45" opacity=".8"/><circle cx="731.6" cy="38.0" r="1.0" fill="#6f7a45" opacity=".8"/><circle cx="705.6" cy="43.9" r="1.6" fill="#3c4a2a" opacity=".8"/><circle cx="626.5" cy="6.5" r="2.2" fill="#6f7a45" opacity=".8"/><circle cx="574.4" cy="16.9" r="2.1" fill="#4a5530" opacity=".8"/><circle cx="733.5" cy="34.0" r="1.2" fill="#4a5530" opacity=".8"/><circle cx="636.1" cy="45.6" r="1.3" fill="#4a5530" opacity=".8"/><circle cx="599.8" cy="2.9" r="1.9" fill="#a09a60" opacity=".8"/><circle cx="765.8" cy="48.2" r="1.9" fill="#4a5530" opacity=".8"/><circle cx="626.5" cy="47.1" r="1.3" fill="#5e6a3a" opacity=".8"/><circle cx="762.3" cy="39.4" r="1.0" fill="#a09a60" opacity=".8"/><circle cx="620.9" cy="20.9" r="1.0" fill="#4a5530" opacity=".8"/><circle cx="513.9" cy="3.3" r="1.7" fill="#8a8a50" opacity=".8"/><circle cx="772.2" cy="5.8" r="1.4" fill="#5e6a3a" opacity=".8"/><circle cx="766.6" cy="44.8" r="1.5" fill="#3c4a2a" opacity=".8"/><circle cx="689.1" cy="31.3" r="2.1" fill="#8a8a50" opacity=".8"/><circle cx="533.2" cy="7.9" r="1.7" fill="#8a8a50" opacity=".8"/><circle cx="647.0" cy="16.8" r="0.8" fill="#8a8a50" opacity=".8"/><circle cx="657.0" cy="37.5" r="1.6" fill="#5e6a3a" opacity=".8"/><circle cx="639.8" cy="29.8" r="1.3" fill="#6f7a45" opacity=".8"/><circle cx="678.6" cy="12.5" r="0.9" fill="#5e6a3a" opacity=".8"/><circle cx="635.2" cy="16.2" r="1.2" fill="#6f7a45" opacity=".8"/><circle cx="545.9" cy="39.1" r="1.1" fill="#8a8a50" opacity=".8"/><circle cx="609.7" cy="42.7" r="1.8" fill="#a09a60" opacity=".8"/><circle cx="600.1" cy="40.9" r="2.1" fill="#a09a60" opacity=".8"/><circle cx="666.3" cy="39.5" r="0.9" fill="#6f7a45" opacity=".8"/><circle cx="501.5" cy="23.2" r="1.6" fill="#8a8a50" opacity=".8"/><circle cx="777.0" cy="29.6" r="1.4" fill="#5e6a3a" opacity=".8"/><circle cx="592.7" cy="10.4" r="2.1" fill="#a09a60" opacity=".8"/><circle cx="644.1" cy="31.8" r="1.6" fill="#a09a60" opacity=".8"/><circle cx="701.4" cy="34.2" r="1.8" fill="#5e6a3a" opacity=".8"/><circle cx="546.7" cy="0.9" r="1.7" fill="#3c4a2a" opacity=".8"/><circle cx="482.3" cy="29.7" r="0.9" fill="#5e6a3a" opacity=".8"/><circle cx="710.2" cy="33.0" r="1.5" fill="#8a8a50" opacity=".8"/><circle cx="767.0" cy="20.3" r="1.0" fill="#5e6a3a" opacity=".8"/><circle cx="654.1" cy="14.3" r="1.1" fill="#6f7a45" opacity=".8"/><circle cx="508.5" cy="31.8" r="1.0" fill="#4a5530" opacity=".8"/><circle cx="680.5" cy="31.1" r="1.8" fill="#4a5530" opacity=".8"/><circle cx="614.8" cy="1.0" r="1.6" fill="#4a5530" opacity=".8"/><circle cx="591.4" cy="34.5" r="1.6" fill="#8a8a50" opacity=".8"/><circle cx="695.7" cy="27.9" r="1.8" fill="#6f7a45" opacity=".8"/><circle cx="650.2" cy="33.5" r="1.2" fill="#6f7a45" opacity=".8"/><circle cx="542.4" cy="23.5" r="2.0" fill="#4a5530" opacity=".8"/><circle cx="485.5" cy="9.1" r="1.7" fill="#5e6a3a" opacity=".8"/><circle cx="542.8" cy="6.5" r="1.1" fill="#3c4a2a" opacity=".8"/><circle cx="669.9" cy="22.9" r="1.9" fill="#3c4a2a" opacity=".8"/><circle cx="506.3" cy="38.6" r="0.8" fill="#8a8a50" opacity=".8"/><circle cx="678.0" cy="9.9" r="1.6" fill="#a09a60" opacity=".8"/><circle cx="788.6" cy="48.5" r="0.9" fill="#8a8a50" opacity=".8"/><circle cx="753.0" cy="45.7" r="0.9" fill="#5e6a3a" opacity=".8"/><circle cx="722.4" cy="47.4" r="1.4" fill="#a09a60" opacity=".8"/><circle cx="650.7" cy="45.4" r="1.9" fill="#8a8a50" opacity=".8"/><circle cx="601.6" cy="25.1" r="2.2" fill="#3c4a2a" opacity=".8"/><circle cx="690.1" cy="40.5" r="2.0" fill="#6f7a45" opacity=".8"/><circle cx="641.5" cy="32.4" r="1.2" fill="#8a8a50" opacity=".8"/><circle cx="676.2" cy="14.0" r="1.2" fill="#8a8a50" opacity=".8"/><circle cx="780.3" cy="33.9" r="2.2" fill="#a09a60" opacity=".8"/><circle cx="591.0" cy="8.4" r="1.6" fill="#5e6a3a" opacity=".8"/><circle cx="647.3" cy="34.6" r="1.1" fill="#4a5530" opacity=".8"/><circle cx="544.5" cy="48.0" r="1.1" fill="#8a8a50" opacity=".8"/><circle cx="665.0" cy="32.8" r="1.8" fill="#6f7a45" opacity=".8"/><circle cx="616.1" cy="39.2" r="1.1" fill="#5e6a3a" opacity=".8"/><circle cx="652.3" cy="31.3" r="1.8" fill="#3c4a2a" opacity=".8"/><circle cx="541.2" cy="5.3" r="0.9" fill="#6f7a45" opacity=".8"/><circle cx="591.8" cy="40.0" r="1.0" fill="#8a8a50" opacity=".8"/><circle cx="568.5" cy="16.4" r="2.0" fill="#6f7a45" opacity=".8"/><circle cx="769.2" cy="12.3" r="1.7" fill="#6f7a45" opacity=".8"/><circle cx="762.8" cy="0.6" r="1.9" fill="#8a8a50" opacity=".8"/><circle cx="635.0" cy="10.3" r="1.4" fill="#3c4a2a" opacity=".8"/><circle cx="543.8" cy="36.0" r="1.9" fill="#8a8a50" opacity=".8"/><circle cx="485.4" cy="32.2" r="1.6" fill="#3c4a2a" opacity=".8"/><circle cx="662.6" cy="8.8" r="1.8" fill="#4a5530" opacity=".8"/><circle cx="782.0" cy="27.1" r="2.2" fill="#a09a60" opacity=".8"/><circle cx="549.5" cy="8.9" r="1.9" fill="#8a8a50" opacity=".8"/><circle cx="788.9" cy="12.3" r="0.9" fill="#a09a60" opacity=".8"/><circle cx="750.4" cy="17.0" r="1.1" fill="#4a5530" opacity=".8"/><circle cx="593.5" cy="43.8" r="1.5" fill="#8a8a50" opacity=".8"/><circle cx="687.3" cy="47.2" r="1.1" fill="#4a5530" opacity=".8"/><circle cx="483.1" cy="42.3" r="1.4" fill="#a09a60" opacity=".8"/><circle cx="675.0" cy="19.1" r="1.7" fill="#a09a60" opacity=".8"/><circle cx="673.3" cy="16.1" r="0.9" fill="#6f7a45" opacity=".8"/><circle cx="485.8" cy="16.9" r="1.9" fill="#4a5530" opacity=".8"/><circle cx="723.3" cy="43.5" r="1.4" fill="#4a5530" opacity=".8"/><circle cx="710.0" cy="17.5" r="0.9" fill="#a09a60" opacity=".8"/><circle cx="673.4" cy="1.7" r="1.6" fill="#a09a60" opacity=".8"/><circle cx="713.0" cy="3.0" r="1.2" fill="#3c4a2a" opacity=".8"/><circle cx="586.7" cy="24.7" r="1.5" fill="#4a5530" opacity=".8"/><circle cx="556.3" cy="33.5" r="1.9" fill="#6f7a45" opacity=".8"/><circle cx="544.4" cy="19.5" r="1.4" fill="#3c4a2a" opacity=".8"/><circle cx="585.6" cy="7.2" r="1.5" fill="#4a5530" opacity=".8"/><circle cx="634.8" cy="29.7" r="1.5" fill="#5e6a3a" opacity=".8"/><circle cx="635.4" cy="37.2" r="1.9" fill="#8a8a50" opacity=".8"/><circle cx="616.8" cy="10.1" r="1.1" fill="#8a8a50" opacity=".8"/><circle cx="748.3" cy="3.0" r="0.9" fill="#6f7a45" opacity=".8"/><circle cx="772.8" cy="9.4" r="1.3" fill="#6f7a45" opacity=".8"/><circle cx="555.9" cy="22.9" r="1.1" fill="#a09a60" opacity=".8"/><circle cx="712.8" cy="25.3" r="1.8" fill="#8a8a50" opacity=".8"/><circle cx="780.2" cy="29.8" r="1.6" fill="#3c4a2a" opacity=".8"/><circle cx="612.8" cy="14.4" r="1.4" fill="#3c4a2a" opacity=".8"/><circle cx="742.5" cy="7.8" r="1.3" fill="#8a8a50" opacity=".8"/><circle cx="688.2" cy="29.4" r="1.4" fill="#8a8a50" opacity=".8"/><circle cx="629.9" cy="37.7" r="1.1" fill="#5e6a3a" opacity=".8"/><circle cx="595.9" cy="41.2" r="2.0" fill="#a09a60" opacity=".8"/><circle cx="571.7" cy="15.6" r="1.9" fill="#5e6a3a" opacity=".8"/><circle cx="736.9" cy="0.4" r="1.7" fill="#4a5530" opacity=".8"/><circle cx="690.9" cy="31.2" r="2.0" fill="#6f7a45" opacity=".8"/><circle cx="608.3" cy="45.5" r="1.6" fill="#6f7a45" opacity=".8"/><circle cx="654.2" cy="42.0" r="1.3" fill="#4a5530" opacity=".8"/><circle cx="709.7" cy="43.8" r="1.6" fill="#5e6a3a" opacity=".8"/><circle cx="749.6" cy="4.9" r="1.7" fill="#3c4a2a" opacity=".8"/><circle cx="641.4" cy="44.0" r="2.1" fill="#4a5530" opacity=".8"/><circle cx="749.1" cy="25.0" r="1.9" fill="#3c4a2a" opacity=".8"/><circle cx="647.7" cy="30.4" r="1.4" fill="#8a8a50" opacity=".8"/><circle cx="532.0" cy="4.1" r="2.0" fill="#6f7a45" opacity=".8"/><circle cx="693.6" cy="0.9" r="1.7" fill="#a09a60" opacity=".8"/><circle cx="598.8" cy="31.6" r="1.1" fill="#5e6a3a" opacity=".8"/><circle cx="488.8" cy="36.9" r="1.7" fill="#4a5530" opacity=".8"/><circle cx="616.2" cy="9.6" r="1.9" fill="#6f7a45" opacity=".8"/><circle cx="505.2" cy="7.1" r="1.5" fill="#4a5530" opacity=".8"/><circle cx="51.3" cy="15.8" r="3.2" fill="#8a8676" opacity=".5"/><circle cx="261.9" cy="45.3" r="3.2" fill="#b8b2a4" opacity=".5"/><circle cx="163.4" cy="38.5" r="4.5" fill="#958a7a" opacity=".5"/><circle cx="315.3" cy="29.4" r="4.3" fill="#8a8676" opacity=".5"/><circle cx="188.8" cy="37.5" r="5.7" fill="#b8b2a4" opacity=".5"/><circle cx="103.4" cy="35.0" r="3.0" fill="#b8b2a4" opacity=".5"/><circle cx="171.5" cy="47.9" r="2.8" fill="#8a8676" opacity=".5"/><circle cx="64.9" cy="3.8" r="4.5" fill="#b8b2a4" opacity=".5"/><circle cx="156.6" cy="11.2" r="3.9" fill="#958a7a" opacity=".5"/><circle cx="238.6" cy="7.7" r="3.0" fill="#958a7a" opacity=".5"/><circle cx="136.3" cy="3.9" r="2.6" fill="#8a8676" opacity=".5"/><circle cx="242.1" cy="37.1" r="2.1" fill="#b8b2a4" opacity=".5"/><circle cx="409.4" cy="30.7" r="3.9" fill="#8a8676" opacity=".5"/><circle cx="214.4" cy="38.2" r="2.7" fill="#958a7a" opacity=".5"/><circle cx="333.6" cy="38.0" r="2.9" fill="#b8b2a4" opacity=".5"/><circle cx="242.7" cy="48.8" r="4.3" fill="#b8b2a4" opacity=".5"/><circle cx="315.8" cy="44.4" r="4.7" fill="#8a8676" opacity=".5"/><circle cx="64.5" cy="18.1" r="2.4" fill="#b8b2a4" opacity=".5"/><circle cx="338.9" cy="41.4" r="2.1" fill="#958a7a" opacity=".5"/><circle cx="286.1" cy="25.6" r="2.5" fill="#b8b2a4" opacity=".5"/><circle cx="225.5" cy="24.9" r="4.9" fill="#8a8676" opacity=".5"/><circle cx="208.5" cy="48.5" r="5.1" fill="#8a8676" opacity=".5"/><circle cx="245.7" cy="4.3" r="5.8" fill="#958a7a" opacity=".5"/><circle cx="401.3" cy="33.1" r="5.2" fill="#958a7a" opacity=".5"/><circle cx="320.4" cy="14.5" r="2.6" fill="#958a7a" opacity=".5"/><circle cx="138.2" cy="3.8" r="2.2" fill="#8a8676" opacity=".5"/><circle cx="284.5" cy="44.3" r="5.1" fill="#958a7a" opacity=".5"/><circle cx="397.2" cy="15.5" r="2.8" fill="#b8b2a4" opacity=".5"/><circle cx="160.9" cy="0.5" r="2.2" fill="#958a7a" opacity=".5"/><circle cx="141.7" cy="16.2" r="4.4" fill="#b8b2a4" opacity=".5"/><circle cx="401.6" cy="47.1" r="3.9" fill="#958a7a" opacity=".5"/><circle cx="387.6" cy="22.0" r="5.4" fill="#958a7a" opacity=".5"/><circle cx="110.2" cy="27.3" r="5.4" fill="#958a7a" opacity=".5"/><circle cx="438.9" cy="11.5" r="4.7" fill="#8a8676" opacity=".5"/><circle cx="241.8" cy="7.4" r="5.9" fill="#8a8676" opacity=".5"/><circle cx="245.4" cy="48.0" r="4.4" fill="#958a7a" opacity=".5"/><circle cx="366.7" cy="10.8" r="3.8" fill="#958a7a" opacity=".5"/><circle cx="142.3" cy="20.9" r="3.1" fill="#958a7a" opacity=".5"/><circle cx="303.4" cy="18.0" r="5.0" fill="#958a7a" opacity=".5"/><circle cx="207.0" cy="8.5" r="5.9" fill="#b8b2a4" opacity=".5"/><path d="M760 49C770 40 780 35 792 33V49z" fill="#e0c838"/></svg><div class="a" style="left:248px;top:945px;width:792px;height:49px;overflow:hidden"><svg class="a" style="left:264.5px;top:-13.5px" width="19.0" height="19.0"><circle cx="9.5" cy="9.5" r="8.5" fill="#4a8ac6" stroke="#1c3550" stroke-width="1.2"/></svg><svg class="a" style="left:424.5px;top:17.5px" width="19.0" height="19.0"><circle cx="9.5" cy="9.5" r="8.5" fill="#4a8ac6" stroke="#1c3550" stroke-width="1.2"/></svg><svg class="a" style="left:589.5px;top:-7.5px" width="19.0" height="19.0"><circle cx="9.5" cy="9.5" r="8.5" fill="#4a8ac6" stroke="#1c3550" stroke-width="1.2"/></svg><svg class="a" style="left:576.5px;top:28.5px" width="19.0" height="19.0"><circle cx="9.5" cy="9.5" r="8.5" fill="#4a8ac6" stroke="#1c3550" stroke-width="1.2"/></svg></div><svg class="a" style="left:352px;top:950px" width="20" height="20"><circle cx="10" cy="10" r="9" fill="#9cc4e8" stroke="#5a7fa8" stroke-width="1" opacity=".9"/></svg><div class="a" style="left:253px;top:951px;width:216px;height:15px;border:2px solid #777;border-top:none;background:rgba(255,255,255,.5)"></div><div class="t" style="left:259px;top:951px;font-size:10.5px;color:#222">200 ft</div><div class="a" style="left:257px;top:969px;width:117px;height:15px;background:rgba(255,255,255,.6)"></div><div class="t" style="left:261px;top:970px;font-size:10.5px;color:#222">-31.21566 : 149.65315</div><div class="a" style="left:980px;top:947px;width:70px;height:28px;background:#fff;border-radius:4px"></div><div class="t" style="left:992px;top:953px;font-size:13px;line-height:16px;color:#2c3e50">Opacity</div>
<div class="a" style="left:1039px;top:220px;width:881px;height:790px;background:#fff;border-left:1px solid #6e7e90"></div><div class="a" style="left:1040px;top:273px;width:880px;height:93px;background:#f5f6f7;border-top:1px solid #dadbdc;border-bottom:1px solid #dadbdc"></div><div class="a" style="left:1773px;top:278px;width:1px;height:82px;background:#e2e3e4"></div><div class="a" style="left:1886px;top:278px;width:1px;height:82px;background:#e2e3e4"></div><svg class="a" style="left:1706px;top:280px" width="16" height="16"><path d="M2 6c0-4 4-5 8-4l4-2v10c0 4-3 6-7 6s-5-4-5-10z" fill="#5a5550"/><circle cx="6" cy="8" r="2" fill="#fff"/><circle cx="6" cy="8" r="1" fill="#111"/></svg><div class="t" style="left:1722px;top:282px;color:#222">Open</div><svg class="a" style="left:1750px;top:285px" width="8" height="5"><path d="M0 0h7l-3.5 4z" fill="#333"/></svg><svg class="a" style="left:1708px;top:302px" width="16" height="18"><path d="M2 1h8l4 4v12H2z" fill="#fff" stroke="#999"/><path d="M5 15l9-10 2 2-9 10z" fill="#f5b830"/></svg><div class="t" style="left:1722px;top:304px;color:#222">Edit</div><svg class="a" style="left:1706px;top:324px" width="16" height="18"><rect x="2" y="1" width="8" height="8" fill="#f2d050"/><circle cx="9" cy="11" r="6" fill="#eee" stroke="#777"/><path d="M4 11l3 3 5-6" stroke="#3a9a3a" stroke-width="1.6" fill="none"/></svg><div class="t" style="left:1722px;top:327px;color:#222">History</div><div class="t" style="left:1704px;top:349px;color:#444">en</div><svg class="a" style="left:1779px;top:281px" width="14" height="14"><rect x=".5" y=".5" width="13" height="13" fill="#2b8ae0"/><rect x="2" y="2" width="4.5" height="4.5" fill="#c8e4fa"/><rect x="7.5" y="2" width="4.5" height="4.5" fill="#c8e4fa"/><rect x="2" y="7.5" width="4.5" height="4.5" fill="#c8e4fa"/><rect x="7.5" y="7.5" width="4.5" height="4.5" fill="#c8e4fa"/></svg><div class="t" style="left:1798px;top:282px;color:#222">Select all</div><svg class="a" style="left:1779px;top:303px" width="14" height="14"><rect x="1" y="1" width="5" height="5" fill="none" stroke="#aaa"/><rect x="8" y="1" width="5" height="5" fill="none" stroke="#aaa"/><rect x="1" y="8" width="5" height="5" fill="none" stroke="#aaa"/><rect x="8" y="8" width="5" height="5" fill="none" stroke="#aaa"/></svg><div class="t" style="left:1798px;top:304px;color:#222">Select none</div><svg class="a" style="left:1779px;top:325px" width="14" height="14"><rect x="1" y="1" width="5" height="5" fill="none" stroke="#aaa"/><rect x="7.5" y=".5" width="6" height="6" fill="#8ec6f4" stroke="#2b8ae0"/><rect x=".5" y="7.5" width="6" height="6" fill="#8ec6f4" stroke="#2b8ae0"/><rect x="8" y="8" width="5" height="5" fill="none" stroke="#aaa"/></svg><div class="t" style="left:1798px;top:327px;color:#222">Invert selection</div><div class="t" style="left:1812px;top:349px;color:#444">Select</div><div class="a" style="left:1040px;top:371px;width:880px;height:30px;border-top:1px solid #d9d9d9;border-bottom:1px solid #d9d9d9"></div><div class="a" style="left:1898px;top:372px;width:1px;height:28px;background:#d9d9d9"></div><svg class="a" style="left:1879px;top:384px" width="11" height="7"><path d="M1 1l4.5 4.5L10 1" stroke="#555" stroke-width="1.3" fill="none"/></svg><svg class="a" style="left:1906px;top:380px" width="14" height="14"><path d="M11 7a5 5 0 1 1-2-4" stroke="#666" stroke-width="1.3" fill="none"/><path d="M7 1h4v4" stroke="#666" stroke-width="1.3" fill="none"/></svg><div class="t" style="left:1702px;top:418px;color:#4c607a">Type</div><div class="a" style="left:1813px;top:411px;width:1px;height:25px;background:#e5e5e5"></div><div class="t" style="left:1820px;top:418px;color:#4c607a">Size</div><div class="a" style="left:1893px;top:411px;width:1px;height:25px;background:#e5e5e5"></div><div class="a" style="left:1040px;top:442px;width:850px;height:21px;background:#d9d9d9"></div><div class="t" style="left:1700px;top:446px;color:#6d6d6d">GIMP 2.10.28</div><div class="t" style="left:1685px;width:200px;text-align:right;top:446px;color:#6d6d6d">161,805 KB</div><div class="t" style="left:1702px;top:467px;color:#6d6d6d">Foxit PDF Reader ...</div><div class="t" style="left:1685px;width:200px;text-align:right;top:467px;color:#6d6d6d">6,082 KB</div><div class="t" style="left:1702px;top:488px;color:#6d6d6d">Foxit PDF Reader ...</div><div class="t" style="left:1685px;width:200px;text-align:right;top:488px;color:#6d6d6d">863 KB</div><div class="t" style="left:1702px;top:509px;color:#6d6d6d">Foxit PDF Reader ...</div><div class="t" style="left:1685px;width:200px;text-align:right;top:509px;color:#6d6d6d">6,433 KB</div><div class="t" style="left:1702px;top:530px;color:#6d6d6d">Foxit PDF Reader ...</div><div class="t" style="left:1685px;width:200px;text-align:right;top:530px;color:#6d6d6d">11,811 KB</div><div class="t" style="left:1702px;top:551px;color:#6d6d6d">Foxit PDF Reader ...</div><div class="t" style="left:1685px;width:200px;text-align:right;top:551px;color:#6d6d6d">14,631 KB</div><div class="t" style="left:1700px;top:572px;color:#6d6d6d">CSV File</div><div class="t" style="left:1685px;width:200px;text-align:right;top:572px;color:#6d6d6d">8 KB</div><div class="t" style="left:1700px;top:593px;color:#6d6d6d">CSV File</div><div class="t" style="left:1685px;width:200px;text-align:right;top:593px;color:#6d6d6d">8 KB</div><div class="t" style="left:1700px;top:614px;color:#6d6d6d">CSV File</div><div class="t" style="left:1685px;width:200px;text-align:right;top:614px;color:#6d6d6d">5 KB</div><div class="t" style="left:1700px;top:635px;color:#6d6d6d">CSV File</div><div class="t" style="left:1685px;width:200px;text-align:right;top:635px;color:#6d6d6d">5 KB</div><div class="t" style="left:1700px;top:656px;color:#6d6d6d">CSV File</div><div class="t" style="left:1685px;width:200px;text-align:right;top:656px;color:#6d6d6d">5 KB</div><div class="t" style="left:1702px;top:677px;color:#6d6d6d">Foxit PDF Reader ...</div><div class="t" style="left:1685px;width:200px;text-align:right;top:677px;color:#6d6d6d">10,980 KB</div><div class="t" style="left:1700px;top:698px;color:#6d6d6d">CSV File</div><div class="t" style="left:1685px;width:200px;text-align:right;top:698px;color:#6d6d6d">5 KB</div><div class="t" style="left:1700px;top:719px;color:#6d6d6d">CSV File</div><div class="t" style="left:1685px;width:200px;text-align:right;top:719px;color:#6d6d6d">6 KB</div><div class="t" style="left:1700px;top:740px;color:#6d6d6d">CSV File</div><div class="t" style="left:1685px;width:200px;text-align:right;top:740px;color:#6d6d6d">7 KB</div><div class="t" style="left:1700px;top:761px;color:#6d6d6d">CSV File</div><div class="t" style="left:1685px;width:200px;text-align:right;top:761px;color:#6d6d6d">3 KB</div><div class="t" style="left:1700px;top:782px;color:#6d6d6d">CSV File</div><div class="t" style="left:1685px;width:200px;text-align:right;top:782px;color:#6d6d6d">6 KB</div><div class="t" style="left:1700px;top:803px;color:#6d6d6d">CSV File</div><div class="t" style="left:1685px;width:200px;text-align:right;top:803px;color:#6d6d6d">6 KB</div><div class="t" style="left:1700px;top:824px;color:#6d6d6d">CSV File</div><div class="t" style="left:1685px;width:200px;text-align:right;top:824px;color:#6d6d6d">6 KB</div><div class="t" style="left:1700px;top:845px;color:#6d6d6d">CSV File</div><div class="t" style="left:1685px;width:200px;text-align:right;top:845px;color:#6d6d6d">5 KB</div><div class="t" style="left:1700px;top:866px;color:#6d6d6d">CSV File</div><div class="t" style="left:1685px;width:200px;text-align:right;top:866px;color:#6d6d6d">6 KB</div><div class="t" style="left:1700px;top:887px;color:#6d6d6d">CSV File</div><div class="t" style="left:1685px;width:200px;text-align:right;top:887px;color:#6d6d6d">7 KB</div><div class="t" style="left:1700px;top:908px;color:#6d6d6d">CSV File</div><div class="t" style="left:1685px;width:200px;text-align:right;top:908px;color:#6d6d6d">6 KB</div><div class="t" style="left:1700px;top:929px;color:#6d6d6d">CSV File</div><div class="t" style="left:1685px;width:200px;text-align:right;top:929px;color:#6d6d6d">6 KB</div><div class="t" style="left:1700px;top:950px;color:#6d6d6d">CSV File</div><div class="t" style="left:1685px;width:200px;text-align:right;top:950px;color:#6d6d6d">6 KB</div><div class="t" style="left:1700px;top:971px;color:#6d6d6d">CSV File</div><div class="t" style="left:1685px;width:200px;text-align:right;top:971px;color:#6d6d6d">6 KB</div><svg class="a" style="left:1297px;top:948px" width="16" height="17"><path d="M2 2h11v14H2z" fill="#bfe0ee" stroke="#7a9aa8" stroke-width=".8"/><path d="M4 5h8M4 7.5h8M4 10h8M4 12.5h8" stroke="#8fb8c8" stroke-width=".8"/><path d="M3 1.5h10" stroke="#666" stroke-width="1.2" stroke-dasharray="1 1"/></svg><div class="t" style="left:1316px;top:950px;color:#222">M51.csv</div><div class="t" style="left:1556px;top:950px;color:#6d6d6d">2/10/2021 5:13 PM</div><svg class="a" style="left:1297px;top:969px" width="16" height="17"><path d="M2 2h11v14H2z" fill="#bfe0ee" stroke="#7a9aa8" stroke-width=".8"/><path d="M4 5h8M4 7.5h8M4 10h8M4 12.5h8" stroke="#8fb8c8" stroke-width=".8"/><path d="M3 1.5h10" stroke="#666" stroke-width="1.2" stroke-dasharray="1 1"/></svg><div class="t" style="left:1316px;top:971px;color:#222">M50.csv</div><div class="t" style="left:1556px;top:971px;color:#6d6d6d">2/10/2021 4:57 PM</div><svg class="a" style="left:1075px;top:945px" width="13" height="11"><path d="M1 6l6-5 5 3-6 6z" fill="#ef6a35" stroke="#c84a20" stroke-width=".6"/><path d="M3 6l4-3 3 2-4 3z" fill="#fbd2c0"/></svg><svg class="a" style="left:1066px;top:976px" width="13" height="11"><path d="M1 6l6-5 5 3-6 6z" fill="#ef6a35" stroke="#c84a20" stroke-width=".6"/><path d="M3 6l4-3 3 2-4 3z" fill="#fbd2c0"/></svg><div class="a" style="left:1040px;top:946px;width:218px;height:40px;overflow:hidden"><div class="t" style="left:53px;top:-1px;color:#111">LaCie (G:)</div><div class="t" style="left:45px;top:30px;color:#111">LaCie (G:)</div></div><div class="a" style="left:1258px;top:946px;width:16px;height:40px;background:#f0f0f0"></div><svg class="a" style="left:1260px;top:973px" width="11" height="7"><path d="M1 1l4.5 4.5L10 1" stroke="#555" stroke-width="1.3" fill="none"/></svg><div class="t" style="left:1054px;top:992px;color:#1e3a5f">335 items</div><div class="a" style="left:1115px;top:990px;width:1px;height:16px;background:#e8e8e8"></div><div class="t" style="left:1125px;top:992px;color:#1e3a5f">1 item selected&nbsp; 158 MB</div><div class="a" style="left:1260px;top:990px;width:1px;height:16px;background:#e8e8e8"></div><div class="t" style="left:1270px;top:992px;color:#1e3a5f">State:</div><svg class="a" style="left:1300px;top:989px" width="17" height="16"><circle cx="5" cy="5" r="3" fill="#6a4a3a"/><path d="M0 15c0-5 2-7 5-7s5 2 5 7z" fill="#3a9a5a"/><circle cx="11" cy="4" r="3" fill="#5a3a2a"/><path d="M6 14c0-5 2-7 5-7s5 2 5 7z" fill="#3a7ac0"/></svg><div class="t" style="left:1320px;top:992px;color:#1e3a5f">Shared</div><div class="a" style="left:1363px;top:990px;width:1px;height:16px;background:#e8e8e8"></div>
<div class="a" style="left:171px;top:50px;width:1538px;height:896px;background:#f0f0f0;border:1px solid #107c10"></div>
<div class="a" style="left:171px;top:50px;width:1538px;height:31px;background:#107c10"></div>
<svg class="a" style="left:180px;top:57px" width="17" height="17"><circle cx="8" cy="8" r="5.8" fill="none" stroke="#7cb342" stroke-width="2.6"/><path d="M9 9l5.5 5.5" stroke="#9ccc65" stroke-width="2.8"/><circle cx="8.2" cy="8.2" r="1.8" fill="#ff7a20"/></svg>
<div class="t" style="left:200px;top:58px;font-size:11.7px;color:#fff">*Untitled Project — QGIS</div>
<div class="a" style="left:1588px;top:65px;width:11px;height:1px;background:#fff"></div>
<div class="a" style="left:1633px;top:59px;width:12px;height:12px;border:1px solid #fff"></div>
<svg class="a" style="left:1679px;top:59px" width="12" height="12"><path d="M.5 .5L11.5 11.5M11.5 .5L.5 11.5" stroke="#fff" stroke-width="1.1"/></svg>
<div class="a" style="left:172px;top:81px;width:1536px;height:20px;background:#f0f0f0;border-bottom:1px solid #dcdcdc"></div>
<div class="t" style="left:182px;top:84px">Pro<u>j</u>ect</div>
<div class="t" style="left:233px;top:84px"><u>E</u>dit</div>
<div class="t" style="left:266px;top:84px"><u>V</u>iew</div>
<div class="t" style="left:305px;top:84px"><u>L</u>ayer</div>
<div class="t" style="left:348px;top:84px"><u>S</u>ettings</div>
<div class="t" style="left:403px;top:84px"><u>P</u>lugins</div>
<div class="t" style="left:456px;top:84px">Vect<u>o</u>r</div>
<div class="t" style="left:503px;top:84px"><u>R</u>aster</div>
<div class="t" style="left:550px;top:84px"><u>D</u>atabase</div>
<div class="t" style="left:611px;top:84px"><u>W</u>eb</div>
<div class="t" style="left:650px;top:84px"><u>M</u>esh</div>
<div class="t" style="left:693px;top:84px">Pro<u>c</u>essing</div>
<div class="t" style="left:764px;top:84px"><u>H</u>elp</div>
<div class="a" style="left:172px;top:101px;width:1536px;height:39px;background:linear-gradient(#f9f9f9,#f1f1f1);border-bottom:1px solid #d6d6d6"></div>
<div class="a" style="left:172px;top:140px;width:1536px;height:39px;background:linear-gradient(#f9f9f9,#f1f1f1);border-bottom:1px solid #d6d6d6"></div>
<div class="a" style="left:172px;top:179px;width:1536px;height:39px;background:linear-gradient(#f9f9f9,#f1f1f1);border-bottom:1px solid #d6d6d6"></div>
<div class="a" style="left:400px;top:104px;width:31px;height:32px;background:#dcdcdc;border:1px solid #b4b4b4;border-radius:2px"></div><div class="a" style="left:1043px;top:104px;width:31px;height:32px;background:#dcdcdc;border:1px solid #b4b4b4;border-radius:2px"></div><svg class="ico" style="left:177.5px;top:107.0px" width="5" height="24"><circle cx="1" cy="2" r=".7" fill="#b4b4b4"/><circle cx="1" cy="5" r=".7" fill="#b4b4b4"/><circle cx="1" cy="8" r=".7" fill="#b4b4b4"/><circle cx="1" cy="11" r=".7" fill="#b4b4b4"/><circle cx="1" cy="14" r=".7" fill="#b4b4b4"/><circle cx="1" cy="17" r=".7" fill="#b4b4b4"/><circle cx="1" cy="20" r=".7" fill="#b4b4b4"/><circle cx="1" cy="23" r=".7" fill="#b4b4b4"/><circle cx="4" cy="2" r=".7" fill="#b4b4b4"/><circle cx="4" cy="5" r=".7" fill="#b4b4b4"/><circle cx="4" cy="8" r=".7" fill="#b4b4b4"/><circle cx="4" cy="11" r=".7" fill="#b4b4b4"/><circle cx="4" cy="14" r=".7" fill="#b4b4b4"/><circle cx="4" cy="17" r=".7" fill="#b4b4b4"/><circle cx="4" cy="20" r=".7" fill="#b4b4b4"/><circle cx="4" cy="23" r=".7" fill="#b4b4b4"/></svg><svg class="ico" style="left:187.0px;top:107.0px" width="26" height="26" viewBox="0 0 24 24"><path d="M5.5 2.5h9l4 4v15h-13z" fill="#fff" stroke="#555" stroke-width="1"/><path d="M14.5 2.5v4h4" fill="#eee" stroke="#555" stroke-width="1"/></svg><svg class="ico" style="left:220.0px;top:107.0px" width="26" height="26" viewBox="0 0 24 24"><path d="M2.5 6.5h6l2 2h9v11h-17z" fill="#e9c33a" stroke="#c9a020" stroke-width="1"/><path d="M4.5 11h18l-2 8.5h-18z" fill="#fcdc5a" stroke="#d1aa25" stroke-width="1"/></svg><svg class="ico" style="left:253.0px;top:107.0px" width="26" height="26" viewBox="0 0 24 24"><rect x="3" y="3" width="18" height="18" rx="2" fill="#6a94c9" stroke="#43709f" stroke-width="1"/><rect x="6.5" y="4" width="11" height="7" fill="#fff"/><path d="M8 6h8M8 8h8" stroke="#888" stroke-width=".8"/><rect x="7.5" y="15" width="9" height="6" fill="#eee"/><rect x="8.5" y="16.5" width="2" height="3" fill="#4a6f9f"/></svg><svg class="ico" style="left:286.0px;top:107.0px" width="26" height="26" viewBox="0 0 24 24"><path d="M7.5 3.5h9l4 4v14h-13z" fill="#fff" stroke="#666" stroke-width="1"/><rect x="3" y="3" width="5" height="18" fill="#f5d560" stroke="#c9a020" stroke-width="1"/><path d="M4 6h3M4 9h2M4 12h3M4 15h2M4 18h3" stroke="#a08020" stroke-width=".8"/><rect x="13" y="13" width="9" height="9" rx="1.5" fill="#c9a417"/><polygon points="17.50,13.90 18.30,16.11 20.62,15.70 19.10,17.50 20.62,19.30 18.30,18.89 17.50,21.10 16.70,18.89 14.38,19.30 15.90,17.50 14.38,15.70 16.70,16.11" fill="#fff"/><circle cx="17.5" cy="17.5" r="1" fill="#c9a417"/></svg><svg class="ico" style="left:320.0px;top:107.0px" width="26" height="26" viewBox="0 0 24 24"><rect x="2.5" y="4.5" width="17" height="15" fill="#fff" stroke="#666" stroke-width="1"/><rect x="4.5" y="7" width="13" height="10" fill="none" stroke="#9ab8e0" stroke-width=".8"/><path d="M9 9a3 3 0 1 0 3 3l8 8" stroke="#777" stroke-width="2.2" fill="none"/><path d="M14 14l6 6" stroke="#e8c860" stroke-width="2.2"/></svg><svg class="ico" style="left:352.0px;top:107.0px" width="26" height="26" viewBox="0 0 24 24"><circle cx="7" cy="6" r="3.5" fill="#d9622b"/><path d="M14 9l6-6" stroke="#4a7ab9" stroke-width="2"/><rect x="3.5" y="12" width="6.5" height="8" fill="#7fb07f" stroke="#5a8a5a" stroke-width=".8"/><text x="13" y="20" font-family="Liberation Sans" font-size="10" fill="#444">a</text></svg><svg class="ico" style="left:386.5px;top:107.0px" width="5" height="24"><circle cx="1" cy="2" r=".7" fill="#b4b4b4"/><circle cx="1" cy="5" r=".7" fill="#b4b4b4"/><circle cx="1" cy="8" r=".7" fill="#b4b4b4"/><circle cx="1" cy="11" r=".7" fill="#b4b4b4"/><circle cx="1" cy="14" r=".7" fill="#b4b4b4"/><circle cx="1" cy="17" r=".7" fill="#b4b4b4"/><circle cx="1" cy="20" r=".7" fill="#b4b4b4"/><circle cx="1" cy="23" r=".7" fill="#b4b4b4"/><circle cx="4" cy="2" r=".7" fill="#b4b4b4"/><circle cx="4" cy="5" r=".7" fill="#b4b4b4"/><circle cx="4" cy="8" r=".7" fill="#b4b4b4"/><circle cx="4" cy="11" r=".7" fill="#b4b4b4"/><circle cx="4" cy="14" r=".7" fill="#b4b4b4"/><circle cx="4" cy="17" r=".7" fill="#b4b4b4"/><circle cx="4" cy="20" r=".7" fill="#b4b4b4"/><circle cx="4" cy="23" r=".7" fill="#b4b4b4"/></svg><svg class="ico" style="left:402.0px;top:107.0px" width="26" height="26" viewBox="0 0 24 24"><path d="M7 12V6.5a1.3 1.3 0 0 1 2.6 0V11V4a1.3 1.3 0 0 1 2.6 0v7V4.8a1.3 1.3 0 0 1 2.6 0V11V6.5a1.3 1.3 0 0 1 2.6 0V15c0 4-2 6.5-5.5 6.5c-3 0-4.5-1.5-6-4L5 14c-.8-1.2.6-2.4 1.6-1.4z" fill="#fff" stroke="#111" stroke-width="1.1"/></svg><svg class="ico" style="left:434.0px;top:107.0px" width="26" height="26" viewBox="0 0 24 24"><rect x="5" y="5" width="14" height="14" fill="#f7d84a" stroke="#d1aa25" stroke-width=".8"/><path d="M12 1l4 4h-2.5v4h-3V5H8zM12 23l4-4h-2.5v-4h-3v4H8zM1 12l4 4v-2.5h4v-3H5V8zM23 12l-4 4v-2.5h-4v-3h4V8z" fill="#4f86c6" stroke="#2f5f9a" stroke-width=".6"/></svg><svg class="ico" style="left:468.0px;top:107.0px" width="26" height="26" viewBox="0 0 24 24"><circle cx="14" cy="9" r="6.8" fill="#f2f2f2" stroke="#333" stroke-width="1.2"/><path d="M9.3 13.7L8 15" stroke="#000" stroke-width="2.6"/><path d="M8 15L3.5 19.5" stroke="#222" stroke-width="3.4"/><path d="M7.6 15.4L4 19" stroke="#f7d84a" stroke-width="1.8"/><path d="M10.5 9h7M14 5.5v7" stroke="#4a7ab9" stroke-width="2"/></svg><svg class="ico" style="left:501.0px;top:107.0px" width="26" height="26" viewBox="0 0 24 24"><circle cx="14" cy="9" r="6.8" fill="#f2f2f2" stroke="#333" stroke-width="1.2"/><path d="M9.3 13.7L8 15" stroke="#000" stroke-width="2.6"/><path d="M8 15L3.5 19.5" stroke="#222" stroke-width="3.4"/><path d="M7.6 15.4L4 19" stroke="#f7d84a" stroke-width="1.8"/><path d="M10.5 9h7" stroke="#4a7ab9" stroke-width="2"/></svg><svg class="ico" style="left:534.0px;top:107.0px" width="26" height="26" viewBox="0 0 24 24"><path d="M2 2h7l-2.5 2.5 3 3-2 2-3-3L2 9zM22 2v7l-2.5-2.5-3 3-2-2 3-3L15 2zM22 22h-7l2.5-2.5-3-3 2-2 3 3L22 15z" fill="#5b8ec9" stroke="#3a6aa5" stroke-width=".6"/><circle cx="12" cy="10" r="5" fill="#f4f4f4" stroke="#333" stroke-width="1.2"/><path d="M8.5 13.5L3.5 19" stroke="#222" stroke-width="3.2"/><path d="M8 14L4 18.5" stroke="#f7d84a" stroke-width="1.6"/></svg><svg class="ico" style="left:567.0px;top:107.0px" width="26" height="26" viewBox="0 0 24 24"><rect x="2" y="3" width="10" height="10" fill="#dedbd2"/><circle cx="14" cy="9" r="6.5" fill="#f4f4f4" stroke="#b9b7b0" stroke-width="1.2"/><path d="M9.5 13.5L4 19" stroke="#b9b7b0" stroke-width="3"/><path d="M14 3v12" stroke="#ccc" stroke-width=".8"/></svg><svg class="ico" style="left:600.0px;top:107.0px" width="26" height="26" viewBox="0 0 24 24"><rect x="2.5" y="3.5" width="10" height="10" fill="#fff" stroke="#444" stroke-width="1"/><circle cx="14" cy="9" r="6.8" fill="#f2f2f2" stroke="#333" stroke-width="1.2"/><path d="M9.3 13.7L8 15" stroke="#000" stroke-width="2.6"/><path d="M8 15L3.5 19.5" stroke="#222" stroke-width="3.4"/><path d="M7.6 15.4L4 19" stroke="#f7d84a" stroke-width="1.8"/><path d="M14 3v12" stroke="#aaa" stroke-width=".8"/></svg><svg class="ico" style="left:633.0px;top:107.0px" width="26" height="26" viewBox="0 0 24 24"><rect x="2.5" y="3.5" width="10" height="10" fill="#fff" stroke="#444" stroke-width="1"/><circle cx="14" cy="9" r="6.8" fill="#f2f2f2" stroke="#333" stroke-width="1.2"/><path d="M9.3 13.7L8 15" stroke="#000" stroke-width="2.6"/><path d="M8 15L3.5 19.5" stroke="#222" stroke-width="3.4"/><path d="M7.6 15.4L4 19" stroke="#f7d84a" stroke-width="1.8"/><text x="9.5" y="12" font-family="Liberation Sans" font-weight="bold" font-size="7" fill="#333">1:1</text></svg><svg class="ico" style="left:667.0px;top:107.0px" width="26" height="26" viewBox="0 0 24 24"><circle cx="14" cy="9" r="6.8" fill="#f2f2f2" stroke="#333" stroke-width="1.2"/><path d="M9.3 13.7L8 15" stroke="#000" stroke-width="2.6"/><path d="M8 15L3.5 19.5" stroke="#222" stroke-width="3.4"/><path d="M7.6 15.4L4 19" stroke="#f7d84a" stroke-width="1.8"/><rect x="13" y="13" width="9" height="9" fill="#5b8ec9"/><path d="M19.5 14.5l-4 3 4 3" stroke="#fff" stroke-width="1.6" fill="none"/></svg><svg class="ico" style="left:699.0px;top:107.0px" width="26" height="26" viewBox="0 0 24 24"><circle cx="14" cy="9" r="6.5" fill="#f4f4f4" stroke="#b9b7b0" stroke-width="1.2"/><path d="M9.5 13.5L4 19" stroke="#b9b7b0" stroke-width="3"/><rect x="13" y="13" width="9" height="9" fill="#dcdcdc"/><path d="M15.5 14.5l4 3-4 3" stroke="#fff" stroke-width="1.6" fill="none"/></svg><svg class="ico" style="left:732.0px;top:107.0px" width="26" height="26" viewBox="0 0 24 24"><path d="M4 3.5h13.5v17H6c-1.5 0-2-1-2-2z" fill="#ececec" stroke="#888" stroke-width="1"/><path d="M4 3.5c2 0 2 2 2 3v12" fill="none" stroke="#888" stroke-width="1"/><rect x="13" y="13" width="9" height="9" rx="1.5" fill="#c9a417"/><polygon points="17.50,13.90 18.30,16.11 20.62,15.70 19.10,17.50 20.62,19.30 18.30,18.89 17.50,21.10 16.70,18.89 14.38,19.30 15.90,17.50 14.38,15.70 16.70,16.11" fill="#fff"/><circle cx="17.5" cy="17.5" r="1" fill="#c9a417"/></svg><svg class="ico" style="left:765.0px;top:107.0px" width="26" height="26" viewBox="0 0 24 24"><path d="M2 14l5-9h12l3 9-8 4z" fill="#e4e4e4" stroke="#999" stroke-width=".8"/><path d="M7 5l3 9 4 4M10 14l12 0M14 5l2 9" stroke="#aaa" stroke-width=".6" fill="none"/><rect x="13" y="13" width="9" height="9" rx="1.5" fill="#c9a417"/><polygon points="17.50,13.90 18.30,16.11 20.62,15.70 19.10,17.50 20.62,19.30 18.30,18.89 17.50,21.10 16.70,18.89 14.38,19.30 15.90,17.50 14.38,15.70 16.70,16.11" fill="#fff"/><circle cx="17.5" cy="17.5" r="1" fill="#c9a417"/></svg><svg class="ico" style="left:800.0px;top:107.0px" width="26" height="26" viewBox="0 0 24 24"><path d="M3 2h7v18l-3.5-3L3 20z" fill="#5b8ec9" stroke="#3a6aa5" stroke-width=".6" transform="translate(-2,0)"/><rect x="10" y="13" width="9" height="9" rx="1.5" fill="#c9a417"/><polygon points="14.50,13.90 15.30,16.11 17.62,15.70 16.10,17.50 17.62,19.30 15.30,18.89 14.50,21.10 13.70,18.89 11.38,19.30 12.90,17.50 11.38,15.70 13.70,16.11" fill="#fff"/><circle cx="14.5" cy="17.5" r="1" fill="#c9a417"/></svg><svg class="ico" style="left:831.0px;top:107.0px" width="26" height="26" viewBox="0 0 24 24"><path d="M3.5 4.5h16v16h-14c-1 0-2-1-2-2z" fill="#e4e4e4" stroke="#888" stroke-width="1"/><path d="M13 3h3v8l-1.5-1.5L13 11z" fill="#5b8ec9"/></svg><svg class="ico" style="left:864.0px;top:107.0px" width="26" height="26" viewBox="0 0 24 24"><circle cx="12" cy="12" r="9" fill="#fff" stroke="#555" stroke-width="1.4"/><path d="M12 6v6l4 3" stroke="#444" stroke-width="1.4" fill="none"/></svg><svg class="ico" style="left:896.0px;top:107.0px" width="26" height="26" viewBox="0 0 24 24"><path d="M19 9a8 8 0 0 0-14-1" stroke="#4a86c8" stroke-width="3.2" fill="none"/><path d="M21 3v8h-8z" fill="#4a86c8"/><path d="M5 15a8 8 0 0 0 14 1" stroke="#4a86c8" stroke-width="3.2" fill="none"/><path d="M3 21v-8h8z" fill="#4a86c8"/></svg><svg class="ico" style="left:933.5px;top:107.0px" width="5" height="24"><circle cx="1" cy="2" r=".7" fill="#b4b4b4"/><circle cx="1" cy="5" r=".7" fill="#b4b4b4"/><circle cx="1" cy="8" r=".7" fill="#b4b4b4"/><circle cx="1" cy="11" r=".7" fill="#b4b4b4"/><circle cx="1" cy="14" r=".7" fill="#b4b4b4"/><circle cx="1" cy="17" r=".7" fill="#b4b4b4"/><circle cx="1" cy="20" r=".7" fill="#b4b4b4"/><circle cx="1" cy="23" r=".7" fill="#b4b4b4"/><circle cx="4" cy="2" r=".7" fill="#b4b4b4"/><circle cx="4" cy="5" r=".7" fill="#b4b4b4"/><circle cx="4" cy="8" r=".7" fill="#b4b4b4"/><circle cx="4" cy="11" r=".7" fill="#b4b4b4"/><circle cx="4" cy="14" r=".7" fill="#b4b4b4"/><circle cx="4" cy="17" r=".7" fill="#b4b4b4"/><circle cx="4" cy="20" r=".7" fill="#b4b4b4"/><circle cx="4" cy="23" r=".7" fill="#b4b4b4"/></svg><svg class="ico" style="left:945.0px;top:107.0px" width="26" height="26" viewBox="0 0 24 24"><circle cx="9" cy="9" r="7" fill="#4f86c6" stroke="#3a6aa5" stroke-width=".6"/><text x="7" y="13.5" font-family="Liberation Serif" font-style="italic" font-weight="bold" font-size="11" fill="#fff">i</text><path d="M13 12l0 10 2.5-2.5 2 4 2-1-2-4h3.5z" fill="#fff" stroke="#333" stroke-width=".9"/></svg><svg class="ico" style="left:978.0px;top:107.0px" width="26" height="26" viewBox="0 0 24 24"><rect x="3" y="4" width="18" height="16" fill="#f2f2f2" stroke="#d0d0d0" stroke-width="1"/><path d="M5 8h14M5 11h14M5 14h14M5 17h14" stroke="#d4d4d4" stroke-width="1"/></svg><svg class="ico" style="left:1011.0px;top:107.0px" width="26" height="26" viewBox="0 0 24 24"><rect x="2.5" y="4" width="19" height="16" fill="#f4f4f4" stroke="#c8c8c8" stroke-width="1"/><path d="M3 9h18M3 14h18" stroke="#ccc" stroke-width="1"/><circle cx="8" cy="7" r="1.5" fill="none" stroke="#c4c4c4"/><circle cx="12" cy="12" r="1.5" fill="none" stroke="#c4c4c4"/><circle cx="16" cy="17" r="1.5" fill="none" stroke="#c4c4c4"/></svg><svg class="ico" style="left:1045.0px;top:107.0px" width="26" height="26" viewBox="0 0 24 24"><g transform="translate(12 12)"><circle r="6.5" fill="none" stroke="#5b8ec9" stroke-width="3.2" stroke-dasharray="2.6 2.5"/><circle r="5.2" fill="#5b8ec9"/><circle r="2.6" fill="#e2e2e2"/></g><circle cx="12" cy="12" r="8.6" fill="none" stroke="#5b8ec9" stroke-width="2.2" stroke-dasharray="2.8 2.6"/></svg><svg class="ico" style="left:1078.0px;top:107.0px" width="26" height="26" viewBox="0 0 24 24"><path d="M5 3h14v4h-2l-1-2H9.5l5 7-5.5 7h7l1-2h2.3v4H4.5l6.5-9z" fill="#9c1fa8"/></svg><svg class="ico" style="left:1111.0px;top:107.0px" width="26" height="26" viewBox="0 0 24 24"><rect x="2" y="11" width="20" height="7" fill="#e8e8e8" stroke="#555" stroke-width="1"/><path d="M5 11v3M8 11v2M11 11v3M14 11v2M17 11v3M20 11v2" stroke="#555" stroke-width=".8"/><path d="M3 6h18M3 4v4M21 4v4" stroke="#2a4a7a" stroke-width="1.4"/></svg><svg class="ico" style="left:1156.0px;top:107.0px" width="26" height="26" viewBox="0 0 24 24"><path d="M3 3h18a1.5 1.5 0 0 1 1.5 1.5v8a1.5 1.5 0 0 1-1.5 1.5H11l-5 5v-5H3a1.5 1.5 0 0 1-1.5-1.5v-8A1.5 1.5 0 0 1 3 3z" fill="#f8e66a" stroke="#c9b23a" stroke-width=".8"/><circle cx="5" cy="19" r="3" fill="#6da36d" stroke="#3c6b3c" stroke-width=".8"/></svg><svg class="ico" style="left:1189.0px;top:107.0px" width="26" height="26" viewBox="0 0 24 24"><circle cx="11" cy="11" r="8" fill="none" stroke="#d4d4d4" stroke-width="2.4" stroke-dasharray="2.4 2"/><circle cx="11" cy="11" r="4" fill="#dcdcdc"/><path d="M12 12l0 10 2.5-2.5 2 4 2-1-2-4h3.5z" fill="#f4f4f4" stroke="#c8c8c8" stroke-width=".9"/></svg><svg class="ico" style="left:1235.0px;top:107.0px" width="26" height="26" viewBox="0 0 24 24"><path d="M2.5 3.5h19v13h-13l-5 5v-5h-1z" fill="#fff" stroke="#555" stroke-width="1"/><text x="7.2" y="14" font-family="Liberation Serif" font-weight="bold" font-size="11" fill="#222">T</text></svg><svg class="ico" style="left:1141px;top:117px" width="8" height="5"><path d="M0 0h8l-4 4.5z" fill="#555"/></svg><svg class="ico" style="left:1219px;top:117px" width="8" height="5"><path d="M0 0h8l-4 4.5z" fill="#aaa"/></svg><svg class="ico" style="left:1265px;top:117px" width="8" height="5"><path d="M0 0h8l-4 4.5z" fill="#555"/></svg><svg class="ico" style="left:177.5px;top:147.0px" width="5" height="24"><circle cx="1" cy="2" r=".7" fill="#b4b4b4"/><circle cx="1" cy="5" r=".7" fill="#b4b4b4"/><circle cx="1" cy="8" r=".7" fill="#b4b4b4"/><circle cx="1" cy="11" r=".7" fill="#b4b4b4"/><circle cx="1" cy="14" r=".7" fill="#b4b4b4"/><circle cx="1" cy="17" r=".7" fill="#b4b4b4"/><circle cx="1" cy="20" r=".7" fill="#b4b4b4"/><circle cx="1" cy="23" r=".7" fill="#b4b4b4"/><circle cx="4" cy="2" r=".7" fill="#b4b4b4"/><circle cx="4" cy="5" r=".7" fill="#b4b4b4"/><circle cx="4" cy="8" r=".7" fill="#b4b4b4"/><circle cx="4" cy="11" r=".7" fill="#b4b4b4"/><circle cx="4" cy="14" r=".7" fill="#b4b4b4"/><circle cx="4" cy="17" r=".7" fill="#b4b4b4"/><circle cx="4" cy="20" r=".7" fill="#b4b4b4"/><circle cx="4" cy="23" r=".7" fill="#b4b4b4"/></svg><svg class="ico" style="left:188.0px;top:147.0px" width="26" height="26" viewBox="0 0 24 24"><rect x="2" y="7" width="13" height="13" fill="#de6a3b" transform="rotate(-12 8 13)"/><rect x="5" y="5" width="12" height="13" fill="#f1c232" transform="rotate(-6 11 11)"/><rect x="8" y="2" width="13" height="13" fill="#5b8ec9" stroke="#3a6aa5" stroke-width=".6" transform="rotate(8 14 8)"/><rect x="14" y="14" width="9" height="9" rx="1.5" fill="#4c9f5a"/><path d="M18.5 15.5v6M15.5 18.5h6" stroke="#fff" stroke-width="1.8"/></svg><svg class="ico" style="left:221.0px;top:147.0px" width="26" height="26" viewBox="0 0 24 24"><path d="M2 10l6 4v8l-6-4z" fill="#c9a417"/><path d="M8 14h13v8H8z" fill="#f4d84c" stroke="#b89212" stroke-width=".6"/><path d="M2 10l5-4h13l1 8H8z" fill="#e8c640"/><circle cx="13" cy="7.5" r="5.5" fill="#5b8ec9" stroke="#2f5f9a" stroke-width=".7"/><path d="M10 6c2-1 3 1 5 0M10.5 9c1.5.5 3-.5 4.5.5" stroke="#2f5f9a" stroke-width="1" fill="none"/><rect x="14" y="14" width="9" height="9" rx="1.5" fill="#c9a417"/><polygon points="18.50,14.90 19.30,17.11 21.62,16.70 20.10,18.50 21.62,20.30 19.30,19.89 18.50,22.10 17.70,19.89 15.38,20.30 16.90,18.50 15.38,16.70 17.70,17.11" fill="#fff"/><circle cx="18.5" cy="18.5" r="1" fill="#c9a417"/></svg><svg class="ico" style="left:254.0px;top:147.0px" width="26" height="26" viewBox="0 0 24 24"><path d="M3 4l7 15 6-15 5 0" stroke="#222" stroke-width="1.2" fill="none"/><circle cx="3" cy="4" r="1.3" fill="#fff" stroke="#222"/><circle cx="10" cy="19" r="1.3" fill="#fff" stroke="#222"/><circle cx="16" cy="4" r="1.3" fill="#fff" stroke="#222"/><circle cx="21" cy="4" r="1.3" fill="#fff" stroke="#222"/><rect x="14" y="14" width="9" height="9" rx="1.5" fill="#c9a417"/><polygon points="18.50,14.90 19.30,17.11 21.62,16.70 20.10,18.50 21.62,20.30 19.30,19.89 18.50,22.10 17.70,19.89 15.38,20.30 16.90,18.50 15.38,16.70 17.70,17.11" fill="#fff"/><circle cx="18.5" cy="18.5" r="1" fill="#c9a417"/></svg><svg class="ico" style="left:287.0px;top:147.0px" width="26" height="26" viewBox="0 0 24 24"><path d="M3 22C5 12 11 4 21 2c-1 8-7 15-14 16z" fill="#8fb3dd" stroke="#3a6aa5" stroke-width="1"/><path d="M3 22L17 6" stroke="#3a6aa5" stroke-width=".8"/><rect x="14" y="14" width="9" height="9" rx="1.5" fill="#c9a417"/><polygon points="18.50,14.90 19.30,17.11 21.62,16.70 20.10,18.50 21.62,20.30 19.30,19.89 18.50,22.10 17.70,19.89 15.38,20.30 16.90,18.50 15.38,16.70 17.70,17.11" fill="#fff"/><circle cx="18.5" cy="18.5" r="1" fill="#c9a417"/></svg><svg class="ico" style="left:321.0px;top:147.0px" width="26" height="26" viewBox="0 0 24 24"><rect x="3" y="7" width="16" height="10" rx="1" fill="#5b8ec9" stroke="#2f5f9a" stroke-width=".7"/><path d="M5 4v3M8 4v3M11 4v3M14 4v3M17 4v3M5 17v3M8 17v3M11 17v3M14 17v3M17 17v3" stroke="#333" stroke-width="1"/><rect x="14" y="14" width="9" height="9" rx="1.5" fill="#c9a417"/><polygon points="18.50,14.90 19.30,17.11 21.62,16.70 20.10,18.50 21.62,20.30 19.30,19.89 18.50,22.10 17.70,19.89 15.38,20.30 16.90,18.50 15.38,16.70 17.70,17.11" fill="#fff"/><circle cx="18.5" cy="18.5" r="1" fill="#c9a417"/></svg><div class="a" style="left:355px;top:148.0px;width:1px;height:22px;background:#d0d0d0"></div><svg class="ico" style="left:360.0px;top:147.0px" width="26" height="26" viewBox="0 0 24 24"><rect x="2" y="2" width="19" height="19" rx="1.5" fill="#b8cde6" stroke="#3a6aa5" stroke-width="1"/><path d="M4 4l7 14 6-14" stroke="#333" stroke-width="1.2" fill="none"/><circle cx="4" cy="4" r="1.3" fill="#fff" stroke="#333"/><circle cx="11" cy="18" r="1.3" fill="#fff" stroke="#333"/><circle cx="17" cy="4" r="1.3" fill="#fff" stroke="#333"/><rect x="14" y="14" width="9" height="9" rx="1.5" fill="#c9a417"/><polygon points="18.50,14.90 19.30,17.11 21.62,16.70 20.10,18.50 21.62,20.30 19.30,19.89 18.50,22.10 17.70,19.89 15.38,20.30 16.90,18.50 15.38,16.70 17.70,17.11" fill="#fff"/><circle cx="18.5" cy="18.5" r="1" fill="#c9a417"/></svg><div class="a" style="left:393px;top:148.0px;width:1px;height:22px;background:#d0d0d0"></div><svg class="ico" style="left:405.5px;top:147.0px" width="5" height="24"><circle cx="1" cy="2" r=".7" fill="#b4b4b4"/><circle cx="1" cy="5" r=".7" fill="#b4b4b4"/><circle cx="1" cy="8" r=".7" fill="#b4b4b4"/><circle cx="1" cy="11" r=".7" fill="#b4b4b4"/><circle cx="1" cy="14" r=".7" fill="#b4b4b4"/><circle cx="1" cy="17" r=".7" fill="#b4b4b4"/><circle cx="1" cy="20" r=".7" fill="#b4b4b4"/><circle cx="1" cy="23" r=".7" fill="#b4b4b4"/><circle cx="4" cy="2" r=".7" fill="#b4b4b4"/><circle cx="4" cy="5" r=".7" fill="#b4b4b4"/><circle cx="4" cy="8" r=".7" fill="#b4b4b4"/><circle cx="4" cy="11" r=".7" fill="#b4b4b4"/><circle cx="4" cy="14" r=".7" fill="#b4b4b4"/><circle cx="4" cy="17" r=".7" fill="#b4b4b4"/><circle cx="4" cy="20" r=".7" fill="#b4b4b4"/><circle cx="4" cy="23" r=".7" fill="#b4b4b4"/></svg><svg class="ico" style="left:416.0px;top:147.0px" width="26" height="26" viewBox="0 0 24 24"><path d="M3 20l2-5 9-11 3 2.5-9 11z" fill="#dedcd6" stroke="#cdcac2" stroke-width=".8"/><path d="M7 21l2-5 9-11 3 2.5-9 11z" fill="#e2e0da" stroke="#cdcac2" stroke-width=".8"/></svg><svg class="ico" style="left:448.0px;top:147.0px" width="26" height="26" viewBox="0 0 24 24"><path d="M5 21l2-6 10-12 3 2.5-10 12z" fill="#dedcd6" stroke="#cdcac2" stroke-width=".8"/></svg><svg class="ico" style="left:481.0px;top:147.0px" width="26" height="26" viewBox="0 0 24 24"><rect x="2" y="4" width="16" height="16" rx="2" fill="#dedcd6" stroke="#cdcac2"/><rect x="5" y="5" width="10" height="6" fill="#f4f4f4"/><path d="M12 21l1-4 7-8 2 2-7 8z" fill="#e4e2dc" stroke="#cdcac2" stroke-width=".8"/></svg><svg class="ico" style="left:515.0px;top:147.0px" width="26" height="26" viewBox="0 0 24 24"><circle cx="12" cy="4" r="2.2" fill="#dcdcdc"/><circle cx="19" cy="8" r="2.2" fill="#dcdcdc"/><circle cx="5" cy="12" r="2.2" fill="#dcdcdc"/><rect x="13" y="13" width="9" height="9" rx="1.5" fill="#d8d6cf"/><polygon points="17.50,13.90 18.30,16.11 20.62,15.70 19.10,17.50 20.62,19.30 18.30,18.89 17.50,21.10 16.70,18.89 14.38,19.30 15.90,17.50 14.38,15.70 16.70,16.11" fill="#fff"/><circle cx="17.5" cy="17.5" r="1" fill="#d8d6cf"/></svg><svg class="ico" style="left:550.0px;top:147.0px" width="26" height="26" viewBox="0 0 24 24"><rect x="3" y="2" width="5" height="5" fill="none" stroke="#cfcfcf"/><path d="M8 4h9M5 8L2 22" stroke="#cfcfcf" stroke-width="1"/><path d="M9 12l9 9M18 12l-8 9" stroke="#d4d2ca" stroke-width="2.4"/></svg><svg class="ico" style="left:593.0px;top:147.0px" width="26" height="26" viewBox="0 0 24 24"><rect x="3" y="4" width="16" height="4.5" fill="#dedcd2"/><rect x="3" y="10" width="16" height="4.5" fill="#dedcd2"/><rect x="3" y="16" width="16" height="4.5" fill="#dedcd2"/><path d="M10 21l2-5 8-10 2 2-8 10z" fill="#e8e6e0" stroke="#cfcdc6" stroke-width=".7"/></svg><svg class="ico" style="left:625.0px;top:147.0px" width="26" height="26" viewBox="0 0 24 24"><path d="M3 5h18M9 5V3h6v2" stroke="#d6c9c4" stroke-width="1.6" fill="none"/><path d="M5 7h14l-1 15H6z" fill="#e2d6d2" stroke="#d0c2bd" stroke-width=".8"/><path d="M9 9v11M12 9v11M15 9v11" stroke="#f2f2f2" stroke-width="1.2"/></svg><svg class="ico" style="left:658.0px;top:147.0px" width="26" height="26" viewBox="0 0 24 24"><circle cx="18" cy="17" r="2.5" fill="none" stroke="#cfc3c3" stroke-width="1.4"/><circle cx="18" cy="7" r="2.5" fill="none" stroke="#cfc3c3" stroke-width="1.4"/><path d="M2 6l14 9M2 17l14-9" stroke="#d8d8d8" stroke-width="1.3"/></svg><svg class="ico" style="left:691.0px;top:147.0px" width="26" height="26" viewBox="0 0 24 24"><path d="M9 3h7l3 3v11H9z" fill="#f6f6f6" stroke="#d0d0d0"/><path d="M4 7h8l3 3v12H4z" fill="#f8f8f8" stroke="#d0d0d0"/><path d="M6 13h7M6 15h7M6 17h7M6 19h7" stroke="#d6d6d6" stroke-width=".8"/></svg><svg class="ico" style="left:725.0px;top:147.0px" width="26" height="26" viewBox="0 0 24 24"><rect x="4" y="4" width="15" height="18" fill="#f6f6f6" stroke="#d0d0d0"/><rect x="8" y="2" width="7" height="4" fill="#e4e4e4" stroke="#cfcfcf" stroke-width=".6"/><path d="M7 11h9M7 14h9M7 17h9" stroke="#d6d6d6" stroke-width=".8"/></svg><svg class="ico" style="left:758.0px;top:147.0px" width="26" height="26" viewBox="0 0 24 24"><path d="M4 10l6-6v3.5c6 0 9 3 9 7s-3 6-6 6c2-1 3-3 3-5s-2-4-6-4V15z" fill="#dcd6d4"/></svg><svg class="ico" style="left:791.0px;top:147.0px" width="26" height="26" viewBox="0 0 24 24"><path d="M20 10l-6-6v3.5c-6 0-9 3-9 7s3 6 6 6c-2-1-3-3-3-5s2-4 6-4V15z" fill="#dcd6d4"/></svg><svg class="ico" style="left:427px;top:165px" width="8" height="5"><path d="M0 0h8l-4 4.5z" fill="#aaa"/></svg><svg class="ico" style="left:578px;top:157px" width="8" height="5"><path d="M0 0h8l-4 4.5z" fill="#aaa"/></svg><svg class="ico" style="left:828.5px;top:147.0px" width="5" height="24"><circle cx="1" cy="2" r=".7" fill="#b4b4b4"/><circle cx="1" cy="5" r=".7" fill="#b4b4b4"/><circle cx="1" cy="8" r=".7" fill="#b4b4b4"/><circle cx="1" cy="11" r=".7" fill="#b4b4b4"/><circle cx="1" cy="14" r=".7" fill="#b4b4b4"/><circle cx="1" cy="17" r=".7" fill="#b4b4b4"/><circle cx="1" cy="20" r=".7" fill="#b4b4b4"/><circle cx="1" cy="23" r=".7" fill="#b4b4b4"/><circle cx="4" cy="2" r=".7" fill="#b4b4b4"/><circle cx="4" cy="5" r=".7" fill="#b4b4b4"/><circle cx="4" cy="8" r=".7" fill="#b4b4b4"/><circle cx="4" cy="11" r=".7" fill="#b4b4b4"/><circle cx="4" cy="14" r=".7" fill="#b4b4b4"/><circle cx="4" cy="17" r=".7" fill="#b4b4b4"/><circle cx="4" cy="20" r=".7" fill="#b4b4b4"/><circle cx="4" cy="23" r=".7" fill="#b4b4b4"/></svg><svg class="ico" style="left:839.0px;top:147.0px" width="26" height="26" viewBox="0 0 24 24"><path d="M1 12l4-5h16v10H5z" fill="#deded6" stroke="#deded6" stroke-width=".5"/><text x="6" y="15" font-family="Liberation Sans" font-weight="bold" font-size="7.5" fill="#fff">abc</text></svg><svg class="ico" style="left:872.0px;top:147.0px" width="26" height="26" viewBox="0 0 24 24"><circle cx="10" cy="8" r="5" fill="#ddd"/><rect x="12" y="12" width="6" height="10" fill="#d8d2c8"/><rect x="17" y="16" width="4" height="6" fill="#c8c8c8"/></svg><div class="a" style="left:907px;top:148.0px;width:1px;height:22px;background:#d0d0d0"></div><svg class="ico" style="left:913.0px;top:147.0px" width="26" height="26" viewBox="0 0 24 24"><path d="M1 9l4-5h12v10H5z" fill="#cfe0f5" stroke="#4a7ab9" stroke-width="1"/><text x="5.5" y="12" font-family="Liberation Sans" font-weight="bold" font-size="7.5" fill="#111">ab</text><path d="M14 10v6" stroke="#333" stroke-width="1"/><circle cx="17" cy="18" r="4" fill="#b01818"/></svg><svg class="ico" style="left:945.0px;top:147.0px" width="26" height="26" viewBox="0 0 24 24"><path d="M1 12l4-5h17v10H5z" fill="#fff" stroke="#e02020" stroke-width="1.4"/><text x="6" y="15" font-family="Liberation Sans" font-weight="bold" font-size="8" fill="#e02020">abc</text></svg><div class="a" style="left:980px;top:148.0px;width:1px;height:22px;background:#d0d0d0"></div><svg class="ico" style="left:986.0px;top:147.0px" width="26" height="26" viewBox="0 0 24 24"><path d="M1 12l4-5h16v10H5z" fill="#deded6" stroke="#deded6" stroke-width=".5"/><text x="6" y="15" font-family="Liberation Sans" font-weight="bold" font-size="7.5" fill="#fff">abc</text><circle cx="17" cy="18" r="3.5" fill="#d8d8d8"/></svg><svg class="ico" style="left:1019.0px;top:147.0px" width="26" height="26" viewBox="0 0 24 24"><path d="M1 12l4-5h16v10H5z" fill="#deded6" stroke="#deded6" stroke-width=".5"/><text x="6" y="15" font-family="Liberation Sans" font-weight="bold" font-size="7.5" fill="#fff">abc</text><path d="M10 19c3-3 8-3 11 0c-3 3-8 3-11 0z" fill="#f0f0f0" stroke="#cfcfcf"/></svg><svg class="ico" style="left:1052.0px;top:147.0px" width="26" height="26" viewBox="0 0 24 24"><path d="M1 12l4-5h16v10H5z" fill="#deded6" stroke="#deded6" stroke-width=".5"/><text x="6" y="15" font-family="Liberation Sans" font-weight="bold" font-size="7.5" fill="#fff">abc</text><rect x="13" y="15" width="8" height="8" rx="1" fill="#d6d6d6"/></svg><svg class="ico" style="left:1085.0px;top:147.0px" width="26" height="26" viewBox="0 0 24 24"><path d="M1 12l4-5h16v10H5z" fill="#deded6" stroke="#deded6" stroke-width=".5"/><text x="6" y="15" font-family="Liberation Sans" font-weight="bold" font-size="7.5" fill="#fff">abc</text><rect x="13" y="15" width="8" height="8" rx="1" fill="#d6d6d6"/></svg><svg class="ico" style="left:1118.0px;top:147.0px" width="26" height="26" viewBox="0 0 24 24"><path d="M1 12l4-5h16v10H5z" fill="#deded6" stroke="#deded6" stroke-width=".5"/><text x="6" y="15" font-family="Liberation Sans" font-weight="bold" font-size="7.5" fill="#fff">abc</text><rect x="13" y="15" width="8" height="8" rx="1" fill="#d6d6d6"/></svg><svg class="ico" style="left:1155.5px;top:147.0px" width="5" height="24"><circle cx="1" cy="2" r=".7" fill="#b4b4b4"/><circle cx="1" cy="5" r=".7" fill="#b4b4b4"/><circle cx="1" cy="8" r=".7" fill="#b4b4b4"/><circle cx="1" cy="11" r=".7" fill="#b4b4b4"/><circle cx="1" cy="14" r=".7" fill="#b4b4b4"/><circle cx="1" cy="17" r=".7" fill="#b4b4b4"/><circle cx="1" cy="20" r=".7" fill="#b4b4b4"/><circle cx="1" cy="23" r=".7" fill="#b4b4b4"/><circle cx="4" cy="2" r=".7" fill="#b4b4b4"/><circle cx="4" cy="5" r=".7" fill="#b4b4b4"/><circle cx="4" cy="8" r=".7" fill="#b4b4b4"/><circle cx="4" cy="11" r=".7" fill="#b4b4b4"/><circle cx="4" cy="14" r=".7" fill="#b4b4b4"/><circle cx="4" cy="17" r=".7" fill="#b4b4b4"/><circle cx="4" cy="20" r=".7" fill="#b4b4b4"/><circle cx="4" cy="23" r=".7" fill="#b4b4b4"/></svg><svg class="ico" style="left:1168.0px;top:147.0px" width="26" height="26" viewBox="0 0 24 24"><circle cx="12" cy="10" r="9" fill="#4f86c6" stroke="#2f5f9a" stroke-width=".8"/><path d="M5 7c3 1 4-2 7-1s4 3 7 1M5 12c3 0 5 2 7 1s4-2 7 0" stroke="#1e4a80" stroke-width="1.2" fill="none"/><circle cx="7" cy="19" r="3.6" fill="#111"/><circle cx="17" cy="19" r="3.6" fill="#111"/><rect x="9" y="15" width="6" height="3" fill="#111"/><circle cx="7" cy="19" r="1.6" fill="#fff"/><circle cx="17" cy="19" r="1.6" fill="#fff"/></svg><svg class="ico" style="left:1204.5px;top:147.0px" width="5" height="24"><circle cx="1" cy="2" r=".7" fill="#b4b4b4"/><circle cx="1" cy="5" r=".7" fill="#b4b4b4"/><circle cx="1" cy="8" r=".7" fill="#b4b4b4"/><circle cx="1" cy="11" r=".7" fill="#b4b4b4"/><circle cx="1" cy="14" r=".7" fill="#b4b4b4"/><circle cx="1" cy="17" r=".7" fill="#b4b4b4"/><circle cx="1" cy="20" r=".7" fill="#b4b4b4"/><circle cx="1" cy="23" r=".7" fill="#b4b4b4"/><circle cx="4" cy="2" r=".7" fill="#b4b4b4"/><circle cx="4" cy="5" r=".7" fill="#b4b4b4"/><circle cx="4" cy="8" r=".7" fill="#b4b4b4"/><circle cx="4" cy="11" r=".7" fill="#b4b4b4"/><circle cx="4" cy="14" r=".7" fill="#b4b4b4"/><circle cx="4" cy="17" r=".7" fill="#b4b4b4"/><circle cx="4" cy="20" r=".7" fill="#b4b4b4"/><circle cx="4" cy="23" r=".7" fill="#b4b4b4"/></svg><svg class="ico" style="left:1216.0px;top:147.0px" width="26" height="26" viewBox="0 0 24 24"><path d="M12 2c-5 0-5 2-5 3v3h5v1H5c-2 0-3 2-3 4.5S3 18 5 18h2v-3c0-2 1.5-3 3.5-3h4c1.5 0 3-1 3-3V5c0-1.5-1.5-3-5.5-3z" fill="#3e78b2"/><path d="M12.5 22c5 0 5-2 5-3v-3h-5v-1h7c2 0 3-2 3-4.5S21.5 6 19.5 6h-2v3c0 2-1.5 3-3.5 3h-4c-1.5 0-3 1-3 3v4c0 1.5 1.5 3 5.5 3z" fill="#f2cf44"/><path d="M17 19l4 2-4 2" stroke="#333" stroke-width="1" fill="none"/></svg><svg class="ico" style="left:1253.5px;top:147.0px" width="5" height="24"><circle cx="1" cy="2" r=".7" fill="#b4b4b4"/><circle cx="1" cy="5" r=".7" fill="#b4b4b4"/><circle cx="1" cy="8" r=".7" fill="#b4b4b4"/><circle cx="1" cy="11" r=".7" fill="#b4b4b4"/><circle cx="1" cy="14" r=".7" fill="#b4b4b4"/><circle cx="1" cy="17" r=".7" fill="#b4b4b4"/><circle cx="1" cy="20" r=".7" fill="#b4b4b4"/><circle cx="1" cy="23" r=".7" fill="#b4b4b4"/><circle cx="4" cy="2" r=".7" fill="#b4b4b4"/><circle cx="4" cy="5" r=".7" fill="#b4b4b4"/><circle cx="4" cy="8" r=".7" fill="#b4b4b4"/><circle cx="4" cy="11" r=".7" fill="#b4b4b4"/><circle cx="4" cy="14" r=".7" fill="#b4b4b4"/><circle cx="4" cy="17" r=".7" fill="#b4b4b4"/><circle cx="4" cy="20" r=".7" fill="#b4b4b4"/><circle cx="4" cy="23" r=".7" fill="#b4b4b4"/></svg><svg class="ico" style="left:1265.0px;top:147.0px" width="26" height="26" viewBox="0 0 24 24"><rect x="3" y="2" width="18" height="21" fill="#5b8ec9" stroke="#2a3f5a" stroke-width="1"/><rect x="3" y="2" width="3" height="21" fill="#2a3f5a"/><text x="10" y="16" font-family="Liberation Sans" font-size="11" fill="#fff">?</text></svg><svg class="ico" style="left:1302.5px;top:147.0px" width="5" height="24"><circle cx="1" cy="2" r=".7" fill="#b4b4b4"/><circle cx="1" cy="5" r=".7" fill="#b4b4b4"/><circle cx="1" cy="8" r=".7" fill="#b4b4b4"/><circle cx="1" cy="11" r=".7" fill="#b4b4b4"/><circle cx="1" cy="14" r=".7" fill="#b4b4b4"/><circle cx="1" cy="17" r=".7" fill="#b4b4b4"/><circle cx="1" cy="20" r=".7" fill="#b4b4b4"/><circle cx="1" cy="23" r=".7" fill="#b4b4b4"/><circle cx="4" cy="2" r=".7" fill="#b4b4b4"/><circle cx="4" cy="5" r=".7" fill="#b4b4b4"/><circle cx="4" cy="8" r=".7" fill="#b4b4b4"/><circle cx="4" cy="11" r=".7" fill="#b4b4b4"/><circle cx="4" cy="14" r=".7" fill="#b4b4b4"/><circle cx="4" cy="17" r=".7" fill="#b4b4b4"/><circle cx="4" cy="20" r=".7" fill="#b4b4b4"/><circle cx="4" cy="23" r=".7" fill="#b4b4b4"/></svg><svg class="ico" style="left:177.5px;top:186.0px" width="5" height="24"><circle cx="1" cy="2" r=".7" fill="#b4b4b4"/><circle cx="1" cy="5" r=".7" fill="#b4b4b4"/><circle cx="1" cy="8" r=".7" fill="#b4b4b4"/><circle cx="1" cy="11" r=".7" fill="#b4b4b4"/><circle cx="1" cy="14" r=".7" fill="#b4b4b4"/><circle cx="1" cy="17" r=".7" fill="#b4b4b4"/><circle cx="1" cy="20" r=".7" fill="#b4b4b4"/><circle cx="1" cy="23" r=".7" fill="#b4b4b4"/><circle cx="4" cy="2" r=".7" fill="#b4b4b4"/><circle cx="4" cy="5" r=".7" fill="#b4b4b4"/><circle cx="4" cy="8" r=".7" fill="#b4b4b4"/><circle cx="4" cy="11" r=".7" fill="#b4b4b4"/><circle cx="4" cy="14" r=".7" fill="#b4b4b4"/><circle cx="4" cy="17" r=".7" fill="#b4b4b4"/><circle cx="4" cy="20" r=".7" fill="#b4b4b4"/><circle cx="4" cy="23" r=".7" fill="#b4b4b4"/></svg><svg class="ico" style="left:188.0px;top:186.0px" width="26" height="26" viewBox="0 0 24 24"><rect x="2" y="2" width="15" height="15" fill="#dedcd2" stroke="#cfcdc4" stroke-dasharray="1.5 1"/><path d="M10 9l0 12 3-3 2.5 4.5 2-1-2.5-4.5h4z" fill="#f2f2f2" stroke="#c8c8c8" stroke-width=".8"/></svg><svg class="ico" style="left:218px;top:196px" width="8" height="5"><path d="M0 0h8l-4 4.5z" fill="#aaa"/></svg><svg class="ico" style="left:233.0px;top:186.0px" width="26" height="26" viewBox="0 0 24 24"><rect x="2" y="3" width="13" height="13" fill="#f4f4f4" stroke="#d4d4d4"/><rect x="6" y="8" width="15" height="14" fill="#e2e0d8"/><path d="M4 7h9M4 10h9" stroke="#d0d0d0"/></svg><svg class="ico" style="left:263px;top:196px" width="8" height="5"><path d="M0 0h8l-4 4.5z" fill="#aaa"/></svg><svg class="ico" style="left:278.0px;top:186.0px" width="26" height="26" viewBox="0 0 24 24"><rect x="2" y="2" width="13" height="13" fill="#f7d84a" stroke="#c9a020" stroke-width=".8"/><rect x="6" y="6" width="13" height="13" fill="#f7d84a" stroke="#c9a020" stroke-width=".8"/><rect x="13" y="14" width="9" height="9" rx="1.5" fill="#d42a2a"/><circle cx="17.5" cy="18.5" r="3" fill="none" stroke="#fff" stroke-width="1"/><path d="M15.5 20.5l4-4" stroke="#fff" stroke-width="1"/></svg><svg class="ico" style="left:308px;top:196px" width="8" height="5"><path d="M0 0h8l-4 4.5z" fill="#555"/></svg><svg class="ico" style="left:323.0px;top:186.0px" width="26" height="26" viewBox="0 0 24 24"><rect x="2" y="2" width="14" height="14" fill="#f7d84a" stroke="#c9a020" stroke-width=".8"/><path d="M18 23c-2-3-3.5-5-3.5-7a3.5 3.5 0 0 1 7 0c0 2-1.5 4-3.5 7z" fill="#6f93b8"/><circle cx="18" cy="16" r="1.2" fill="#fff"/></svg>
<div class="a" style="left:173px;top:268px;width:293px;height:332px;background:#fff;border:1px solid #adadad"></div>
<div class="a" style="left:173px;top:656px;width:293px;height:261px;background:#fff;border:1px solid #adadad"></div>
<div class="a" style="left:472px;top:218px;width:992px;height:699px;background:#fff;border:1px solid #adadad"></div>
<div class="a" style="left:1470px;top:290px;width:238px;height:627px;background:#fff;border:1px solid #adadad;border-right:none"></div>
<div class="a" style="left:1471px;top:269px;width:237px;height:22px;background:#fff;border:1px solid #adadad;border-radius:3px"></div>
<div class="a" style="left:176px;top:920px;width:200px;height:22px;background:#fff;border:1px solid #adadad;border-radius:3px"></div>
<div class="t" style="left:176px;top:222px;">Browser</div><div class="a" style="left:439px;top:222px;width:11px;height:11px;border:1px solid #777;border-radius:3px"></div><svg class="ico" style="left:440px;top:223px" width="9" height="9" viewBox="0 0 9 9"><rect x="1.5" y="3.5" width="4" height="4" fill="none" stroke="#555" stroke-width="1"/><path d="M3.5 3.5V1.5h4v4H5.5" fill="none" stroke="#555" stroke-width="1"/></svg><div class="a" style="left:453px;top:222px;width:11px;height:11px;border:1px solid #777;border-radius:3px"></div><svg class="ico" style="left:454px;top:223px" width="9" height="9" viewBox="0 0 9 9"><path d="M1.5 1.5l6 6M7.5 1.5l-6 6" stroke="#555" stroke-width="1.8"/></svg><svg class="ico" style="left:178px;top:243px" width="18" height="18" viewBox="0 0 18 18"><rect x="1.5" y="1.5" width="12" height="12" fill="#f0f0f0" stroke="#6a6a6a" stroke-width="1"/><circle cx="13.5" cy="13.5" r="3.2" fill="#7cb87c" stroke="#3f8a3f" stroke-width="1"/></svg><svg class="ico" style="left:203px;top:243px" width="18" height="18" viewBox="0 0 18 18"><path d="M14 6.5A6 6 0 0 0 4 5" stroke="#4a86c8" stroke-width="2.6" fill="none"/><path d="M16 2v6h-6z" fill="#4a86c8"/><path d="M4 11.5A6 6 0 0 0 14 13" stroke="#4a86c8" stroke-width="2.6" fill="none"/><path d="M2 16v-6h6z" fill="#4a86c8"/></svg><svg class="ico" style="left:228px;top:243px" width="18" height="18" viewBox="0 0 18 18"><path d="M1.5 2h15l-5.5 7v8l-4-2V9z" fill="#5b8ec9" stroke="#3a6aa5" stroke-width=".6"/><rect x="1.5" y="1.5" width="15" height="2" fill="#f2d84a"/></svg><svg class="ico" style="left:254px;top:243px" width="18" height="18" viewBox="0 0 18 18"><path d="M2 3v12M2 6h4M2 12h4" stroke="#999" stroke-width="1"/><rect x="4" y="5" width="3" height="3" fill="#f08a24"/><rect x="4" y="11" width="3" height="3" fill="#f08a24"/><path d="M12 1l5 5h-3v9h-4V6H7z" fill="#4a7ab9" stroke="#2f5f9a" stroke-width=".5"/></svg><svg class="ico" style="left:279px;top:243px" width="18" height="18" viewBox="0 0 18 18"><circle cx="9" cy="9" r="7.5" fill="#5b8ec9" stroke="#3a6aa5" stroke-width=".6"/><text x="7" y="13.5" font-family="Liberation Serif" font-style="italic" font-weight="bold" font-size="11" fill="#fff">i</text></svg><svg class="ico" style="left:192px;top:270px" width="16" height="16" viewBox="0 0 16 16"><path d="M8 .8l2.2 4.6 5 .6-3.7 3.4 1 5-4.5-2.5-4.5 2.5 1-5L.8 6l5-.6z" fill="#fbe64a" stroke="#d8b820" stroke-width=".8"/></svg><div class="t" style="left:214px;top:272px;">Favorites</div><svg class="ico" style="left:178px;top:294px" width="8" height="5" viewBox="0 0 8 5"><path d="M0 0h8l-4 4z" fill="#555"/></svg><svg class="ico" style="left:192px;top:288px" width="16" height="16" viewBox="0 0 16 16"><path d="M2.5 1.5h11v13h-10c-.6 0-1-.5-1-1z" fill="#ececec" stroke="#9a9a9a" stroke-width="1"/><path d="M9 1h2.5v5l-1.25-1.2L9 6z" fill="#5b8ec9"/></svg><div class="t" style="left:214px;top:290px;">Spatial Bookmarks</div><svg class="ico" style="left:208px;top:306px" width="16" height="16" viewBox="0 0 16 16"><path d="M1.5 2.5h5l1.5 1.5h6.5v10h-13z" fill="#f2f2f2" stroke="#8a8a8a" stroke-width="1"/></svg><div class="t" style="left:230px;top:308px;">Project Bookmarks</div><svg class="ico" style="left:208px;top:324px" width="16" height="16" viewBox="0 0 16 16"><path d="M1.5 2.5h5l1.5 1.5h6.5v10h-13z" fill="#f2f2f2" stroke="#8a8a8a" stroke-width="1"/></svg><div class="t" style="left:230px;top:326px;">User Bookmarks</div><svg class="ico" style="left:179px;top:346px" width="5" height="8" viewBox="0 0 5 8"><path d="M0 0l4 4-4 4z" fill="#555"/></svg><svg class="ico" style="left:192px;top:342px" width="16" height="16" viewBox="0 0 16 16"><path d="M1.5 2.5h5l1.5 1.5h6.5v10h-13z" fill="#f2f2f2" stroke="#8a8a8a" stroke-width="1"/><path d="M5 12V9l3-2.5L11 9v3z" fill="none" stroke="#333" stroke-width=".9"/></svg><div class="t" style="left:214px;top:344px;">Home</div><svg class="ico" style="left:179px;top:364px" width="5" height="8" viewBox="0 0 5 8"><path d="M0 0l4 4-4 4z" fill="#555"/></svg><svg class="ico" style="left:192px;top:360px" width="16" height="16" viewBox="0 0 16 16"><path d="M1.5 2.5h5l1.5 1.5h6.5v10h-13z" fill="#f2f2f2" stroke="#8a8a8a" stroke-width="1"/></svg><div class="t" style="left:214px;top:362px;">C:\</div><svg class="ico" style="left:179px;top:382px" width="5" height="8" viewBox="0 0 5 8"><path d="M0 0l4 4-4 4z" fill="#555"/></svg><svg class="ico" style="left:192px;top:378px" width="16" height="16" viewBox="0 0 16 16"><path d="M1.5 2.5h5l1.5 1.5h6.5v10h-13z" fill="#f2f2f2" stroke="#8a8a8a" stroke-width="1"/></svg><div class="t" style="left:214px;top:380px;">D:\</div><svg class="ico" style="left:179px;top:400px" width="5" height="8" viewBox="0 0 5 8"><path d="M0 0l4 4-4 4z" fill="#555"/></svg><svg class="ico" style="left:192px;top:396px" width="16" height="16" viewBox="0 0 16 16"><path d="M1.5 2.5h5l1.5 1.5h6.5v10h-13z" fill="#f2f2f2" stroke="#8a8a8a" stroke-width="1"/></svg><div class="t" style="left:214px;top:398px;">E:\</div><svg class="ico" style="left:179px;top:418px" width="5" height="8" viewBox="0 0 5 8"><path d="M0 0l4 4-4 4z" fill="#555"/></svg><svg class="ico" style="left:192px;top:414px" width="16" height="16" viewBox="0 0 16 16"><path d="M1.5 2.5h5l1.5 1.5h6.5v10h-13z" fill="#f2f2f2" stroke="#8a8a8a" stroke-width="1"/></svg><div class="t" style="left:214px;top:416px;">F:\</div><svg class="ico" style="left:179px;top:436px" width="5" height="8" viewBox="0 0 5 8"><path d="M0 0l4 4-4 4z" fill="#555"/></svg><svg class="ico" style="left:192px;top:432px" width="16" height="16" viewBox="0 0 16 16"><path d="M1.5 2.5h5l1.5 1.5h6.5v10h-13z" fill="#f2f2f2" stroke="#8a8a8a" stroke-width="1"/></svg><div class="t" style="left:214px;top:434px;">G:\</div><svg class="ico" style="left:192px;top:450px" width="16" height="16" viewBox="0 0 16 16"><path d="M1 7l4 3v6l-4-3z" fill="#c9a417"/><path d="M5 10h10v6H5z" fill="#f4d84c" stroke="#b89212" stroke-width=".5"/><path d="M1 7l3.5-3h10l.5 6H5z" fill="#e8c640"/><circle cx="8.5" cy="5.5" r="4.5" fill="#5b8ec9" stroke="#2f5f9a" stroke-width=".6"/></svg><div class="t" style="left:214px;top:452px;">GeoPackage</div><svg class="ico" style="left:192px;top:468px" width="16" height="16" viewBox="0 0 16 16"><path d="M1 15C3 8 7 2 15 1c-1 6-5 10-11 11z" fill="#8fb3dd" stroke="#3a6aa5" stroke-width=".9"/><path d="M1 15L11 4" stroke="#3a6aa5" stroke-width=".7"/></svg><div class="t" style="left:214px;top:470px;">SpatiaLite</div><svg class="ico" style="left:192px;top:486px" width="16" height="16" viewBox="0 0 16 16"><path d="M3 1c-2 0-3 2-2.5 5 .5 2 1.5 5 2.5 6 1 .8 1.5 0 2-1l1 4h3l.5-3c2 0 3-1 4-3s1.5-6-1-7.5C10 0 6 .5 3 1z" fill="#5b8ec9" stroke="#2f5f9a" stroke-width=".7"/></svg><div class="t" style="left:214px;top:488px;">PostGIS</div><svg class="ico" style="left:192px;top:504px" width="16" height="16" viewBox="0 0 16 16"><rect x="1" y="1" width="14" height="14" fill="none" stroke="#3a6aa5" stroke-dasharray="1 1"/><rect x="3" y="3" width="10" height="10" fill="#5b8ec9"/></svg><div class="t" style="left:214px;top:506px;">SAP HANA</div><svg class="ico" style="left:192px;top:522px" width="16" height="16" viewBox="0 0 16 16"><path d="M1 1c5 0 12 3 14 7-2 4-9 7-14 7 2-4 2-10 0-14z" fill="#5b8ec9" stroke="#2f5f9a" stroke-width=".7"/><path d="M4 2c1 4 1 8 0 12M8 3c1 3 1 7 0 10" stroke="#2f5f9a" stroke-width=".6" fill="none"/></svg><div class="t" style="left:214px;top:524px;">MSSQL</div><svg class="ico" style="left:192px;top:540px" width="16" height="16" viewBox="0 0 16 16"><rect x="0.8" y="2.5" width="14.4" height="11" rx="5" fill="#5b8ec9" stroke="#2f5f9a" stroke-width="1"/></svg><div class="t" style="left:214px;top:542px;">Oracle</div><svg class="ico" style="left:192px;top:558px" width="16" height="16" viewBox="0 0 16 16"><circle cx="8" cy="8" r="7" fill="#8fb3dd" stroke="#5b8ec9" stroke-width=".8"/><path d="M3 5c2 1 3-1 5 0s3 2 5 0M3 10c2 0 4 2 5 1s3-2 5 0M8 1v14" stroke="#fff" stroke-width=".8" fill="none"/></svg><div class="t" style="left:214px;top:560px;">WMS/WMTS</div><svg class="ico" style="left:192px;top:576px" width="16" height="16" viewBox="0 0 16 16"><rect x="1" y="1" width="14" height="14" rx="1" fill="#5b8ec9" stroke="#2f5f9a" stroke-width=".6"/><path d="M1 5.7h14M1 10.3h14M5.7 1v14M10.3 1v14" stroke="#dfe8f4" stroke-width="1.2"/></svg><div class="t" style="left:214px;top:578px;">Vector Tiles</div><div class="a" style="left:174px;top:594px;width:277px;height:5px;overflow:hidden"><svg class="ico" style="left:18px;top:0px" width="16" height="16" viewBox="0 0 16 16"><rect x="1" y="1" width="4" height="4" fill="#5b8ec9"/><rect x="6" y="1" width="4" height="4" fill="#5b8ec9"/><rect x="11" y="1" width="4" height="4" fill="#5b8ec9"/></svg><div class="t" style="left:40px;top:-1px">XYZ Tiles</div></div><svg class="ico" style="left:1696px;top:930px" width="12" height="11" viewBox="0 0 12 11"><circle cx="10" cy="2" r=".8" fill="#c0c0c0"/><circle cx="7" cy="5" r=".8" fill="#c0c0c0"/><circle cx="10" cy="5" r=".8" fill="#c0c0c0"/><circle cx="4" cy="8" r=".8" fill="#c0c0c0"/><circle cx="7" cy="8" r=".8" fill="#c0c0c0"/><circle cx="10" cy="8" r=".8" fill="#c0c0c0"/></svg><svg class="ico" style="left:467px;top:538px" width="3" height="14" viewBox="0 0 3 14"><circle cx="1.5" cy="1" r=".7" fill="#b8b8b8"/><circle cx="1.5" cy="4" r=".7" fill="#b8b8b8"/><circle cx="1.5" cy="7" r=".7" fill="#b8b8b8"/><circle cx="1.5" cy="10" r=".7" fill="#b8b8b8"/><circle cx="1.5" cy="13" r=".7" fill="#b8b8b8"/></svg><svg class="ico" style="left:1466px;top:538px" width="3" height="14" viewBox="0 0 3 14"><circle cx="1.5" cy="1" r=".7" fill="#b8b8b8"/><circle cx="1.5" cy="4" r=".7" fill="#b8b8b8"/><circle cx="1.5" cy="7" r=".7" fill="#b8b8b8"/><circle cx="1.5" cy="10" r=".7" fill="#b8b8b8"/><circle cx="1.5" cy="13" r=".7" fill="#b8b8b8"/></svg><div class="a" style="left:451px;top:269px;width:14px;height:330px;background:#f0f0f0;border-left:1px solid #d8d8d8"></div><div class="a" style="left:451px;top:269px;width:14px;height:14px;background:linear-gradient(90deg,#fdfdfd,#ececec);border-bottom:1px solid #c8c8c8;border-left:1px solid #c8c8c8"></div><svg class="ico" style="left:454px;top:273px" width="9" height="5" viewBox="0 0 9 5"><path d="M0 5l4.5-5 4.5 5z" fill="#555"/></svg><div class="a" style="left:451px;top:509px;width:14px;height:76px;background:#e2e2e2;border:1px solid #c8c8c8"></div><div class="a" style="left:451px;top:585px;width:14px;height:14px;background:linear-gradient(90deg,#fdfdfd,#ececec);border-top:1px solid #c8c8c8;border-left:1px solid #c8c8c8"></div><svg class="ico" style="left:454px;top:590px" width="9" height="5" viewBox="0 0 9 5"><path d="M0 0h9l-4.5 5z" fill="#555"/></svg><div class="a" style="left:310px;top:601px;width:20px;height:1px;border-top:1px dotted #bbb"></div><div class="t" style="left:176px;top:609px;">Layers</div><div class="a" style="left:439px;top:610px;width:11px;height:11px;border:1px solid #777;border-radius:3px"></div><svg class="ico" style="left:440px;top:611px" width="9" height="9" viewBox="0 0 9 9"><rect x="1.5" y="3.5" width="4" height="4" fill="none" stroke="#555" stroke-width="1"/><path d="M3.5 3.5V1.5h4v4H5.5" fill="none" stroke="#555" stroke-width="1"/></svg><div class="a" style="left:453px;top:610px;width:11px;height:11px;border:1px solid #777;border-radius:3px"></div><svg class="ico" style="left:454px;top:611px" width="9" height="9" viewBox="0 0 9 9"><path d="M1.5 1.5l6 6M7.5 1.5l-6 6" stroke="#555" stroke-width="1.8"/></svg><svg class="ico" style="left:178px;top:631px" width="18" height="18" viewBox="0 0 18 18"><path d="M1 10l5-3 4 6-4 3z" fill="#e84a3a"/><path d="M1 8l5-3 4 6-5 2z" fill="#f2d84a"/><path d="M3 7l5-3 3 5-5 3z" fill="#5b8ec9"/><path d="M5 9l6-3 2 3-5 4z" fill="#d8a860"/><path d="M10 7l6-6" stroke="#c88a30" stroke-width="2"/></svg><svg class="ico" style="left:203px;top:631px" width="18" height="18" viewBox="0 0 18 18"><path d="M1.5 4v11h10" fill="none" stroke="#888" stroke-width="1"/><rect x="3.5" y="3.5" width="10" height="10" fill="#fff" stroke="#888" stroke-width="1"/><path d="M8 2v8c0 2 3 2 3 0V3" stroke="#4a7ab9" stroke-width="1.3" fill="none"/><circle cx="13.5" cy="14" r="3.3" fill="#7cb87c" stroke="#3f8a3f" stroke-width=".8"/></svg><svg class="ico" style="left:229px;top:631px" width="18" height="18" viewBox="0 0 18 18"><path d="M1 9c4-5 12-5 16 0-4 5-12 5-16 0z" fill="#fff" stroke="#888" stroke-width="1"/><circle cx="9" cy="9" r="3.5" fill="#5b8ec9"/><circle cx="9" cy="9" r="1.5" fill="#111"/></svg><svg class="ico" style="left:254px;top:631px" width="18" height="18" viewBox="0 0 18 18"><path d="M1.5 2h15l-5.5 7v8l-4-2V9z" fill="#5b8ec9" stroke="#3a6aa5" stroke-width=".6"/><rect x="1.5" y="1.5" width="15" height="2" fill="#f2d84a"/></svg><svg class="ico" style="left:281px;top:631px" width="18" height="18" viewBox="0 0 18 18"><text x="1" y="12" font-family="Liberation Serif" font-size="13" fill="#c8c8c8">ε</text><rect x="9" y="10" width="7" height="6" fill="none" stroke="#d0d0d0"/></svg><svg class="ico" style="left:316px;top:631px" width="18" height="18" viewBox="0 0 18 18"><path d="M2 3v12M2 6h4M2 12h4" stroke="#999" stroke-width="1"/><rect x="4" y="5" width="3" height="3" fill="#f08a24"/><rect x="4" y="11" width="3" height="3" fill="#f08a24"/><path d="M12 17l5-5h-3V3h-4v9H7z" fill="#4a7ab9" stroke="#2f5f9a" stroke-width=".5"/></svg><svg class="ico" style="left:341px;top:631px" width="18" height="18" viewBox="0 0 18 18"><path d="M2 3v12M2 6h4M2 12h4" stroke="#999" stroke-width="1"/><rect x="4" y="5" width="3" height="3" fill="#f08a24"/><rect x="4" y="11" width="3" height="3" fill="#f08a24"/><path d="M12 1l5 5h-3v9h-4V6H7z" fill="#4a7ab9" stroke="#2f5f9a" stroke-width=".5"/></svg><svg class="ico" style="left:366px;top:631px" width="18" height="18" viewBox="0 0 18 18"><rect x="1.5" y="1.5" width="13" height="13" fill="#f0f0f0" stroke="#777" stroke-width="1"/><rect x="10" y="11" width="7" height="5" rx="1" fill="#e03a3a"/><path d="M11.5 13.5h4" stroke="#fff" stroke-width="1.3"/></svg><svg class="ico" style="left:242px;top:645px" width="8" height="5"><path d="M0 0h8l-4 4.5z" fill="#555"/></svg><svg class="ico" style="left:267px;top:645px" width="8" height="5"><path d="M0 0h8l-4 4.5z" fill="#555"/></svg><svg class="ico" style="left:301px;top:638px" width="8" height="5"><path d="M0 0h8l-4 4.5z" fill="#aaa"/></svg><div class="a" style="left:174px;top:657px;width:291px;height:18px;background:#f0f0f0"></div><svg class="ico" style="left:179px;top:664px" width="8" height="5" viewBox="0 0 8 5"><path d="M0 0h8l-4 4z" fill="#555"/></svg><div class="a" style="left:196px;top:659px;width:14px;height:14px;background:#fff;border:1px solid #a8a8a8"></div><svg class="ico" style="left:197px;top:660px" width="13" height="13" viewBox="0 0 13 13"><path d="M2.5 6.5l3 4 6-9" stroke="#000" stroke-width="1.8" fill="none"/></svg><svg class="ico" style="left:218px;top:659px" width="14" height="14" viewBox="0 0 14 14"><rect x="0" y="0" width="14" height="14" fill="#9cc3ea"/><rect x="0" y="0" width="4.6" height="4.6" fill="#1f4f86"/><rect x="9.3" y="0" width="4.7" height="4.6" fill="#1f4f86"/><rect x="4.6" y="4.6" width="4.7" height="4.7" fill="#1f4f86"/><rect x="0" y="9.3" width="4.6" height="4.7" fill="#1f4f86"/><rect x="4.6" y="0" width="4.7" height="4.6" fill="#5b8ec9"/><rect x="9.3" y="9.3" width="4.7" height="4.7" fill="#5b8ec9"/></svg><div class="t" style="left:237px;top:660px;font-size:11.7px;font-weight:bold;text-decoration:underline">Moolagundi-south</div><div class="t" style="left:216px;top:676px;">Band 1 (Gray)</div><div class="a" style="left:216px;top:691px;width:16px;height:96px;background:linear-gradient(#fff,#000)"></div><div class="t" style="left:236px;top:691px;font-size:11px">566.289246</div><div class="t" style="left:236px;top:774px;font-size:11px">420.916656</div><div class="t" style="left:1474px;top:222px;">Processing Toolbox</div><div class="a" style="left:1681px;top:222px;width:11px;height:11px;border:1px solid #777;border-radius:3px"></div><svg class="ico" style="left:1682px;top:223px" width="9" height="9" viewBox="0 0 9 9"><rect x="1.5" y="3.5" width="4" height="4" fill="none" stroke="#555" stroke-width="1"/><path d="M3.5 3.5V1.5h4v4H5.5" fill="none" stroke="#555" stroke-width="1"/></svg><div class="a" style="left:1695px;top:222px;width:11px;height:11px;border:1px solid #777;border-radius:3px"></div><svg class="ico" style="left:1696px;top:223px" width="9" height="9" viewBox="0 0 9 9"><path d="M1.5 1.5l6 6M7.5 1.5l-6 6" stroke="#555" stroke-width="1.8"/></svg><svg class="ico" style="left:1477px;top:243px" width="18" height="18" viewBox="0 0 18 18"><circle cx="6" cy="6" r="4" fill="none" stroke="#d42020" stroke-width="2.4" stroke-dasharray="1.6 1.4"/><circle cx="6" cy="6" r="2.5" fill="#d42020"/><circle cx="12" cy="11" r="3" fill="#888"/><circle cx="7" cy="14" r="2" fill="#7a9ed0"/><path d="M12 15h5l-2.5 2.5z" fill="#555"/></svg><svg class="ico" style="left:1502px;top:243px" width="18" height="18" viewBox="0 0 18 18"><path d="M9 1C5 1 5 2.5 5 3.5V6h4v1H3.5C2 7 1 8.5 1 10.5S2 14 3.5 14H5v-2.5C5 10 6 9 7.5 9h3c1.2 0 2.5-1 2.5-2.5V3.5C13 2 11.5 1 9 1z" fill="#3e78b2"/><path d="M9.5 17c4 0 4-1.5 4-2.5V12h-4v-1h5.5c1.5 0 2.5-1.5 2.5-3.5S16.5 4 15 4h-1.5v2.5c0 1.5-1 2.5-2.5 2.5H8c-1.2 0-2.5 1-2.5 2.5v3c0 1.5 1.5 2.5 4 2.5z" fill="#f2cf44"/></svg><svg class="ico" style="left:1527px;top:243px" width="18" height="18" viewBox="0 0 18 18"><circle cx="9" cy="9" r="7.5" fill="#fff" stroke="#8a8a8a" stroke-width="1.3"/><path d="M9 4v5l3 2" stroke="#8a8a8a" stroke-width="1.2" fill="none"/></svg><svg class="ico" style="left:1551px;top:243px" width="18" height="18" viewBox="0 0 18 18"><path d="M3.5 1.5h8l3 3v12h-11z" fill="#f6f6f6" stroke="#9a9a9a" stroke-width="1"/><path d="M5.5 7h7M5.5 9.5h7M5.5 12h7M5.5 14.5h5" stroke="#aaa" stroke-width=".9"/></svg><svg class="ico" style="left:1583px;top:243px" width="18" height="18" viewBox="0 0 18 18"><path d="M2 3h9l5 5-5 6H6l1-3H2z" fill="#dedcd2"/></svg><svg class="ico" style="left:1615px;top:243px" width="18" height="18" viewBox="0 0 18 18"><path d="M2 5a4 4 0 0 0 6 4l7 7 1.5-1.5-7-7A4 4 0 0 0 5 1.5L7 3.5 6.5 6 4 6.5z" fill="#9a9a9a" stroke="#555" stroke-width=".6"/><path d="M10 10l5.5 5.5" stroke="#e6c040" stroke-width="2.2"/></svg><div class="a" style="left:1577px;top:244.0px;width:1px;height:16px;background:#d0d0d0"></div><div class="a" style="left:1609px;top:244.0px;width:1px;height:16px;background:#d0d0d0"></div><svg class="ico" style="left:1478px;top:273px" width="14" height="14" viewBox="0 0 14 14"><circle cx="6" cy="6" r="4.5" fill="none" stroke="#777" stroke-width="1.4"/><path d="M9.3 9.3L13 13" stroke="#777" stroke-width="1.6"/></svg><div class="t" style="left:1498px;top:274px;color:#7a7a7a">Search...</div><svg class="ico" style="left:1479px;top:296px" width="5" height="8" viewBox="0 0 5 8"><path d="M0 0l4 4-4 4z" fill="#555"/></svg><svg class="ico" style="left:1494px;top:292px" width="16" height="16" viewBox="0 0 16 16"><circle cx="8" cy="8" r="6.8" fill="#fff" stroke="#8a8a8a" stroke-width="1.2"/><path d="M8 3.5V8l3 2" stroke="#8a8a8a" stroke-width="1.1" fill="none"/></svg><div class="t" style="left:1516px;top:294px;">Recently used</div><svg class="ico" style="left:1479px;top:314px" width="5" height="8" viewBox="0 0 5 8"><path d="M0 0l4 4-4 4z" fill="#555"/></svg><svg class="ico" style="left:1494px;top:310px" width="16" height="16" viewBox="0 0 16 16"><circle cx="7.5" cy="7.5" r="5.6" fill="none" stroke="#589632" stroke-width="2.6"/><path d="M9 9l5.5 5.5" stroke="#93b023" stroke-width="2.8"/><circle cx="7.6" cy="7.6" r="1.9" fill="#ee7913"/></svg><div class="t" style="left:1516px;top:312px;">Cartography</div><svg class="ico" style="left:1479px;top:332px" width="5" height="8" viewBox="0 0 5 8"><path d="M0 0l4 4-4 4z" fill="#555"/></svg><svg class="ico" style="left:1494px;top:328px" width="16" height="16" viewBox="0 0 16 16"><circle cx="7.5" cy="7.5" r="5.6" fill="none" stroke="#589632" stroke-width="2.6"/><path d="M9 9l5.5 5.5" stroke="#93b023" stroke-width="2.8"/><circle cx="7.6" cy="7.6" r="1.9" fill="#ee7913"/></svg><div class="t" style="left:1516px;top:330px;">Database</div><svg class="ico" style="left:1479px;top:350px" width="5" height="8" viewBox="0 0 5 8"><path d="M0 0l4 4-4 4z" fill="#555"/></svg><svg class="ico" style="left:1494px;top:346px" width="16" height="16" viewBox="0 0 16 16"><circle cx="7.5" cy="7.5" r="5.6" fill="none" stroke="#589632" stroke-width="2.6"/><path d="M9 9l5.5 5.5" stroke="#93b023" stroke-width="2.8"/><circle cx="7.6" cy="7.6" r="1.9" fill="#ee7913"/></svg><div class="t" style="left:1516px;top:348px;">File tools</div><svg class="ico" style="left:1479px;top:368px" width="5" height="8" viewBox="0 0 5 8"><path d="M0 0l4 4-4 4z" fill="#555"/></svg><svg class="ico" style="left:1494px;top:364px" width="16" height="16" viewBox="0 0 16 16"><circle cx="7.5" cy="7.5" r="5.6" fill="none" stroke="#589632" stroke-width="2.6"/><path d="M9 9l5.5 5.5" stroke="#93b023" stroke-width="2.8"/><circle cx="7.6" cy="7.6" r="1.9" fill="#ee7913"/></svg><div class="t" style="left:1516px;top:366px;">Interpolation</div><svg class="ico" style="left:1479px;top:386px" width="5" height="8" viewBox="0 0 5 8"><path d="M0 0l4 4-4 4z" fill="#555"/></svg><svg class="ico" style="left:1494px;top:382px" width="16" height="16" viewBox="0 0 16 16"><circle cx="7.5" cy="7.5" r="5.6" fill="none" stroke="#589632" stroke-width="2.6"/><path d="M9 9l5.5 5.5" stroke="#93b023" stroke-width="2.8"/><circle cx="7.6" cy="7.6" r="1.9" fill="#ee7913"/></svg><div class="t" style="left:1516px;top:384px;">Layer tools</div><svg class="ico" style="left:1479px;top:404px" width="5" height="8" viewBox="0 0 5 8"><path d="M0 0l4 4-4 4z" fill="#555"/></svg><svg class="ico" style="left:1494px;top:400px" width="16" height="16" viewBox="0 0 16 16"><circle cx="7.5" cy="7.5" r="5.6" fill="none" stroke="#589632" stroke-width="2.6"/><path d="M9 9l5.5 5.5" stroke="#93b023" stroke-width="2.8"/><circle cx="7.6" cy="7.6" r="1.9" fill="#ee7913"/></svg><div class="t" style="left:1516px;top:402px;">Mesh</div><svg class="ico" style="left:1479px;top:422px" width="5" height="8" viewBox="0 0 5 8"><path d="M0 0l4 4-4 4z" fill="#555"/></svg><svg class="ico" style="left:1494px;top:418px" width="16" height="16" viewBox="0 0 16 16"><circle cx="7.5" cy="7.5" r="5.6" fill="none" stroke="#589632" stroke-width="2.6"/><path d="M9 9l5.5 5.5" stroke="#93b023" stroke-width="2.8"/><circle cx="7.6" cy="7.6" r="1.9" fill="#ee7913"/></svg><div class="t" style="left:1516px;top:420px;">Network analysis</div><svg class="ico" style="left:1479px;top:440px" width="5" height="8" viewBox="0 0 5 8"><path d="M0 0l4 4-4 4z" fill="#555"/></svg><svg class="ico" style="left:1494px;top:436px" width="16" height="16" viewBox="0 0 16 16"><circle cx="7.5" cy="7.5" r="5.6" fill="none" stroke="#589632" stroke-width="2.6"/><path d="M9 9l5.5 5.5" stroke="#93b023" stroke-width="2.8"/><circle cx="7.6" cy="7.6" r="1.9" fill="#ee7913"/></svg><div class="t" style="left:1516px;top:438px;">Plots</div><svg class="ico" style="left:1479px;top:458px" width="5" height="8" viewBox="0 0 5 8"><path d="M0 0l4 4-4 4z" fill="#555"/></svg><svg class="ico" style="left:1494px;top:454px" width="16" height="16" viewBox="0 0 16 16"><circle cx="7.5" cy="7.5" r="5.6" fill="none" stroke="#589632" stroke-width="2.6"/><path d="M9 9l5.5 5.5" stroke="#93b023" stroke-width="2.8"/><circle cx="7.6" cy="7.6" r="1.9" fill="#ee7913"/></svg><div class="t" style="left:1516px;top:456px;">Raster analysis</div><svg class="ico" style="left:1479px;top:476px" width="5" height="8" viewBox="0 0 5 8"><path d="M0 0l4 4-4 4z" fill="#555"/></svg><svg class="ico" style="left:1494px;top:472px" width="16" height="16" viewBox="0 0 16 16"><circle cx="7.5" cy="7.5" r="5.6" fill="none" stroke="#589632" stroke-width="2.6"/><path d="M9 9l5.5 5.5" stroke="#93b023" stroke-width="2.8"/><circle cx="7.6" cy="7.6" r="1.9" fill="#ee7913"/></svg><div class="t" style="left:1516px;top:474px;">Raster creation</div><svg class="ico" style="left:1479px;top:494px" width="5" height="8" viewBox="0 0 5 8"><path d="M0 0l4 4-4 4z" fill="#555"/></svg><svg class="ico" style="left:1494px;top:490px" width="16" height="16" viewBox="0 0 16 16"><circle cx="7.5" cy="7.5" r="5.6" fill="none" stroke="#589632" stroke-width="2.6"/><path d="M9 9l5.5 5.5" stroke="#93b023" stroke-width="2.8"/><circle cx="7.6" cy="7.6" r="1.9" fill="#ee7913"/></svg><div class="t" style="left:1516px;top:492px;">Raster terrain analysis</div><svg class="ico" style="left:1479px;top:512px" width="5" height="8" viewBox="0 0 5 8"><path d="M0 0l4 4-4 4z" fill="#555"/></svg><svg class="ico" style="left:1494px;top:508px" width="16" height="16" viewBox="0 0 16 16"><circle cx="7.5" cy="7.5" r="5.6" fill="none" stroke="#589632" stroke-width="2.6"/><path d="M9 9l5.5 5.5" stroke="#93b023" stroke-width="2.8"/><circle cx="7.6" cy="7.6" r="1.9" fill="#ee7913"/></svg><div class="t" style="left:1516px;top:510px;">Raster tools</div><svg class="ico" style="left:1479px;top:530px" width="5" height="8" viewBox="0 0 5 8"><path d="M0 0l4 4-4 4z" fill="#555"/></svg><svg class="ico" style="left:1494px;top:526px" width="16" height="16" viewBox="0 0 16 16"><circle cx="7.5" cy="7.5" r="5.6" fill="none" stroke="#589632" stroke-width="2.6"/><path d="M9 9l5.5 5.5" stroke="#93b023" stroke-width="2.8"/><circle cx="7.6" cy="7.6" r="1.9" fill="#ee7913"/></svg><div class="t" style="left:1516px;top:528px;">Vector analysis</div><svg class="ico" style="left:1479px;top:548px" width="5" height="8" viewBox="0 0 5 8"><path d="M0 0l4 4-4 4z" fill="#555"/></svg><svg class="ico" style="left:1494px;top:544px" width="16" height="16" viewBox="0 0 16 16"><circle cx="7.5" cy="7.5" r="5.6" fill="none" stroke="#589632" stroke-width="2.6"/><path d="M9 9l5.5 5.5" stroke="#93b023" stroke-width="2.8"/><circle cx="7.6" cy="7.6" r="1.9" fill="#ee7913"/></svg><div class="t" style="left:1516px;top:546px;">Vector creation</div><svg class="ico" style="left:1479px;top:566px" width="5" height="8" viewBox="0 0 5 8"><path d="M0 0l4 4-4 4z" fill="#555"/></svg><svg class="ico" style="left:1494px;top:562px" width="16" height="16" viewBox="0 0 16 16"><circle cx="7.5" cy="7.5" r="5.6" fill="none" stroke="#589632" stroke-width="2.6"/><path d="M9 9l5.5 5.5" stroke="#93b023" stroke-width="2.8"/><circle cx="7.6" cy="7.6" r="1.9" fill="#ee7913"/></svg><div class="t" style="left:1516px;top:564px;">Vector general</div><svg class="ico" style="left:1479px;top:584px" width="5" height="8" viewBox="0 0 5 8"><path d="M0 0l4 4-4 4z" fill="#555"/></svg><svg class="ico" style="left:1494px;top:580px" width="16" height="16" viewBox="0 0 16 16"><circle cx="7.5" cy="7.5" r="5.6" fill="none" stroke="#589632" stroke-width="2.6"/><path d="M9 9l5.5 5.5" stroke="#93b023" stroke-width="2.8"/><circle cx="7.6" cy="7.6" r="1.9" fill="#ee7913"/></svg><div class="t" style="left:1516px;top:582px;">Vector geometry</div><svg class="ico" style="left:1479px;top:602px" width="5" height="8" viewBox="0 0 5 8"><path d="M0 0l4 4-4 4z" fill="#555"/></svg><svg class="ico" style="left:1494px;top:598px" width="16" height="16" viewBox="0 0 16 16"><circle cx="7.5" cy="7.5" r="5.6" fill="none" stroke="#589632" stroke-width="2.6"/><path d="M9 9l5.5 5.5" stroke="#93b023" stroke-width="2.8"/><circle cx="7.6" cy="7.6" r="1.9" fill="#ee7913"/></svg><div class="t" style="left:1516px;top:600px;">Vector overlay</div><svg class="ico" style="left:1479px;top:620px" width="5" height="8" viewBox="0 0 5 8"><path d="M0 0l4 4-4 4z" fill="#555"/></svg><svg class="ico" style="left:1494px;top:616px" width="16" height="16" viewBox="0 0 16 16"><circle cx="7.5" cy="7.5" r="5.6" fill="none" stroke="#589632" stroke-width="2.6"/><path d="M9 9l5.5 5.5" stroke="#93b023" stroke-width="2.8"/><circle cx="7.6" cy="7.6" r="1.9" fill="#ee7913"/></svg><div class="t" style="left:1516px;top:618px;">Vector selection</div><svg class="ico" style="left:1479px;top:638px" width="5" height="8" viewBox="0 0 5 8"><path d="M0 0l4 4-4 4z" fill="#555"/></svg><svg class="ico" style="left:1494px;top:634px" width="16" height="16" viewBox="0 0 16 16"><circle cx="7.5" cy="7.5" r="5.6" fill="none" stroke="#589632" stroke-width="2.6"/><path d="M9 9l5.5 5.5" stroke="#93b023" stroke-width="2.8"/><circle cx="7.6" cy="7.6" r="1.9" fill="#ee7913"/></svg><div class="t" style="left:1516px;top:636px;">Vector table</div><svg class="ico" style="left:1479px;top:656px" width="5" height="8" viewBox="0 0 5 8"><path d="M0 0l4 4-4 4z" fill="#555"/></svg><svg class="ico" style="left:1494px;top:652px" width="16" height="16" viewBox="0 0 16 16"><circle cx="7.5" cy="7.5" r="5.6" fill="none" stroke="#589632" stroke-width="2.6"/><path d="M9 9l5.5 5.5" stroke="#93b023" stroke-width="2.8"/><circle cx="7.6" cy="7.6" r="1.9" fill="#ee7913"/></svg><div class="t" style="left:1516px;top:654px;">Vector tiles</div><svg class="ico" style="left:1479px;top:674px" width="5" height="8" viewBox="0 0 5 8"><path d="M0 0l4 4-4 4z" fill="#555"/></svg><svg class="ico" style="left:1494px;top:670px" width="16" height="16" viewBox="0 0 16 16"><circle cx="9" cy="9" r="6" fill="#7fc3e8"/><path d="M2 1l6 6" stroke="#333" stroke-width="1"/><text x="0" y="15.5" font-family="Liberation Sans" font-weight="bold" font-size="6" fill="#111">GDAL</text></svg><div class="t" style="left:1516px;top:672px;">GDAL</div><svg class="ico" style="left:1479px;top:692px" width="5" height="8" viewBox="0 0 5 8"><path d="M0 0l4 4-4 4z" fill="#555"/></svg><svg class="ico" style="left:1494px;top:688px" width="16" height="16" viewBox="0 0 16 16"><path d="M8 1l6 7-6 7-6-7z" fill="#fff" stroke="#777" stroke-width=".8"/><path d="M8 14V7M8 12l-3-4M8 12l3-4" stroke="#3f9a3f" stroke-width="1.3" fill="none"/></svg><div class="t" style="left:1516px;top:690px;">GRASS</div><svg class="ico" style="left:1479px;top:710px" width="5" height="8" viewBox="0 0 5 8"><path d="M0 0l4 4-4 4z" fill="#555"/></svg><svg class="ico" style="left:1494px;top:706px" width="16" height="16" viewBox="0 0 16 16"><circle cx="8" cy="8" r="6.5" fill="none" stroke="#1e5aa8" stroke-width="2"/><path d="M3 6c3-2 7-1 8 1s-5 2-5 4 4 2 7 1" stroke="#1e5aa8" stroke-width="1.8" fill="none"/></svg><div class="t" style="left:1516px;top:708px;">SAGA</div><svg class="ico" style="left:184px;top:924px" width="14" height="14" viewBox="0 0 14 14"><circle cx="6" cy="6" r="4.5" fill="none" stroke="#777" stroke-width="1.4"/><path d="M9.3 9.3L13 13" stroke="#777" stroke-width="1.6"/></svg><div class="t" style="left:204px;top:925px;color:#6a6a6a">Type to locate (Ctrl+K)</div><div class="t" style="left:384px;top:925px;">Ready</div><div class="t" style="left:880px;top:925px;">Coordinate</div><div class="a" style="left:937px;top:920px;width:93px;height:22px;background:#fff;border:1px solid #adadad;border-radius:2px"></div><div class="t" style="left:943px;top:925px;">751171,6545085</div><svg class="ico" style="left:1037px;top:923px" width="16" height="16" viewBox="0 0 16 16"><path d="M3 3c2 1 3 3 3 5s2 5 5 6c2 0 3-2 2-4s-3-2-3-4 2-2 0-3" stroke="#555" stroke-width="1.6" fill="none"/><circle cx="11" cy="4" r="2" fill="none" stroke="#555"/></svg><div class="t" style="left:1066px;top:925px;">Scale</div><div class="a" style="left:1096px;top:920px;width:80px;height:22px;background:#fff;border:1px solid #adadad;border-radius:2px"></div><div class="t" style="left:1100px;top:925px;">1:15895</div><div class="a" style="left:1154px;top:921px;width:1px;height:20px;background:#c8c8c8"></div><svg class="ico" style="left:1160px;top:929px" width="9" height="5" viewBox="0 0 9 5"><path d="M0 0h9l-4.5 5z" fill="#555"/></svg><svg class="ico" style="left:1185px;top:922px" width="16" height="17" viewBox="0 0 16 17"><rect x="2" y="7" width="12" height="9" rx="1" fill="#666"/><path d="M4.5 7V5a3.5 3.5 0 0 1 7 0v2" stroke="#666" stroke-width="1.6" fill="none"/></svg><div class="t" style="left:1208px;top:925px;">Magnifier</div><div class="a" style="left:1256px;top:920px;width:87px;height:22px;background:#fff;border:1px solid #adadad;border-radius:2px"></div><div class="t" style="left:1260px;top:925px;">100%</div><div class="a" style="left:1328px;top:920px;width:15px;height:22px;background:linear-gradient(90deg,#fafafa,#ececec);border:1px solid #adadad;border-radius:0 3px 3px 0"></div><svg class="ico" style="left:1332px;top:925px" width="7" height="11" viewBox="0 0 7 11"><path d="M0 4l3.5-4 3.5 4zM0 7h7l-3.5 4z" fill="#555"/></svg><div class="t" style="left:1352px;top:925px;">Rotation</div><div class="a" style="left:1404px;top:920px;width:83px;height:22px;background:#fff;border:1px solid #adadad;border-radius:2px"></div><div class="t" style="left:1408px;top:925px;">0.0 °</div><div class="a" style="left:1472px;top:920px;width:15px;height:22px;background:linear-gradient(90deg,#fafafa,#ececec);border:1px solid #adadad;border-radius:0 3px 3px 0"></div><svg class="ico" style="left:1476px;top:925px" width="7" height="11" viewBox="0 0 7 11"><path d="M0 4l3.5-4 3.5 4zM0 7h7l-3.5 4z" fill="#555"/></svg><div class="a" style="left:1493px;top:924px;width:14px;height:14px;background:#fff;border:1px solid #a8a8a8"></div><svg class="ico" style="left:1494px;top:925px" width="13" height="13" viewBox="0 0 13 13"><path d="M2.5 6.5l3 4 6-9" stroke="#000" stroke-width="1.8" fill="none"/></svg><div class="t" style="left:1513px;top:925px;">Render</div><svg class="ico" style="left:1563px;top:923px" width="16" height="16" viewBox="0 0 16 16"><circle cx="8" cy="8" r="6.5" fill="#fff" stroke="#777" stroke-width="1.1"/><path d="M1.5 8h13M8 1.5v13M3 4.5h10M3 11.5h10" stroke="#777" stroke-width=".9"/><ellipse cx="8" cy="8" rx="3" ry="6.5" fill="none" stroke="#777" stroke-width=".9"/></svg><div class="t" style="left:1586px;top:925px;">EPSG:32755</div><svg class="ico" style="left:1661px;top:922px" width="18" height="18" viewBox="0 0 18 18"><ellipse cx="9" cy="8" rx="8" ry="6.5" fill="#555"/><path d="M5 13l-2 4 6-3z" fill="#555"/><circle cx="5.5" cy="8" r="1.2" fill="#fff"/><circle cx="9" cy="8" r="1.2" fill="#fff"/><circle cx="12.5" cy="8" r="1.2" fill="#fff"/></svg>
<svg class="a" style="left:472px;top:218px" width="992" height="699" viewBox="0 0 992 699"><defs><clipPath id="demc"><polygon points="168,127 177,124.5 209,126 318,148 844,256 862,270 861,284 845,389 795,432 779,432 753,429 730,425.5 736.5999999999999,434.79999999999995 744,454 743,476.5 670,537 613,572.5 604,574.7 593,573.6 358,525 331,516 313.6,507.6 242.39999999999998,444 235.79999999999995,433 232.39999999999998,418.70000000000005 228,415 208,413 202.39999999999998,409.79999999999995 131,345 134.70000000000005,302 156,149"/></clipPath><filter id="demb" x="-20%" y="-20%" width="140%" height="140%"><feGaussianBlur stdDeviation="18"/></filter></defs><g clip-path="url(#demc)"><rect x="0" y="0" width="992" height="699" fill="#4e4e4e"/><g filter="url(#demb)"><ellipse cx="228" cy="160" rx="85" ry="38" fill="rgb(42,42,42)" opacity="0.9" transform="rotate(12 228 160)"/><ellipse cx="483" cy="227" rx="135" ry="60" fill="rgb(22,22,22)" opacity="1.0" transform="rotate(12 483 227)"/><ellipse cx="408" cy="197" rx="55" ry="38" fill="rgb(8,8,8)" opacity="0.9" transform="rotate(12 408 197)"/><ellipse cx="373" cy="337" rx="35" ry="75" fill="rgb(32,32,32)" opacity="0.9" transform="rotate(20 373 337)"/><ellipse cx="678" cy="244" rx="80" ry="25" fill="rgb(40,40,40)" opacity="0.9" transform="rotate(12 678 244)"/><ellipse cx="243" cy="310" rx="120" ry="14" fill="rgb(40,40,40)" opacity="0.75" transform="rotate(8 243 310)"/><ellipse cx="463" cy="412" rx="22" ry="50" fill="rgb(60,60,60)" opacity="0.6" transform="rotate(0 463 412)"/><ellipse cx="343" cy="442" rx="22" ry="60" fill="rgb(60,60,60)" opacity="0.6" transform="rotate(0 343 442)"/><ellipse cx="178" cy="244" rx="50" ry="70" fill="rgb(48,48,48)" opacity="0.75" transform="rotate(0 178 244)"/><ellipse cx="688" cy="334" rx="70" ry="12" fill="rgb(72,72,72)" opacity="0.4" transform="rotate(10 688 334)"/><ellipse cx="320" cy="214" rx="42" ry="48" fill="rgb(105,105,105)" opacity="0.7" transform="rotate(0 320 214)"/><ellipse cx="388" cy="382" rx="40" ry="80" fill="rgb(35,35,35)" opacity="0.65" transform="rotate(10 388 382)"/><ellipse cx="208" cy="224" rx="70" ry="12" fill="rgb(88,88,88)" opacity="0.5" transform="rotate(5 208 224)"/><ellipse cx="168" cy="342" rx="35" ry="22" fill="rgb(85,85,85)" opacity="0.5" transform="rotate(0 168 342)"/><ellipse cx="218" cy="385" rx="50" ry="28" fill="rgb(190,190,190)" opacity="0.9" transform="rotate(0 218 385)"/><ellipse cx="276" cy="454" rx="42" ry="42" fill="rgb(145,145,145)" opacity="0.85" transform="rotate(0 276 454)"/><ellipse cx="768" cy="327" rx="100" ry="62" fill="rgb(140,140,140)" opacity="0.9" transform="rotate(10 768 327)"/><ellipse cx="718" cy="457" rx="40" ry="45" fill="rgb(150,150,150)" opacity="0.85" transform="rotate(0 718 457)"/><ellipse cx="673" cy="530" rx="32" ry="26" fill="rgb(255,255,255)" opacity="1.0" transform="rotate(-30 673 530)"/><ellipse cx="638" cy="547" rx="40" ry="25" fill="rgb(200,200,200)" opacity="0.7" transform="rotate(-30 638 547)"/><ellipse cx="478" cy="534" rx="135" ry="35" fill="rgb(142,142,142)" opacity="0.85" transform="rotate(13 478 534)"/><ellipse cx="393" cy="472" rx="50" ry="55" fill="rgb(122,122,122)" opacity="0.7" transform="rotate(0 393 472)"/><ellipse cx="358" cy="337" rx="50" ry="50" fill="rgb(30,30,30)" opacity="0.7" transform="rotate(0 358 337)"/><ellipse cx="588" cy="442" rx="80" ry="60" fill="rgb(98,98,98)" opacity="0.7" transform="rotate(0 588 442)"/><ellipse cx="333" cy="422" rx="24" ry="90" fill="rgb(42,42,42)" opacity="0.8" transform="rotate(15 333 422)"/><ellipse cx="468" cy="324" rx="60" ry="18" fill="rgb(88,88,88)" opacity="0.6" transform="rotate(0 468 324)"/><ellipse cx="518" cy="252" rx="60" ry="45" fill="rgb(30,30,30)" opacity="0.8" transform="rotate(0 518 252)"/><ellipse cx="773" cy="400" rx="85" ry="28" fill="rgb(142,142,142)" opacity="0.9" transform="rotate(-10 773 400)"/></g><filter id="demb2"><feGaussianBlur stdDeviation="2"/></filter><g filter="url(#demb2)" fill="none" stroke-linecap="round" stroke-linejoin="round"><path d="M413,172 L405,255 L400,277 L375,294 L348,322 L318,342" stroke="#1e1e1e" stroke-width="3.5" opacity="0.15"/><path d="M358,297 L388,342 L428,357 L458,342" stroke="#1e1e1e" stroke-width="3.1" opacity="0.135"/><path d="M588,272 L586,344 L600,422 L608,482" stroke="#1e1e1e" stroke-width="3.1" opacity="0.135"/><path d="M613,294 L658,322 L708,350 L768,357" stroke="#1e1e1e" stroke-width="3.1" opacity="0.12"/><path d="M398,345 L436,368 L455,411 L483,438 L490,484 L503,542" stroke="#1e1e1e" stroke-width="3.5" opacity="0.15"/><path d="M351,399 L328,476 L309,515" stroke="#1e1e1e" stroke-width="3.1" opacity="0.135"/><path d="M590,353 L621,438 L629,476" stroke="#1e1e1e" stroke-width="2.9" opacity="0.12"/><path d="M228,222 L268,252 L318,282 L358,287" stroke="#1e1e1e" stroke-width="2.9" opacity="0.105"/><path d="M168,287 L228,294 L288,312 L328,307" stroke="#1e1e1e" stroke-width="2.9" opacity="0.105"/><path d="M628,237 L678,252 L738,262 L798,282" stroke="#1e1e1e" stroke-width="3.3" opacity="0.12"/></g><g fill="#9a9a9a" opacity=".35"><circle cx="586.5" cy="457.1" r="1.6"/><circle cx="816.6" cy="456.3" r="1.7"/><circle cx="158.9" cy="334.2" r="1.7"/><circle cx="605.3" cy="527.9" r="0.7"/><circle cx="475.7" cy="236.7" r="1.3"/><circle cx="551.2" cy="132.8" r="0.9"/><circle cx="339.2" cy="534.8" r="1.5"/><circle cx="252.9" cy="481.7" r="0.8"/><circle cx="582.6" cy="183.4" r="0.6"/><circle cx="765.4" cy="220.2" r="0.9"/><circle cx="845.3" cy="515.2" r="0.9"/><circle cx="830.3" cy="367.0" r="1.4"/><circle cx="285.4" cy="545.7" r="1.4"/><circle cx="833.9" cy="524.7" r="1.0"/><circle cx="398.1" cy="200.9" r="0.8"/><circle cx="184.9" cy="261.1" r="1.3"/><circle cx="140.4" cy="428.7" r="1.0"/><circle cx="361.2" cy="491.2" r="1.2"/><circle cx="365.4" cy="341.1" r="1.4"/><circle cx="179.0" cy="560.9" r="0.6"/><circle cx="677.9" cy="503.0" r="0.6"/><circle cx="705.2" cy="290.0" r="1.3"/><circle cx="144.5" cy="147.8" r="0.8"/><circle cx="825.7" cy="214.5" r="1.5"/><circle cx="807.4" cy="546.2" r="1.0"/><circle cx="393.5" cy="360.5" r="1.5"/><circle cx="215.8" cy="460.0" r="1.6"/><circle cx="757.0" cy="143.3" r="1.7"/><circle cx="203.6" cy="278.6" r="1.3"/><circle cx="799.0" cy="278.3" r="1.7"/><circle cx="530.5" cy="266.0" r="1.0"/><circle cx="265.8" cy="161.8" r="0.8"/><circle cx="634.2" cy="570.5" r="0.8"/><circle cx="173.0" cy="566.1" r="1.2"/><circle cx="430.2" cy="232.6" r="1.3"/><circle cx="732.9" cy="329.8" r="1.1"/><circle cx="178.1" cy="534.7" r="0.6"/><circle cx="493.4" cy="500.1" r="0.8"/><circle cx="664.8" cy="549.7" r="1.4"/><circle cx="705.4" cy="174.5" r="1.1"/><circle cx="245.5" cy="502.9" r="1.0"/><circle cx="464.3" cy="571.7" r="1.6"/><circle cx="840.7" cy="328.8" r="1.2"/><circle cx="663.2" cy="340.2" r="0.9"/><circle cx="428.7" cy="192.2" r="1.1"/><circle cx="849.6" cy="554.1" r="1.4"/><circle cx="497.5" cy="277.6" r="0.7"/><circle cx="334.1" cy="475.0" r="1.6"/><circle cx="398.2" cy="476.8" r="1.5"/><circle cx="638.1" cy="422.5" r="1.5"/><circle cx="399.7" cy="440.5" r="0.9"/><circle cx="487.7" cy="469.5" r="1.4"/><circle cx="349.6" cy="547.8" r="1.4"/><circle cx="556.1" cy="132.2" r="1.3"/><circle cx="318.5" cy="425.9" r="1.2"/><circle cx="726.0" cy="415.1" r="1.6"/><circle cx="388.5" cy="413.6" r="1.5"/><circle cx="734.3" cy="282.8" r="1.6"/><circle cx="764.3" cy="433.3" r="1.8"/><circle cx="826.7" cy="357.6" r="1.2"/><circle cx="257.6" cy="499.3" r="1.7"/><circle cx="481.6" cy="434.7" r="1.5"/><circle cx="663.9" cy="203.5" r="1.5"/><circle cx="556.2" cy="423.2" r="1.1"/><circle cx="587.1" cy="471.7" r="1.4"/><circle cx="656.7" cy="139.3" r="0.8"/><circle cx="455.6" cy="416.3" r="0.9"/><circle cx="631.9" cy="407.7" r="0.7"/><circle cx="477.5" cy="227.7" r="0.7"/><circle cx="234.1" cy="268.2" r="0.8"/><circle cx="277.2" cy="142.9" r="1.2"/><circle cx="411.8" cy="399.2" r="1.3"/><circle cx="309.2" cy="528.9" r="0.6"/><circle cx="429.9" cy="250.9" r="1.1"/><circle cx="220.9" cy="497.0" r="1.0"/><circle cx="164.0" cy="400.0" r="0.7"/><circle cx="530.6" cy="278.0" r="1.3"/><circle cx="828.0" cy="491.2" r="1.1"/><circle cx="723.4" cy="412.8" r="1.0"/><circle cx="240.3" cy="392.2" r="1.3"/><circle cx="827.2" cy="557.8" r="1.3"/><circle cx="390.8" cy="524.6" r="0.6"/><circle cx="215.7" cy="378.8" r="1.3"/><circle cx="239.3" cy="407.1" r="1.7"/><circle cx="408.6" cy="319.1" r="0.9"/><circle cx="347.9" cy="559.7" r="1.1"/><circle cx="830.0" cy="533.6" r="1.3"/><circle cx="325.1" cy="563.5" r="1.2"/><circle cx="437.2" cy="269.0" r="1.8"/><circle cx="492.1" cy="254.4" r="1.2"/><circle cx="225.8" cy="403.7" r="1.1"/><circle cx="349.0" cy="474.9" r="1.6"/><circle cx="147.5" cy="364.0" r="0.9"/><circle cx="811.4" cy="474.9" r="0.9"/><circle cx="330.7" cy="195.9" r="1.8"/><circle cx="349.1" cy="397.6" r="1.2"/><circle cx="602.3" cy="395.7" r="1.5"/><circle cx="223.1" cy="465.4" r="1.0"/><circle cx="522.1" cy="276.6" r="1.0"/><circle cx="519.5" cy="333.6" r="1.0"/><circle cx="674.4" cy="389.9" r="0.6"/><circle cx="319.7" cy="329.7" r="1.7"/><circle cx="777.3" cy="369.8" r="0.6"/><circle cx="698.4" cy="317.3" r="1.3"/><circle cx="647.9" cy="408.3" r="1.2"/><circle cx="794.4" cy="298.5" r="1.1"/><circle cx="751.4" cy="214.4" r="1.0"/><circle cx="735.6" cy="156.4" r="1.6"/><circle cx="638.1" cy="319.6" r="0.9"/><circle cx="700.1" cy="532.3" r="0.8"/><circle cx="482.5" cy="371.3" r="1.2"/><circle cx="376.1" cy="195.3" r="1.3"/><circle cx="722.5" cy="157.4" r="0.9"/><circle cx="728.1" cy="479.3" r="1.4"/><circle cx="156.4" cy="448.6" r="1.8"/><circle cx="856.8" cy="439.1" r="0.7"/><circle cx="744.3" cy="224.6" r="1.4"/><circle cx="823.6" cy="444.0" r="0.8"/><circle cx="348.6" cy="535.5" r="0.8"/><circle cx="577.6" cy="311.2" r="0.8"/><circle cx="586.1" cy="146.4" r="0.7"/><circle cx="411.0" cy="159.0" r="0.7"/><circle cx="552.2" cy="457.3" r="1.7"/><circle cx="234.7" cy="319.1" r="1.0"/><circle cx="570.2" cy="344.9" r="1.7"/><circle cx="407.4" cy="151.8" r="1.4"/><circle cx="246.8" cy="407.9" r="1.2"/><circle cx="793.5" cy="373.9" r="1.3"/><circle cx="327.5" cy="372.5" r="0.9"/><circle cx="678.4" cy="357.1" r="0.8"/><circle cx="306.8" cy="292.2" r="1.5"/><circle cx="267.1" cy="444.4" r="1.4"/><circle cx="199.4" cy="424.2" r="0.7"/><circle cx="227.8" cy="391.3" r="0.9"/><circle cx="769.4" cy="340.8" r="1.0"/><circle cx="711.5" cy="140.1" r="1.5"/><circle cx="176.6" cy="194.1" r="1.7"/><circle cx="628.4" cy="226.3" r="0.7"/><circle cx="838.3" cy="423.0" r="1.6"/><circle cx="238.6" cy="405.0" r="1.0"/><circle cx="307.2" cy="275.3" r="1.3"/><circle cx="389.0" cy="298.7" r="0.8"/><circle cx="736.4" cy="415.3" r="1.6"/><circle cx="450.0" cy="506.0" r="1.2"/><circle cx="564.7" cy="382.1" r="1.5"/><circle cx="422.8" cy="170.2" r="0.6"/><circle cx="283.7" cy="144.6" r="1.7"/><circle cx="484.3" cy="465.4" r="0.6"/><circle cx="476.5" cy="523.0" r="1.3"/><circle cx="446.6" cy="334.2" r="0.7"/><circle cx="249.4" cy="197.8" r="1.0"/><circle cx="415.7" cy="518.8" r="0.8"/><circle cx="320.9" cy="250.5" r="0.8"/><circle cx="344.7" cy="231.6" r="1.2"/><circle cx="161.1" cy="538.4" r="1.0"/><circle cx="813.3" cy="433.0" r="1.4"/><circle cx="477.6" cy="547.7" r="0.7"/><circle cx="619.4" cy="256.5" r="1.4"/><circle cx="663.1" cy="199.6" r="0.8"/><circle cx="155.9" cy="229.6" r="0.7"/><circle cx="426.8" cy="560.2" r="1.0"/><circle cx="362.5" cy="335.3" r="0.9"/><circle cx="665.3" cy="446.5" r="0.8"/><circle cx="311.2" cy="426.1" r="1.7"/><circle cx="603.0" cy="318.6" r="1.8"/><circle cx="142.5" cy="154.1" r="1.5"/><circle cx="433.3" cy="147.0" r="1.3"/><circle cx="850.5" cy="357.9" r="1.0"/><circle cx="205.5" cy="158.7" r="1.7"/><circle cx="491.6" cy="543.4" r="0.7"/><circle cx="313.3" cy="149.5" r="1.1"/><circle cx="181.3" cy="240.7" r="1.1"/><circle cx="358.3" cy="149.8" r="0.6"/><circle cx="837.6" cy="206.8" r="1.2"/><circle cx="427.7" cy="363.4" r="0.7"/><circle cx="364.0" cy="175.1" r="1.3"/><circle cx="801.3" cy="393.2" r="1.6"/><circle cx="292.4" cy="134.7" r="1.2"/><circle cx="488.3" cy="381.3" r="1.1"/><circle cx="588.1" cy="449.9" r="1.7"/><circle cx="359.5" cy="326.8" r="1.6"/><circle cx="299.3" cy="178.5" r="1.0"/><circle cx="201.1" cy="470.7" r="1.6"/><circle cx="363.3" cy="184.8" r="0.7"/><circle cx="314.3" cy="164.5" r="1.1"/><circle cx="553.4" cy="236.2" r="0.7"/><circle cx="642.4" cy="148.4" r="0.8"/><circle cx="343.9" cy="293.3" r="0.7"/><circle cx="440.8" cy="266.7" r="1.5"/><circle cx="538.4" cy="525.8" r="1.4"/><circle cx="685.0" cy="382.8" r="1.1"/><circle cx="726.1" cy="418.7" r="1.7"/><circle cx="662.2" cy="439.0" r="0.9"/><circle cx="722.7" cy="297.2" r="0.8"/><circle cx="185.5" cy="202.4" r="0.9"/><circle cx="624.6" cy="254.1" r="0.7"/><circle cx="687.9" cy="375.0" r="0.6"/><circle cx="174.5" cy="184.9" r="1.0"/><circle cx="757.1" cy="549.4" r="1.3"/><circle cx="304.4" cy="317.9" r="1.0"/><circle cx="375.9" cy="132.5" r="1.3"/><circle cx="733.4" cy="450.4" r="0.7"/><circle cx="519.8" cy="203.2" r="1.5"/><circle cx="459.3" cy="544.6" r="1.6"/><circle cx="223.1" cy="268.1" r="1.7"/><circle cx="469.9" cy="320.2" r="1.1"/><circle cx="690.6" cy="543.7" r="1.2"/><circle cx="836.2" cy="392.2" r="0.7"/><circle cx="724.3" cy="313.7" r="0.7"/><circle cx="842.2" cy="141.6" r="1.3"/><circle cx="485.0" cy="519.4" r="1.1"/><circle cx="293.2" cy="250.3" r="0.8"/><circle cx="543.0" cy="285.9" r="1.5"/><circle cx="311.9" cy="283.5" r="0.9"/><circle cx="845.3" cy="500.9" r="1.6"/><circle cx="583.1" cy="305.4" r="0.8"/><circle cx="736.8" cy="345.1" r="0.6"/><circle cx="260.1" cy="170.9" r="1.5"/><circle cx="786.1" cy="215.7" r="1.6"/><circle cx="371.3" cy="430.9" r="1.6"/><circle cx="586.6" cy="483.2" r="1.1"/><circle cx="145.3" cy="354.7" r="1.3"/><circle cx="271.0" cy="300.1" r="1.0"/><circle cx="157.5" cy="265.9" r="1.1"/><circle cx="480.8" cy="440.0" r="1.1"/><circle cx="845.3" cy="489.9" r="1.7"/><circle cx="636.8" cy="425.2" r="1.2"/><circle cx="713.1" cy="288.4" r="1.3"/><circle cx="627.2" cy="359.4" r="0.9"/><circle cx="194.0" cy="165.8" r="1.0"/><circle cx="555.9" cy="465.0" r="1.5"/><circle cx="358.9" cy="540.5" r="0.9"/><circle cx="653.6" cy="159.1" r="1.5"/><circle cx="620.4" cy="552.8" r="1.7"/><circle cx="633.1" cy="500.0" r="1.5"/><circle cx="577.9" cy="219.9" r="1.2"/><circle cx="783.2" cy="233.4" r="1.8"/><circle cx="529.6" cy="302.1" r="0.6"/><circle cx="418.9" cy="206.3" r="1.4"/><circle cx="785.7" cy="532.0" r="1.3"/><circle cx="416.4" cy="175.5" r="1.4"/><circle cx="536.5" cy="445.3" r="1.0"/><circle cx="776.5" cy="221.7" r="1.0"/><circle cx="330.7" cy="403.9" r="1.7"/><circle cx="258.5" cy="408.6" r="1.5"/><circle cx="299.7" cy="154.9" r="1.3"/><circle cx="735.8" cy="518.0" r="1.5"/><circle cx="438.1" cy="316.3" r="1.2"/><circle cx="789.4" cy="261.5" r="0.9"/><circle cx="573.9" cy="557.1" r="0.8"/><circle cx="159.9" cy="178.4" r="1.3"/><circle cx="572.5" cy="208.8" r="0.8"/><circle cx="566.1" cy="414.6" r="1.4"/><circle cx="662.8" cy="154.3" r="1.2"/><circle cx="738.9" cy="553.0" r="1.0"/><circle cx="750.2" cy="414.1" r="1.7"/><circle cx="302.9" cy="437.1" r="1.6"/><circle cx="481.2" cy="171.9" r="0.8"/><circle cx="250.8" cy="168.3" r="0.8"/><circle cx="581.3" cy="173.7" r="1.5"/></g><radialGradient id="demr1"><stop offset="0" stop-color="#fff" stop-opacity="1"/><stop offset=".35" stop-color="#f4f4f4" stop-opacity=".8"/><stop offset="1" stop-color="#ccc" stop-opacity="0"/></radialGradient><ellipse cx="662" cy="538" rx="62" ry="26" fill="url(#demr1)" transform="rotate(-38 662 538)"/><radialGradient id="demr2"><stop offset="0" stop-color="#c4c4c4" stop-opacity="1"/><stop offset=".5" stop-color="#bdbdbd" stop-opacity=".7"/><stop offset="1" stop-color="#b0b0b0" stop-opacity="0"/></radialGradient><ellipse cx="216" cy="380" rx="50" ry="30" fill="url(#demr2)"/></g></svg>
</body></html>
